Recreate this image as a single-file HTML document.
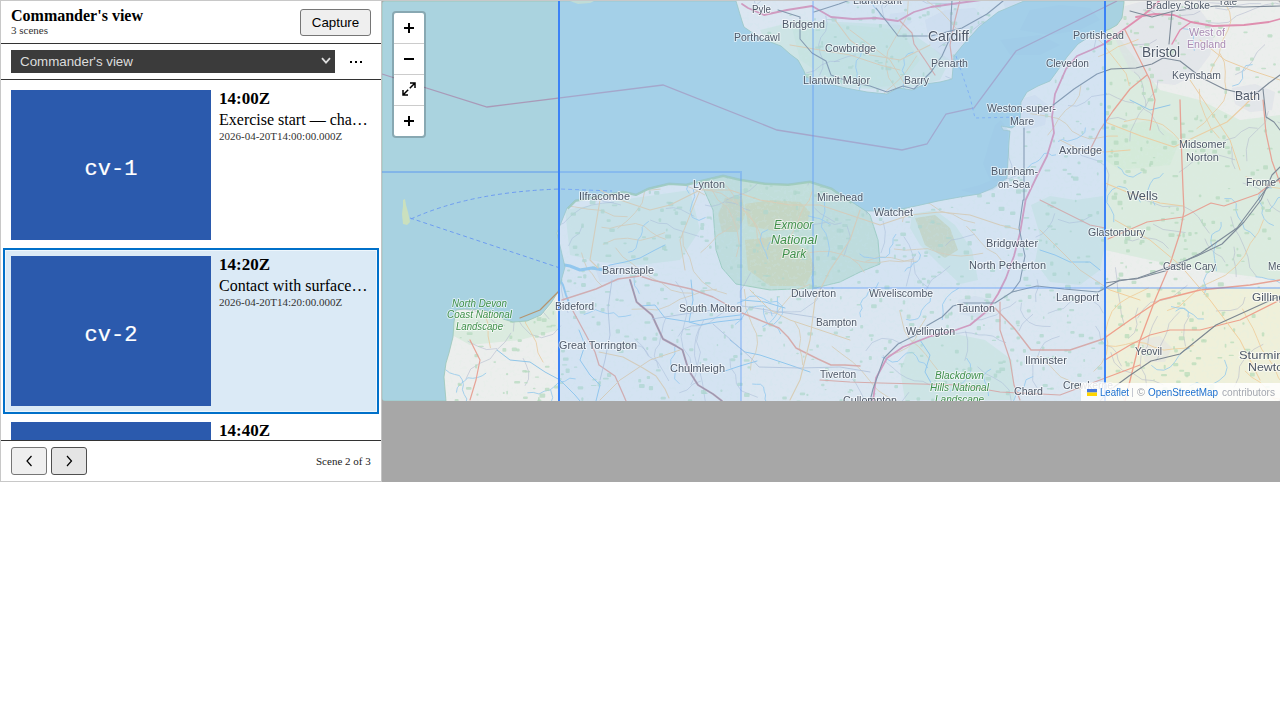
<!DOCTYPE html>
<html><head><meta charset="utf-8">
<style>
html,body{margin:0;padding:0;background:#fff;}
body{width:1280px;height:720px;overflow:hidden;position:relative;font-family:"Liberation Serif",serif;}
.a{position:absolute;}
#frame{position:absolute;left:0;top:0;width:1279px;height:480px;border-top:1px solid #c8c8c8;border-left:1px solid #c8c8c8;border-bottom:1px solid #c8c8c8;}
#pborder{position:absolute;left:381px;top:1px;width:1px;height:480px;background:#c4c4c4;}
.hl{position:absolute;left:1px;width:380px;height:1px;background:#333;}
.title{left:11px;top:6px;font-weight:bold;font-size:16px;line-height:20px;color:#000;white-space:nowrap;}
.sub{left:11px;top:24px;font-size:11px;line-height:13px;color:#333;white-space:nowrap;}
.btn{position:absolute;box-sizing:border-box;background:#efefef;border:1px solid #767676;border-radius:3px;font-family:"Liberation Sans",sans-serif;font-size:13.333px;color:#000;text-align:center;}
.cap{left:300px;top:9px;width:71px;height:27px;line-height:25px;}
.sel{left:11px;top:50px;width:324px;height:23px;background:#3b3b3b;color:#ddd;font-family:"Liberation Sans",sans-serif;font-size:13.333px;line-height:23px;}
.sel span{position:absolute;left:9px;top:0;}
.sel svg{position:absolute;left:310px;top:7px;}
.dots{left:348px;top:49px;font-family:"Liberation Sans",sans-serif;font-size:14px;color:#000;}
.card{position:absolute;left:3px;width:376px;height:166px;box-sizing:border-box;}
.card.on{background:#dbeaf6;border:2px solid #0070c9;box-shadow:inset 0 0 0 1px #eef6fc;}
.thumb{position:absolute;left:11px;width:200px;height:150px;background:#2b5aad;overflow:hidden;}
.thumb span{position:absolute;left:0;width:200px;top:67px;-webkit-text-stroke:0.2px #fff;text-align:center;color:#fff;font-family:"Liberation Mono",monospace;font-size:22px;line-height:26px;}
.t1{left:219px;font-weight:bold;font-size:17px;line-height:20px;white-space:nowrap;color:#000;}
.t2{left:219px;font-size:16px;line-height:19px;white-space:nowrap;color:#000;}
.t3{left:219px;font-size:11px;line-height:13px;color:#333;white-space:nowrap;}
.nav{top:447px;width:36px;height:28px;}
.scn{left:316px;top:455px;font-size:11px;line-height:13px;color:#222;white-space:nowrap;}
#list{position:absolute;left:1px;top:80px;width:380px;height:360px;overflow:hidden;}
#list .card{left:2px;}
#list .thumb{left:8px;}
#list .t1,#list .t2,#list .t3{left:216px;}
#map{position:absolute;left:382px;top:1px;width:898px;height:481px;background:#a7a7a7;overflow:hidden;}
#map svg{position:absolute;left:0;top:0;}
.ln{fill:#4e5868;font-family:"Liberation Sans",sans-serif;stroke:rgba(255,255,255,0.6);stroke-width:2px;paint-order:stroke;stroke-linejoin:round;}
.lg{fill:#3f8f4a;font-family:"Liberation Sans",sans-serif;font-style:italic;stroke:rgba(255,255,255,0.6);stroke-width:2px;paint-order:stroke;stroke-linejoin:round;}
.lp{fill:#a98bb5;font-family:"Liberation Sans",sans-serif;stroke:rgba(255,255,255,0.6);stroke-width:2px;paint-order:stroke;stroke-linejoin:round;}
.ctl{position:absolute;left:10px;top:10px;width:30px;height:123px;border:2px solid rgba(0,0,0,0.2);border-radius:4px;background:#fff;background-clip:padding-box;}
.ctl div{position:absolute;left:0;width:30px;height:30px;}
.ctl .sep{height:1px;background:#ccc;}
.attr{position:absolute;left:699px;top:382px;width:199px;height:18px;background:rgba(255,255,255,0.85);font-family:"Liberation Sans",sans-serif;font-size:10px;line-height:18px;white-space:nowrap;}
</style></head><body>
<div id="frame"></div>
<div id="pborder"></div>
<div class="a title">Commander's view</div>
<div class="a sub">3 scenes</div>
<div class="btn cap">Capture</div>
<div class="hl" style="top:43px;"></div>
<div class="a sel"><span>Commander's view</span><svg width="12" height="8" viewBox="0 0 12 8"><polyline points="1,1.2 5,5.6 9,1.2" fill="none" stroke="#ddd" stroke-width="1.8"/></svg></div>
<div class="a" style="left:350px;top:61px;width:2px;height:2px;background:#000"></div><div class="a" style="left:355px;top:61px;width:2px;height:2px;background:#000"></div><div class="a" style="left:360px;top:61px;width:2px;height:2px;background:#000"></div>
<div class="hl" style="top:79px;"></div>
<div id="list">
  <div class="card" style="top:2px;">
    <div class="thumb" style="top:8px;"><span>cv-1</span></div>
    <div class="a t1" style="top:7px;">14:00Z</div>
    <div class="a t2" style="top:28px;">Exercise start — cha…</div>
    <div class="a t3" style="top:48px;">2026-04-20T14:00:00.000Z</div>
  </div>
  <div class="card on" style="top:168px;">
    <div class="thumb" style="left:6px;top:6px;"><span>cv-2</span></div>
    <div class="a t1" style="left:214px;top:5px;">14:20Z</div>
    <div class="a t2" style="left:214px;top:26px;">Contact with surface…</div>
    <div class="a t3" style="left:214px;top:46px;">2026-04-20T14:20:00.000Z</div>
  </div>
  <div class="card" style="top:334px;">
    <div class="thumb" style="top:8px;"><span>cv-3</span></div>
    <div class="a t1" style="top:7px;">14:40Z</div>
  </div>
</div>
<div class="hl" style="top:440px;"></div>
<div class="btn nav" style="left:11px;"><svg width="34" height="26" viewBox="0 0 34 26" style="position:absolute;left:0;top:0"><polyline points="19.5,8 15,13 19.5,18" fill="none" stroke="#000" stroke-width="1.2"/></svg></div>
<div class="btn nav" style="left:51px;background:#e5e5e5;border-color:#4f4f4f;"><svg width="34" height="26" viewBox="0 0 34 26" style="position:absolute;left:0;top:0"><polyline points="15,8 19.5,13 15,18" fill="none" stroke="#000" stroke-width="1.2"/></svg></div>
<div class="a scn">Scene 2 of 3</div>

<div id="map">
<svg width="898" height="400" viewBox="382 1 898 400">
<defs><filter id="bl" x="0" y="0" width="100%" height="100%"><feGaussianBlur stdDeviation="0.35"/></filter><filter id="spk" x="0" y="0" width="100%" height="100%"><feTurbulence type="fractalNoise" baseFrequency="0.3" numOctaves="2" seed="7" result="n"/><feColorMatrix in="n" type="matrix" values="0 0 0 0 0.76  0 0 0 0 0.89  0 0 0 0 0.78  0 0 0 14 -8.0"/></filter><clipPath id="cp"><rect x="382" y="1" width="898" height="400" rx="3"/></clipPath></defs>
<g clip-path="url(#cp)">
<g filter="url(#bl)">
<rect x="382" y="1" width="898" height="400" fill="rgb(245,242,236)"/>
<polygon points="1105,288 1280,288 1280,401 1105,401" fill="#eef0d8" opacity="0.9"/>
<polygon points="1105,20 1160,90 1200,100 1240,120 1280,115 1280,280 1200,270 1150,260 1105,250" fill="#d6ecd2" opacity="0.6"/>
<polygon points="760,30 800,20 900,25 950,60 940,80 900,90 850,88 800,75 770,50" fill="#d6ecd2" opacity="0.6"/>
<polygon points="912,214 935,210 955,225 972,250 978,280 960,284 940,265 920,245 910,228" fill="#d6ecd2" opacity="0.6"/>
<polygon points="912,340 950,333 985,340 1012,360 1015,400 905,400 900,370" fill="#d6ecd2" opacity="0.6"/>
<polygon points="1031,205 1050,196 1075,200 1103,196 1106,240 1100,270 1080,285 1050,282 1035,262 1040,235" fill="#d6ecd2" opacity="0.6"/>
<polygon points="1105,130 1150,120 1180,140 1170,165 1120,170 1105,160" fill="#d6ecd2" opacity="0.6"/>
<polygon points="790,20 850,25 900,30 920,60 900,85 870,88 830,80 800,60" fill="#d6ecd2" opacity="0.6"/>
<polygon points="565,210 620,200 690,190 700,230 680,260 640,265 600,262 570,255" fill="#d6ecd2" opacity="0.6"/>
<polygon points="454,312 500,318 540,318 555,300 558,330 520,340 470,345 452,335" fill="#d6ecd2" opacity="0.6"/>
<polygon points="700,181 713,210 716,250 722,268 736,284 770,290 815,288 840,282 860,272 880,264 878,240 870,215 866,211 852,202 832,188 810,181 788,184 765,183 740,179 723,175" fill="#d2e6cc" stroke="#9ccca4" stroke-width="0.9"/>
<polygon points="725,198 742,196 745,215 738,232 722,232 718,215" fill="#d8d8a8" opacity="0.85"/>
<polygon points="745,204 770,200 800,202 810,212 806,228 775,231 748,226" fill="#d8d8a8" opacity="0.85"/>
<polygon points="745,240 780,236 808,250 815,268 805,286 770,286 748,270" fill="#d8d8a8" opacity="0.85"/>
<polygon points="915,218 935,215 950,228 958,250 945,258 925,245" fill="#d8d8a8" opacity="0.85"/>
<polygon points="1118,8 1140,2 1175,1 1200,10 1215,30 1210,55 1195,75 1175,85 1150,82 1130,70 1120,50 1112,30" fill="#e2dfe3" opacity="0.5"/>
<polygon points="925,20 945,10 975,8 990,25 985,50 965,62 945,60 930,45" fill="#e2dfe3" opacity="0.5"/>
<polygon points="1018,100 1035,95 1048,105 1045,125 1025,130 1015,118" fill="#e2dfe3" opacity="0.5"/>
<polygon points="958,300 975,296 992,300 994,312 978,318 960,314" fill="#e2dfe3" opacity="0.5"/>
<polygon points="1232,88 1255,84 1275,92 1272,110 1250,112 1235,104" fill="#e2dfe3" opacity="0.5"/>
<polygon points="1138,340 1160,336 1172,348 1165,362 1145,362" fill="#e2dfe3" opacity="0.5"/>
<polygon points="595,268 612,265 625,272 618,282 600,282" fill="#e2dfe3" opacity="0.5"/>
<polygon points="890,14 905,12 912,22 900,30 888,26" fill="#e2dfe3" opacity="0.5"/>
<polygon points="1003,1 1020,1 1018,8 1005,8" fill="#e2dfe3" opacity="0.5"/>
<rect x="382" y="1" width="898" height="400" filter="url(#spk)" opacity="0.2"/>
<g><polyline points="756.1246455457164,5.067667782827344 764.6,-2.1 772.5,-10.0 779.1,-18.9 789.0,-24.1 797.0,-31.9" fill="none" stroke="#b4b8c8" stroke-width="0.7" stroke-opacity="0.8"/>
<polyline points="945.2388285142222,245.70772908097825 951.2,240.1 959.2,238.7 967.0,236.4 974.8,234.2" fill="none" stroke="#b4b8c8" stroke-width="0.7" stroke-opacity="0.8"/>
<polyline points="515.0352596993099,288.586856120354 510.7,298.7 512.5,309.6 514.2,320.5 513.3,331.5" fill="none" stroke="#b4b8c8" stroke-width="0.7" stroke-opacity="0.8"/>
<polyline points="755.099670925008,3.669322312588962 752.3,-7.2 744.7,-15.5 736.4,-23.0 732.3,-33.5 729.2,-44.3 729.2,-55.5 725.7,-66.1 722.5,-76.9" fill="none" stroke="#b4b8c8" stroke-width="0.7" stroke-opacity="0.8"/>
<polyline points="1019.0290208607503,330.93357875911227 1022.1,324.2 1027.4,319.1 1033.0,314.2" fill="none" stroke="#b4b8c8" stroke-width="0.7" stroke-opacity="0.8"/>
<polyline points="548.8738671499839,236.4434473326064 550.9,247.8 555.6,258.3 555.4,269.8 561.5,279.4 561.7,290.9 563.9,302.2 568.1,312.9" fill="none" stroke="#b4b8c8" stroke-width="0.7" stroke-opacity="0.8"/>
<polyline points="728.6397173906648,6.136859563944407 733.4,15.2 733.2,25.5 729.5,35.1" fill="none" stroke="#b4b8c8" stroke-width="0.7" stroke-opacity="0.8"/>
<polyline points="1075.6204896396139,148.10092012688736 1081.2,155.3 1089.8,158.2 1098.4,161.0 1105.7,166.4 1108.9,174.9 1107.7,183.9 1105.9,192.8 1105.6,201.9" fill="none" stroke="#b4b8c8" stroke-width="0.7" stroke-opacity="0.8"/>
<polyline points="977.2361399777869,48.75265323091445 977.1,55.2 979.0,61.4 983.1,66.4 988.4,70.1" fill="none" stroke="#b4b8c8" stroke-width="0.7" stroke-opacity="0.8"/>
<polyline points="864.3342352163418,208.84533529198254 863.5,202.0 865.5,195.4 870.4,190.6" fill="none" stroke="#b4b8c8" stroke-width="0.7" stroke-opacity="0.8"/>
<polyline points="1145.8490009165866,106.71147353996983 1145.6,100.3 1143.0,94.5 1143.5,88.1 1141.7,82.0 1138.9,76.2 1134.1,71.9" fill="none" stroke="#b4b8c8" stroke-width="0.7" stroke-opacity="0.8"/>
<polyline points="541.711375786584,229.65742051582 552.8,227.0 563.5,223.3 571.5,215.2 580.8,208.7 591.5,205.1 602.7,203.1 614.0,202.2" fill="none" stroke="#b4b8c8" stroke-width="0.7" stroke-opacity="0.8"/>
<polyline points="1054.7362731639528,213.3849090753827 1052.3,221.0 1048.2,227.8 1042.7,233.7 1035.6,237.2" fill="none" stroke="#b4b8c8" stroke-width="0.7" stroke-opacity="0.8"/>
<polyline points="615.4226713920705,171.75039161455635 605.0,174.4 594.2,173.7 584.0,177.3 573.3,176.2 562.9,173.3" fill="none" stroke="#b4b8c8" stroke-width="0.7" stroke-opacity="0.8"/>
<polyline points="628.8871653387089,178.6354005512637 622.0,183.4 614.0,186.0 606.0,188.8 599.2,193.7 596.1,201.5" fill="none" stroke="#b4b8c8" stroke-width="0.7" stroke-opacity="0.8"/>
<polyline points="691.8741762801326,369.3968097032161 690.0,357.7 683.1,348.1 681.0,336.5 684.0,325.1 686.9,313.6 686.6,301.8 682.3,290.8 675.5,281.2" fill="none" stroke="#b4b8c8" stroke-width="0.7" stroke-opacity="0.8"/>
<polyline points="665.1442253289365,156.31131051624928 662.6,148.9 657.5,143.0 650.2,140.3 644.4,135.0 637.3,131.8 629.9,129.3 622.3,131.3" fill="none" stroke="#b4b8c8" stroke-width="0.7" stroke-opacity="0.8"/>
<polyline points="484.0725877332139,206.59850344516678 487.5,199.0 490.8,191.3 494.8,184.0 496.5,175.8 498.5,167.7" fill="none" stroke="#b4b8c8" stroke-width="0.7" stroke-opacity="0.8"/>
<polyline points="524.2306207120339,297.4968540790974 533.4,303.9 542.1,310.8 549.4,319.2" fill="none" stroke="#b4b8c8" stroke-width="0.7" stroke-opacity="0.8"/>
<polyline points="750.3023614338415,210.59566538099605 743.7,208.5 738.2,204.4 731.5,202.8 724.6,201.8 718.4,204.7 711.6,206.4 704.9,205.0" fill="none" stroke="#b4b8c8" stroke-width="0.7" stroke-opacity="0.8"/>
<polyline points="699.4677407547033,327.5063272145656 696.1,336.5 694.7,345.9 694.6,355.5 696.8,364.8 700.3,373.7 702.5,383.0 703.9,392.5 705.4,401.9" fill="none" stroke="#b4b8c8" stroke-width="0.7" stroke-opacity="0.8"/>
<polyline points="488.59007618258755,246.91383389864592 488.2,258.5 493.4,269.0 498.5,279.5" fill="none" stroke="#b4b8c8" stroke-width="0.7" stroke-opacity="0.8"/>
<polyline points="434.8842866284674,89.02135855860894 435.5,81.1 436.5,73.2 441.8,67.2 448.3,62.6" fill="none" stroke="#b4b8c8" stroke-width="0.7" stroke-opacity="0.8"/>
<polyline points="805.4695116253242,73.16776579643351 814.5,70.7 821.7,64.9 830.3,61.3 839.7,61.5" fill="none" stroke="#b4b8c8" stroke-width="0.7" stroke-opacity="0.8"/>
<polyline points="394.97746141438205,78.96764395598363 403.3,83.3 412.5,84.9 419.4,91.3" fill="none" stroke="#b4b8c8" stroke-width="0.7" stroke-opacity="0.8"/>
<polyline points="584.3416154005226,149.04885904249798 579.0,155.9 574.1,163.0 566.7,167.7 559.3,172.2 551.9,176.7 544.3,181.0 536.6,184.9 528.2,187.1" fill="none" stroke="#b4b8c8" stroke-width="0.7" stroke-opacity="0.8"/>
<polyline points="596.4721997151375,198.28634859594666 604.3,201.6 612.8,202.9 621.0,205.0" fill="none" stroke="#b4b8c8" stroke-width="0.7" stroke-opacity="0.8"/>
<polyline points="535.7475033531487,292.453300764737 542.7,289.4 547.9,283.9 549.2,276.5 552.5,269.7 553.9,262.2 557.9,255.8" fill="none" stroke="#b4b8c8" stroke-width="0.7" stroke-opacity="0.8"/>
<polyline points="812.4253758264492,133.9197755271723 805.4,132.3 798.2,131.6 791.2,133.3 784.1,134.5 777.7,137.8 773.5,143.7 767.6,147.8 763.1,153.4" fill="none" stroke="#b4b8c8" stroke-width="0.7" stroke-opacity="0.8"/>
<polyline points="884.619823986686,7.619409177705782 890.6,0.3 893.8,-8.7 900.2,-15.7 907.6,-21.6 915.0,-27.5 918.2,-36.5 920.6,-45.7" fill="none" stroke="#b4b8c8" stroke-width="0.7" stroke-opacity="0.8"/>
<polyline points="1209.54760089979,233.41793334944077 1203.7,225.5 1198.5,217.1 1191.3,210.5 1182.6,205.9 1172.7,206.1 1162.9,206.6 1153.7,203.1 1144.5,199.8" fill="none" stroke="#b4b8c8" stroke-width="0.7" stroke-opacity="0.8"/>
<polyline points="964.7370052075319,360.734131163353 967.6,350.9 967.7,340.7 965.5,330.7" fill="none" stroke="#b4b8c8" stroke-width="0.7" stroke-opacity="0.8"/>
<polyline points="752.6252899862337,157.9468512439928 743.8,150.0 734.3,142.9 730.3,131.6" fill="none" stroke="#b4b8c8" stroke-width="0.7" stroke-opacity="0.8"/>
<polyline points="388.55110687383745,184.53930758095535 390.6,190.3 389.8,196.3 389.7,202.4 391.0,208.3 391.4,214.4 393.1,220.2 397.6,224.3 403.1,226.8" fill="none" stroke="#b4b8c8" stroke-width="0.7" stroke-opacity="0.8"/>
<polyline points="921.2865892422178,184.12022395950095 911.3,183.0 902.2,178.8 895.8,171.1 892.8,161.5 893.7,151.5" fill="none" stroke="#b4b8c8" stroke-width="0.7" stroke-opacity="0.8"/>
<polyline points="650.2094534129511,219.99114290561928 658.3,223.2 667.0,223.7 674.1,228.7 682.4,231.3 690.7,233.9 699.0,236.4" fill="none" stroke="#b4b8c8" stroke-width="0.7" stroke-opacity="0.8"/>
<polyline points="1124.9433640932823,239.06868859706927 1132.6,240.9 1140.2,238.5 1148.1,238.0 1155.9,239.3 1163.0,242.9 1168.5,248.6" fill="none" stroke="#b4b8c8" stroke-width="0.7" stroke-opacity="0.8"/>
<polyline points="494.3925327861083,26.660798550868023 501.3,28.9 508.6,29.0 515.9,29.4 523.0,27.9 530.3,27.4 537.6,27.5 544.8,26.3 551.7,24.1" fill="none" stroke="#b4b8c8" stroke-width="0.7" stroke-opacity="0.8"/>
<polyline points="903.7510142826516,236.48300396851994 909.1,244.8 912.4,254.0 913.8,263.8 915.2,273.5 920.6,281.8 928.5,287.7" fill="none" stroke="#b4b8c8" stroke-width="0.7" stroke-opacity="0.8"/>
<polyline points="622.7539226671304,342.1181576705261 629.0,342.7 634.7,345.5 640.9,346.3 645.7,350.3 648.8,355.7" fill="none" stroke="#b4b8c8" stroke-width="0.7" stroke-opacity="0.8"/>
<polyline points="507.15462308870883,15.313698243954853 501.8,22.0 499.5,30.2 497.2,38.4 498.4,46.9 496.4,55.2 495.9,63.7" fill="none" stroke="#b4b8c8" stroke-width="0.7" stroke-opacity="0.8"/>
<polyline points="449.23305557590993,63.38222724922853 439.2,67.6 430.2,73.5 423.7,82.2" fill="none" stroke="#b4b8c8" stroke-width="0.7" stroke-opacity="0.8"/>
<polyline points="557.8489161154088,133.61690260698788 553.8,140.5 552.8,148.5 549.8,155.9" fill="none" stroke="#b4b8c8" stroke-width="0.7" stroke-opacity="0.8"/>
<polyline points="727.4157531864878,178.7367596230591 725.1,172.3 723.5,165.7 725.5,159.2 725.5,152.4 727.2,145.7" fill="none" stroke="#b4b8c8" stroke-width="0.7" stroke-opacity="0.8"/>
<polyline points="846.750335343389,148.41538677054388 837.8,151.1 831.1,157.6 824.1,163.7 817.3,170.1 810.5,176.5 807.8,185.4" fill="none" stroke="#b4b8c8" stroke-width="0.7" stroke-opacity="0.8"/>
<polyline points="1132.5098387659154,44.62676381104107 1141.0,44.5 1149.4,43.8 1156.7,39.5" fill="none" stroke="#b4b8c8" stroke-width="0.7" stroke-opacity="0.8"/>
<polyline points="613.7758653199406,53.939350974525865 618.4,48.2 619.9,41.0 618.2,33.9 614.5,27.5 608.3,23.5 601.5,20.9 594.3,19.2" fill="none" stroke="#b4b8c8" stroke-width="0.7" stroke-opacity="0.8"/>
<polyline points="1245.0444123298416,297.01430770420274 1243.0,304.0 1237.5,308.8 1230.4,310.5 1223.1,310.5 1215.9,311.0" fill="none" stroke="#b4b8c8" stroke-width="0.7" stroke-opacity="0.8"/>
<polyline points="757.7832422396361,397.3484528813985 749.5,394.1 741.3,390.8 736.4,383.5 735.6,374.7 730.5,367.4 729.9,358.6" fill="none" stroke="#b4b8c8" stroke-width="0.7" stroke-opacity="0.8"/>
<polyline points="1095.4437628637586,325.92009658320524 1099.4,332.0 1100.6,339.2 1105.1,344.9 1111.9,347.3 1116.6,352.8 1118.1,359.9 1121.6,366.3" fill="none" stroke="#b4b8c8" stroke-width="0.7" stroke-opacity="0.8"/>
<polyline points="1126.4863857234996,120.43365620617837 1118.1,117.5 1109.3,118.8 1102.7,124.8" fill="none" stroke="#b4b8c8" stroke-width="0.7" stroke-opacity="0.8"/>
<polyline points="751.9244565487711,124.6520035374757 758.0,122.4 764.3,123.7 769.9,126.8" fill="none" stroke="#b4b8c8" stroke-width="0.7" stroke-opacity="0.8"/>
<polyline points="511.07494326669985,332.82994879346415 505.0,342.1 496.9,349.8 490.3,358.8 480.2,363.2 470.7,369.0 465.9,379.1" fill="none" stroke="#b4b8c8" stroke-width="0.7" stroke-opacity="0.8"/>
<polyline points="690.7818117917427,384.85907023575635 695.8,374.6 697.9,363.4 700.4,352.2 696.5,341.5 699.1,330.3 703.8,319.9" fill="none" stroke="#b4b8c8" stroke-width="0.7" stroke-opacity="0.8"/>
<polyline points="1267.2508708157359,198.78495028248014 1270.5,205.5 1276.4,210.0 1282.9,213.7 1286.9,220.0" fill="none" stroke="#b4b8c8" stroke-width="0.7" stroke-opacity="0.8"/>
<polyline points="551.0691702159286,164.12097804884957 544.3,166.4 537.4,168.2 530.7,170.7" fill="none" stroke="#b4b8c8" stroke-width="0.7" stroke-opacity="0.8"/>
<polyline points="1207.8837552700775,22.569672777575555 1218.1,23.3 1228.4,22.3 1236.4,15.9 1246.0,12.3 1255.5,8.3 1265.1,4.8 1275.3,3.1 1285.3,5.3" fill="none" stroke="#b4b8c8" stroke-width="0.7" stroke-opacity="0.8"/>
<polyline points="847.1129929974247,174.76901449620874 854.1,183.8 861.7,192.3 863.9,203.5 867.0,214.5" fill="none" stroke="#b4b8c8" stroke-width="0.7" stroke-opacity="0.8"/>
<polyline points="1263.338434694445,344.2476890444265 1253.6,349.4 1245.7,357.1 1239.6,366.3 1238.7,377.2 1234.2,387.3" fill="none" stroke="#b4b8c8" stroke-width="0.7" stroke-opacity="0.8"/>
<polyline points="821.0997435806717,293.55739081659544 815.8,301.1 808.2,306.3 800.7,311.6 791.5,311.9 782.3,311.7 773.2,313.5 764.3,311.4" fill="none" stroke="#b4b8c8" stroke-width="0.7" stroke-opacity="0.8"/>
<polyline points="699.0701038670206,73.80204695082605 703.0,68.5 709.1,66.0 715.7,65.2" fill="none" stroke="#b4b8c8" stroke-width="0.7" stroke-opacity="0.8"/>
<polyline points="897.7909156472007,171.83061702026697 901.7,162.0 904.8,151.9 906.8,141.5 909.1,131.1 914.7,122.2 922.4,114.9 931.8,110.0 942.4,110.2" fill="none" stroke="#b4b8c8" stroke-width="0.7" stroke-opacity="0.8"/>
<polyline points="1142.8810390273238,9.995115662089681 1150.3,10.6 1156.8,14.3 1164.3,13.6 1171.4,15.6 1178.9,15.8 1186.3,15.1 1193.7,14.4 1200.3,11.0" fill="none" stroke="#b4b8c8" stroke-width="0.7" stroke-opacity="0.8"/>
<polyline points="1001.6134401830101,133.5626650977033 1004.9,141.4 1008.6,149.1 1008.9,157.7 1011.9,165.7 1011.0,174.1" fill="none" stroke="#b4b8c8" stroke-width="0.7" stroke-opacity="0.8"/>
<polyline points="1137.4557711939215,318.3116858335746 1143.1,309.5 1150.7,302.4 1160.9,300.4 1171.1,298.0 1179.2,291.5 1187.5,285.2" fill="none" stroke="#b4b8c8" stroke-width="0.7" stroke-opacity="0.8"/>
<polyline points="1233.9594949531906,246.6895030356407 1234.8,252.8 1233.5,258.9 1235.1,264.8 1236.0,271.0 1236.2,277.1" fill="none" stroke="#b4b8c8" stroke-width="0.7" stroke-opacity="0.8"/>
<polyline points="1179.9135385025545,311.49093500824017 1174.3,317.3 1169.1,323.5 1167.2,331.4 1164.0,338.8 1160.3,346.0 1160.2,354.1 1155.8,360.9" fill="none" stroke="#b4b8c8" stroke-width="0.7" stroke-opacity="0.8"/>
<polyline points="1268.33150710482,110.96927959501326 1265.4,122.2 1257.0,130.2 1248.9,138.3 1246.3,149.6 1246.9,161.2" fill="none" stroke="#b4b8c8" stroke-width="0.7" stroke-opacity="0.8"/>
<polyline points="680.67057472308,1.1445796574403246 686.1,-8.7 685.3,-19.8 682.8,-30.7 683.0,-41.9 679.9,-52.7" fill="none" stroke="#b4b8c8" stroke-width="0.7" stroke-opacity="0.8"/>
<polyline points="438.5466610955435,238.5906025532498 436.2,226.8 427.9,218.2 421.7,207.9 420.9,196.0" fill="none" stroke="#b4b8c8" stroke-width="0.7" stroke-opacity="0.8"/>
<polyline points="847.1690980290582,226.06420482765085 850.2,236.3 847.0,246.6 843.7,256.7" fill="none" stroke="#b4b8c8" stroke-width="0.7" stroke-opacity="0.8"/>
<polyline points="396.21776169690173,44.19089220448831 397.3,53.9 397.4,63.6 392.1,71.7 383.2,75.5" fill="none" stroke="#b4b8c8" stroke-width="0.7" stroke-opacity="0.8"/>
<polyline points="1016.2932678006076,301.5362835660121 1010.0,306.5 1002.5,309.1 996.8,314.8 989.2,317.0 981.7,319.7 973.7,320.0" fill="none" stroke="#b4b8c8" stroke-width="0.7" stroke-opacity="0.8"/>
<polyline points="1178.9004686556614,172.4304409307726 1187.3,166.4 1195.2,159.6 1205.4,157.5 1215.3,154.3 1225.3,156.9 1235.3,159.9" fill="none" stroke="#b4b8c8" stroke-width="0.7" stroke-opacity="0.8"/>
<polyline points="957.495748057521,4.906028289470109 947.2,3.6 936.9,3.3 926.5,3.1 917.4,-1.9 907.5,-5.0" fill="none" stroke="#b4b8c8" stroke-width="0.7" stroke-opacity="0.8"/>
<polyline points="1057.901513006841,219.33835154734967 1069.3,223.0 1081.1,221.5 1091.6,215.7" fill="none" stroke="#b4b8c8" stroke-width="0.7" stroke-opacity="0.8"/>
<polyline points="658.5301216209343,368.1703413375241 656.9,361.8 654.3,355.8 655.5,349.4 659.4,344.1 660.5,337.7 662.1,331.3 663.2,324.9 665.5,318.7" fill="none" stroke="#b4b8c8" stroke-width="0.7" stroke-opacity="0.8"/>
<polyline points="1153.079800379765,224.06419064931276 1163.1,229.5 1174.4,231.0 1185.6,232.6" fill="none" stroke="#b4b8c8" stroke-width="0.7" stroke-opacity="0.8"/>
<polyline points="1006.0868621002968,342.73202993343324 999.3,340.2 993.2,336.2 986.1,335.0 978.8,334.9 971.8,333.1 964.5,332.3 957.3,333.4 950.2,332.1" fill="none" stroke="#b4b8c8" stroke-width="0.7" stroke-opacity="0.8"/>
<polyline points="404.26993616306663,128.0494057405312 407.9,135.0 408.5,142.8 411.2,150.2" fill="none" stroke="#b4b8c8" stroke-width="0.7" stroke-opacity="0.8"/>
<polyline points="1222.1099781282032,3.531216870254527 1210.5,2.8 1198.9,1.8 1189.5,-5.0 1180.3,-12.1 1173.7,-21.6 1172.2,-33.1" fill="none" stroke="#b4b8c8" stroke-width="0.7" stroke-opacity="0.8"/>
<polyline points="1059.610679517989,336.26536256813307 1051.8,338.8 1044.5,342.7 1040.1,349.7 1037.3,357.5 1032.8,364.3 1032.9,372.6 1032.7,380.8 1037.1,387.8" fill="none" stroke="#b4b8c8" stroke-width="0.7" stroke-opacity="0.8"/>
<polyline points="1158.0640130980241,79.6647808833043 1156.7,89.5 1150.4,97.2 1145.7,106.0 1139.3,113.6 1134.8,122.5 1130.5,131.4 1129.8,141.4" fill="none" stroke="#b4b8c8" stroke-width="0.7" stroke-opacity="0.8"/>
<polyline points="728.4585189503465,116.36009012557412 734.0,112.0 740.8,109.9 747.6,111.9 753.6,115.8 759.4,119.8 763.2,125.8 762.9,132.9 766.6,138.9" fill="none" stroke="#b4b8c8" stroke-width="0.7" stroke-opacity="0.8"/>
<polyline points="1110.761384641995,352.133497814247 1114.3,362.6 1122.4,370.2 1133.0,373.4 1142.2,379.6 1153.2,380.6 1163.4,384.8" fill="none" stroke="#b4b8c8" stroke-width="0.7" stroke-opacity="0.8"/>
<polyline points="383.60931490512445,275.7619770588757 387.6,281.8 392.7,286.8 399.2,289.9 404.3,295.0" fill="none" stroke="#b4b8c8" stroke-width="0.7" stroke-opacity="0.8"/>
<polyline points="702.8723854310294,32.39001865530986 695.4,30.9 688.0,32.0 681.7,36.3 674.2,37.1" fill="none" stroke="#b4b8c8" stroke-width="0.7" stroke-opacity="0.8"/>
<polyline points="762.8280799809922,178.51851852470267 756.4,184.5 749.9,190.4 741.9,194.1 733.6,196.7 725.6,200.4" fill="none" stroke="#b4b8c8" stroke-width="0.7" stroke-opacity="0.8"/>
<polyline points="880.9030765959081,253.18002525212532 884.5,242.8 885.3,231.8 883.0,221.0" fill="none" stroke="#b4b8c8" stroke-width="0.7" stroke-opacity="0.8"/>
<polyline points="504.6644707298536,325.44166738170475 496.3,323.8 489.8,318.1 482.7,313.4 474.5,310.9 466.0,309.3 457.6,307.6 449.3,305.6 440.7,304.8" fill="none" stroke="#b4b8c8" stroke-width="0.7" stroke-opacity="0.8"/>
<polyline points="524.955933292306,385.8188328493704 528.5,379.3 528.7,371.8 526.2,364.8 523.0,358.1" fill="none" stroke="#b4b8c8" stroke-width="0.7" stroke-opacity="0.8"/>
<polyline points="510.05606399007064,142.40940543448596 503.3,137.0 498.1,130.1 493.1,123.0" fill="none" stroke="#b4b8c8" stroke-width="0.7" stroke-opacity="0.8"/>
<polyline points="406.41281619927287,270.5773354105619 410.9,265.8 416.2,262.0 422.3,259.8 428.5,257.9 433.7,254.0 440.0,252.3" fill="none" stroke="#b4b8c8" stroke-width="0.7" stroke-opacity="0.8"/>
<polyline points="865.7796727072973,350.91460733434303 872.2,342.6 881.9,338.4 892.4,339.4 901.8,344.1" fill="none" stroke="#b4b8c8" stroke-width="0.7" stroke-opacity="0.8"/>
<polyline points="497.0579666821699,348.54256025581225 486.7,349.6 476.9,345.9 467.6,341.1" fill="none" stroke="#b4b8c8" stroke-width="0.7" stroke-opacity="0.8"/>
<polyline points="672.0788267006254,33.89832745983521 673.8,27.7 675.0,21.3 678.8,16.1" fill="none" stroke="#b4b8c8" stroke-width="0.7" stroke-opacity="0.8"/>
<polyline points="765.1788233568675,103.0294799630928 769.6,97.9 774.2,92.9 780.6,90.7 786.7,87.8" fill="none" stroke="#b4b8c8" stroke-width="0.7" stroke-opacity="0.8"/>
<polyline points="729.649630327066,22.904304627310054 730.4,30.4 733.9,37.0 735.1,44.4 733.6,51.8 735.1,59.1 732.3,66.1 726.2,70.4 718.9,72.3" fill="none" stroke="#b4b8c8" stroke-width="0.7" stroke-opacity="0.8"/>
<polyline points="1230.727603410567,216.5135018367352 1233.7,227.1 1239.5,236.5 1244.0,246.6 1248.0,256.9 1249.8,267.7 1256.6,276.5" fill="none" stroke="#b4b8c8" stroke-width="0.7" stroke-opacity="0.8"/>
<polyline points="950.1271853962986,265.8687180281023 941.1,273.3 931.6,279.9 926.0,290.1" fill="none" stroke="#b4b8c8" stroke-width="0.7" stroke-opacity="0.8"/>
<polyline points="1103.2596820740573,313.21385346356294 1099.3,305.8 1092.6,300.9 1085.0,297.3 1076.7,298.1 1069.6,302.5 1063.7,308.4 1055.6,310.5 1047.8,313.4" fill="none" stroke="#b4b8c8" stroke-width="0.7" stroke-opacity="0.8"/>
<polyline points="977.4948602564128,366.6928388527416 984.9,373.3 993.8,377.7 1002.3,382.8 1009.1,390.0 1011.0,399.8 1012.2,409.6 1017.4,418.0" fill="none" stroke="#b4b8c8" stroke-width="0.7" stroke-opacity="0.8"/>
<polyline points="841.539433203119,222.97002383199796 834.6,224.5 827.9,221.9 820.9,223.4 813.8,224.5 807.7,228.3" fill="none" stroke="#b4b8c8" stroke-width="0.7" stroke-opacity="0.8"/>
<polyline points="628.7252391752123,161.89818103230425 633.2,151.2 636.3,139.9 644.9,132.1 650.5,121.9 653.0,110.5" fill="none" stroke="#b4b8c8" stroke-width="0.7" stroke-opacity="0.8"/>
<polyline points="848.4808267671096,374.49226708129896 855.6,382.9 860.8,392.5 865.6,402.4 867.6,413.2 873.3,422.6 874.0,433.5 873.5,444.5 871.5,455.3" fill="none" stroke="#b4b8c8" stroke-width="0.7" stroke-opacity="0.8"/>
<polyline points="908.2531478794245,178.15566309636824 913.3,169.0 919.1,160.3 920.0,149.9" fill="none" stroke="#b4b8c8" stroke-width="0.7" stroke-opacity="0.8"/>
<polyline points="1090.6239603370545,19.990684762622667 1094.3,29.2 1096.0,39.0 1093.9,48.8" fill="none" stroke="#b4b8c8" stroke-width="0.7" stroke-opacity="0.8"/>
<polyline points="571.4687547995411,15.660573369498087 576.1,6.2 579.8,-3.7 588.0,-10.2 598.0,-13.4 608.5,-13.4 617.6,-8.0 623.1,0.9" fill="none" stroke="#b4b8c8" stroke-width="0.7" stroke-opacity="0.8"/>
<polyline points="889.3731624723179,23.586476590520952 883.6,16.2 881.7,7.0 884.4,-2.0 885.0,-11.3 888.7,-19.9 893.2,-28.1 900.2,-34.3" fill="none" stroke="#b4b8c8" stroke-width="0.7" stroke-opacity="0.8"/>
<polyline points="960.9574657539055,198.13927766490866 966.8,193.0 973.8,189.7 978.6,183.6 985.5,180.0 993.2,179.3 1000.9,178.7 1008.7,178.6 1016.0,176.0" fill="none" stroke="#b4b8c8" stroke-width="0.7" stroke-opacity="0.8"/>
<polyline points="709.2758063719891,60.33403291161028 714.7,70.2 714.2,81.3 709.4,91.4 704.9,101.7 699.0,111.2 693.4,120.9" fill="none" stroke="#b4b8c8" stroke-width="0.7" stroke-opacity="0.8"/>
<polyline points="645.6610255956496,60.753716236365584 649.1,54.7 649.7,47.7 653.9,42.1 656.0,35.5" fill="none" stroke="#b4b8c8" stroke-width="0.7" stroke-opacity="0.8"/>
<polyline points="885.1713164543335,166.4249062799725 893.2,170.3 900.6,175.4 906.8,181.9 915.4,184.1" fill="none" stroke="#b4b8c8" stroke-width="0.7" stroke-opacity="0.8"/>
<polyline points="1017.6086455585755,104.49131715930659 1013.2,111.8 1006.3,116.6 998.6,120.1" fill="none" stroke="#b4b8c8" stroke-width="0.7" stroke-opacity="0.8"/>
<polyline points="500.943116683964,297.3630664024513 509.1,306.0 515.8,315.8 522.1,325.8 530.4,334.3 541.7,337.7 553.1,334.3 561.0,325.5" fill="none" stroke="#b4b8c8" stroke-width="0.7" stroke-opacity="0.8"/>
<polyline points="1115.3921355824891,267.24606156609417 1116.9,278.9 1117.8,290.7 1119.9,302.3 1121.3,314.0 1124.4,325.3" fill="none" stroke="#b4b8c8" stroke-width="0.7" stroke-opacity="0.8"/>
<polyline points="908.9285694892114,392.22792185297055 901.8,401.6 898.3,412.8 898.6,424.6 895.1,435.9" fill="none" stroke="#b4b8c8" stroke-width="0.7" stroke-opacity="0.8"/>
<polyline points="582.3744008539109,225.50440409217327 579.2,233.4 572.2,238.3 568.6,246.0" fill="none" stroke="#b4b8c8" stroke-width="0.7" stroke-opacity="0.8"/>
<polyline points="1120.7008438555042,390.7107707842932 1124.6,402.0 1124.3,413.8 1121.2,425.3 1118.7,437.0 1116.4,448.6" fill="none" stroke="#b4b8c8" stroke-width="0.7" stroke-opacity="0.8"/>
<polyline points="825.759911409391,15.61118756760138 827.1,23.4 825.7,31.2 820.8,37.5 818.6,45.0 820.0,52.8 822.9,60.2 822.8,68.1 819.5,75.3" fill="none" stroke="#b4b8c8" stroke-width="0.7" stroke-opacity="0.8"/>
<polyline points="1235.1757752860658,169.03937252253175 1232.1,162.0 1232.2,154.3 1231.4,146.6" fill="none" stroke="#b4b8c8" stroke-width="0.7" stroke-opacity="0.8"/>
<polyline points="827.4923955789584,119.4444603809713 819.4,122.2 811.2,124.8 804.1,129.6 795.5,130.2 787.5,127.1 780.6,122.1 774.1,116.5 769.3,109.4" fill="none" stroke="#b4b8c8" stroke-width="0.7" stroke-opacity="0.8"/>
<polyline points="458.0665968718891,145.72407155128306 455.2,156.1 456.9,166.7 464.3,174.5" fill="none" stroke="#b4b8c8" stroke-width="0.7" stroke-opacity="0.8"/>
<polyline points="1235.1611825285786,74.79703759409276 1245.0,70.1 1252.0,61.7 1257.1,52.1 1265.0,44.5" fill="none" stroke="#b4b8c8" stroke-width="0.7" stroke-opacity="0.8"/>
<polyline points="385.1431292638503,216.95158231073532 386.9,227.1 385.6,237.3 383.0,247.2 381.0,257.3" fill="none" stroke="#b4b8c8" stroke-width="0.7" stroke-opacity="0.8"/>
<polyline points="916.0164277062942,253.4849372512958 911.5,261.0 910.5,269.6 908.3,278.0 906.2,286.5" fill="none" stroke="#b4b8c8" stroke-width="0.7" stroke-opacity="0.8"/>
<polyline points="443.56807646822216,201.38272812528098 449.6,203.3 455.7,201.9 461.0,198.5 466.2,194.9 471.8,192.0" fill="none" stroke="#b4b8c8" stroke-width="0.7" stroke-opacity="0.8"/>
<polyline points="1264.784508039268,193.12886952380296 1258.2,188.3 1250.5,185.4 1242.7,183.0" fill="none" stroke="#b4b8c8" stroke-width="0.7" stroke-opacity="0.8"/>
<polyline points="818.7589538435291,145.20620882496084 811.7,136.7 801.3,133.1 791.2,128.5 780.2,128.9 770.8,123.1 759.8,122.3 748.8,121.9" fill="none" stroke="#b4b8c8" stroke-width="0.7" stroke-opacity="0.8"/>
<polyline points="1204.8290257321642,238.60486605342183 1207.4,244.5 1211.2,249.7 1216.0,253.9 1221.7,256.9 1225.1,262.4" fill="none" stroke="#b4b8c8" stroke-width="0.7" stroke-opacity="0.8"/>
<polyline points="1067.9506395916264,105.54759275547522 1076.8,106.1 1084.9,102.3 1091.6,96.5 1100.4,95.1 1109.2,94.0 1117.2,98.0 1125.4,101.4 1134.1,103.1" fill="none" stroke="#b4b8c8" stroke-width="0.7" stroke-opacity="0.8"/>
<polyline points="588.0057535828957,99.9884329321034 594.0,92.5 602.5,88.3 612.1,88.6 620.5,84.1 629.7,81.5" fill="none" stroke="#b4b8c8" stroke-width="0.7" stroke-opacity="0.8"/>
<polyline points="449.14911692248006,142.262168956993 444.1,133.2 436.8,125.8 434.4,115.8 437.9,106.0" fill="none" stroke="#b4b8c8" stroke-width="0.7" stroke-opacity="0.8"/>
<polyline points="856.0476719451187,54.7736615922348 848.5,56.4 841.2,58.9 834.0,61.8" fill="none" stroke="#b4b8c8" stroke-width="0.7" stroke-opacity="0.8"/>
<polyline points="814.4855296452527,207.98032359012242 820.6,213.7 827.8,217.8 835.0,222.2" fill="none" stroke="#b4b8c8" stroke-width="0.7" stroke-opacity="0.8"/>
<polyline points="1210.8926804217385,145.81273555404925 1219.5,144.7 1226.6,139.8 1235.0,137.4 1241.4,131.6 1249.0,127.5 1257.6,128.3" fill="none" stroke="#b4b8c8" stroke-width="0.7" stroke-opacity="0.8"/>
<polyline points="1050.5745770867557,326.5051728688489 1043.1,326.3 1035.7,325.4 1029.0,322.2 1023.9,316.8 1020.6,310.1 1021.5,302.7" fill="none" stroke="#b4b8c8" stroke-width="0.7" stroke-opacity="0.8"/>
<polyline points="1163.7822816065484,135.15874213898965 1159.3,130.5 1157.2,124.3 1153.8,118.8 1150.8,113.1 1145.2,109.9 1140.4,105.5" fill="none" stroke="#b4b8c8" stroke-width="0.7" stroke-opacity="0.8"/>
<polyline points="1277.5787867052445,121.88566003629123 1283.9,124.8 1290.7,125.8 1297.0,128.6 1303.9,127.9 1309.8,124.3" fill="none" stroke="#b4b8c8" stroke-width="0.7" stroke-opacity="0.8"/>
<polyline points="665.7906873773404,208.51121773811073 673.3,207.7 680.8,209.4 687.5,212.9 694.3,216.4" fill="none" stroke="#b4b8c8" stroke-width="0.7" stroke-opacity="0.8"/>
<polyline points="1154.1620740532892,391.0366285947244 1160.2,392.5 1165.7,395.4 1171.9,396.1 1178.0,397.3" fill="none" stroke="#b4b8c8" stroke-width="0.7" stroke-opacity="0.8"/>
<polyline points="458.3779851193377,187.30051926152595 451.5,185.5 444.4,185.6 437.6,183.3" fill="none" stroke="#b4b8c8" stroke-width="0.7" stroke-opacity="0.8"/>
<polyline points="451.7725666666315,110.61967640525386 450.1,121.7 450.7,132.9 455.3,143.1" fill="none" stroke="#b4b8c8" stroke-width="0.7" stroke-opacity="0.8"/>
<polyline points="678.006557541032,336.6573342067035 683.2,329.2 691.6,325.9 700.7,325.6 709.3,322.8 716.3,317.1 723.8,312.0 732.2,308.6" fill="none" stroke="#b4b8c8" stroke-width="0.7" stroke-opacity="0.8"/>
<polyline points="1261.2088808413741,3.7200757348172733 1249.4,3.6 1237.7,5.4 1226.8,9.9 1215.2,8.0" fill="none" stroke="#b4b8c8" stroke-width="0.7" stroke-opacity="0.8"/>
<polyline points="1157.6125832394332,315.9664667293116 1152.6,325.5 1149.0,335.7 1147.4,346.4 1141.1,355.2 1140.2,366.0 1145.3,375.5 1146.6,386.2" fill="none" stroke="#b4b8c8" stroke-width="0.7" stroke-opacity="0.8"/>
<polyline points="794.158694353159,127.30229725410854 805.4,124.6 815.2,118.6 825.3,113.1 835.3,107.4 846.7,106.2" fill="none" stroke="#b4b8c8" stroke-width="0.7" stroke-opacity="0.8"/>
<polyline points="740.1448504270088,297.88877149906835 740.2,290.9 744.1,285.0 747.4,278.8 750.7,272.6" fill="none" stroke="#b4b8c8" stroke-width="0.7" stroke-opacity="0.8"/>
<polyline points="988.6418841105071,94.9312510551908 983.2,98.0 977.2,100.1 971.9,103.4" fill="none" stroke="#b4b8c8" stroke-width="0.7" stroke-opacity="0.8"/>
<polyline points="1010.0094509895446,19.304500997066818 1000.5,21.8 990.6,21.5 980.9,23.4 973.2,29.6 964.6,34.5 956.5,40.2 946.8,41.8 938.6,47.3" fill="none" stroke="#b4b8c8" stroke-width="0.7" stroke-opacity="0.8"/>
<polyline points="1128.074442545758,338.5213472722204 1134.5,332.7 1137.1,324.4 1135.4,315.9 1137.9,307.6" fill="none" stroke="#b4b8c8" stroke-width="0.7" stroke-opacity="0.8"/>
<polyline points="1185.4987875455777,346.41305686256305 1183.7,335.7 1184.4,324.9 1189.7,315.4" fill="none" stroke="#b4b8c8" stroke-width="0.7" stroke-opacity="0.8"/>
<polyline points="930.3179455789423,385.3266497613642 922.9,381.3 914.5,380.8 906.6,377.9 899.4,373.6 893.1,368.0 886.6,362.6 883.0,355.0" fill="none" stroke="#b4b8c8" stroke-width="0.7" stroke-opacity="0.8"/>
<polyline points="945.4474229113088,76.31265188070381 951.3,78.7 955.8,83.3 961.7,85.6" fill="none" stroke="#b4b8c8" stroke-width="0.7" stroke-opacity="0.8"/>
<polyline points="716.4685824089021,132.7377644775946 723.1,126.4 728.1,118.6 728.9,109.5 732.2,100.9 737.9,93.6 739.4,84.5 742.8,76.0 741.4,66.9" fill="none" stroke="#b4b8c8" stroke-width="0.7" stroke-opacity="0.8"/>
<polyline points="1035.8983194229236,301.987877950299 1035.6,294.2 1038.5,286.9 1037.0,279.3" fill="none" stroke="#b4b8c8" stroke-width="0.7" stroke-opacity="0.8"/>
<polyline points="431.7176239934701,178.48398121848203 438.7,168.9 447.3,160.9 457.3,154.6 464.8,145.4 474.7,139.0 486.5,138.0 498.3,138.3 509.3,142.5" fill="none" stroke="#b4b8c8" stroke-width="0.7" stroke-opacity="0.8"/>
<polyline points="634.3000482534537,338.83416170263337 642.6,346.2 648.2,355.9 657.6,361.8 663.3,371.3 668.9,381.0" fill="none" stroke="#b4b8c8" stroke-width="0.7" stroke-opacity="0.8"/>
<polyline points="679.2586868366748,392.80466354145784 687.1,390.0 693.0,384.1 700.8,381.1" fill="none" stroke="#b4b8c8" stroke-width="0.7" stroke-opacity="0.8"/>
<polyline points="1000.9694779399086,129.3868631656263 991.2,132.0 981.6,129.2 972.0,126.0" fill="none" stroke="#b4b8c8" stroke-width="0.7" stroke-opacity="0.8"/>
<polyline points="475.32194889854986,176.68373135557997 467.8,171.8 460.6,166.3 456.3,158.4 453.5,149.8 454.0,140.9 454.9,131.9" fill="none" stroke="#f0cf9e" stroke-width="1" stroke-opacity="0.9"/>
<polyline points="548.6923995868515,199.89137827494125 561.2,205.2 574.7,206.9 588.1,209.2 601.6,210.4 614.0,216.1 627.6,216.7" fill="none" stroke="#f0cf9e" stroke-width="1" stroke-opacity="0.9"/>
<polyline points="799.579000844388,116.34316986326681 795.1,124.3 789.8,131.7 784.8,139.3 780.0,147.1" fill="none" stroke="#f0cf9e" stroke-width="1" stroke-opacity="0.9"/>
<polyline points="547.2876484252306,57.03724430165053 553.9,51.5 559.4,44.9 561.6,36.6 566.5,29.6 568.3,21.2 568.2,12.6 570.7,4.3 573.8,-3.7" fill="none" stroke="#f0cf9e" stroke-width="1" stroke-opacity="0.9"/>
<polyline points="775.9800497390681,313.3910892606993 783.3,304.5 790.7,295.8 799.5,288.5 810.2,284.2" fill="none" stroke="#f0cf9e" stroke-width="1" stroke-opacity="0.9"/>
<polyline points="809.2396481466731,252.56923183068628 819.6,251.4 830.1,251.5 840.2,254.0 850.1,257.5 858.4,263.8 864.3,272.4" fill="none" stroke="#f0cf9e" stroke-width="1" stroke-opacity="0.9"/>
<polyline points="794.7808561785363,321.8666190363711 799.3,329.7 800.6,338.6 799.3,347.5 801.8,356.2 802.7,365.1" fill="none" stroke="#f0cf9e" stroke-width="1" stroke-opacity="0.9"/>
<polyline points="676.8624409649663,176.02571834360361 689.7,175.4 702.0,179.5 711.2,188.5 717.6,199.7 727.6,207.8 733.3,219.4 737.3,231.6 739.3,244.4 736.2,256.9" fill="none" stroke="#f0cf9e" stroke-width="1" stroke-opacity="0.9"/>
<polyline points="1105.5022714544903,345.5444511498028 1115.5,346.4 1125.4,344.5 1135.1,341.9 1145.1,343.2 1154.3,347.2 1163.9,350.1 1173.9,348.9 1184.0,348.3 1193.6,345.4" fill="none" stroke="#f0cf9e" stroke-width="1" stroke-opacity="0.9"/>
<polyline points="1129.3210107690643,85.9702269747672 1126.2,73.8 1118.5,63.9 1110.7,54.0 1103.1,44.0 1093.7,35.6 1082.0,31.2" fill="none" stroke="#f0cf9e" stroke-width="1" stroke-opacity="0.9"/>
<polyline points="932.7503356675159,147.39027695849606 924.7,152.3 918.7,159.5 915.1,168.2 915.0,177.6 912.0,186.5 906.8,194.4 904.6,203.5 904.2,212.9 902.5,222.1" fill="none" stroke="#f0cf9e" stroke-width="1" stroke-opacity="0.9"/>
<polyline points="434.04511118663754,25.255715238807028 444.0,29.6 451.5,37.5 457.4,46.5 458.9,57.3 458.0,68.1" fill="none" stroke="#f0cf9e" stroke-width="1" stroke-opacity="0.9"/>
<polyline points="812.113922554925,191.3721584840946 809.2,200.4 803.3,207.9 799.6,216.6 796.8,225.7 791.8,233.8 790.1,243.2 786.2,251.9 779.4,258.6" fill="none" stroke="#f0cf9e" stroke-width="1" stroke-opacity="0.9"/>
<polyline points="938.5680541777673,371.0881211305367 932.0,362.8 925.6,354.3 918.5,346.5 910.2,339.8 904.5,330.9 902.0,320.5 899.6,310.2" fill="none" stroke="#f0cf9e" stroke-width="1" stroke-opacity="0.9"/>
<polyline points="386.55166299027934,43.113842081037944 376.5,47.0 365.7,47.8 355.0,46.4 344.6,43.9 334.7,39.5 326.4,32.5 317.8,26.1 309.5,19.2 299.9,14.3 290.6,9.0" fill="none" stroke="#f0cf9e" stroke-width="1" stroke-opacity="0.9"/>
<polyline points="966.3309585992067,226.10587904618632 973.6,233.4 980.1,241.4 987.2,249.0 996.3,253.9 1002.7,261.9" fill="none" stroke="#f0cf9e" stroke-width="1" stroke-opacity="0.9"/>
<polyline points="1242.4267045720467,308.69959748302847 1247.4,318.7 1253.0,328.4 1257.4,338.7 1261.6,349.1 1268.2,358.1 1274.3,367.5 1278.5,377.9 1285.2,386.8" fill="none" stroke="#f0cf9e" stroke-width="1" stroke-opacity="0.9"/>
<polyline points="490.4928417090103,348.08582776291667 488.1,336.0 488.0,323.8 484.2,312.1 485.4,299.9 482.5,288.0 484.8,275.9" fill="none" stroke="#f0cf9e" stroke-width="1" stroke-opacity="0.9"/>
<polyline points="1098.1641020394902,56.70994868971199 1108.4,52.7 1117.8,46.8 1128.3,43.4 1138.5,39.3" fill="none" stroke="#f0cf9e" stroke-width="1" stroke-opacity="0.9"/>
<polyline points="887.820647814729,355.5508351946443 898.6,352.1 908.7,347.0 915.7,338.2 919.8,327.7 925.9,318.1" fill="none" stroke="#f0cf9e" stroke-width="1" stroke-opacity="0.9"/>
<polyline points="969.8831390223248,37.47991366157033 958.2,31.0 949.7,20.8 940.6,11.1 930.0,3.1 919.2,-4.7 909.6,-14.0 898.1,-20.7 888.4,-29.8" fill="none" stroke="#f0cf9e" stroke-width="1" stroke-opacity="0.9"/>
<polyline points="717.5845272627218,25.011045337403747 728.1,32.2 736.6,41.8 748.4,46.8 757.8,55.5 765.5,65.7 773.6,75.5 777.2,87.8 777.1,100.6 777.5,113.4" fill="none" stroke="#f0cf9e" stroke-width="1" stroke-opacity="0.9"/>
<polyline points="763.7870565460357,244.6684014115789 760.0,233.8 755.4,223.2 747.2,215.2 740.7,205.7 730.7,199.8 721.2,193.3 710.0,190.6 698.7,188.4" fill="none" stroke="#f0cf9e" stroke-width="1" stroke-opacity="0.9"/>
<polyline points="904.7063748860621,99.50249162875784 896.4,88.8 888.6,77.6 885.8,64.4 887.8,51.0 894.5,39.1 901.3,27.4 907.4,15.2 908.2,1.7 906.8,-11.8 910.7,-24.9" fill="none" stroke="#f0cf9e" stroke-width="1" stroke-opacity="0.9"/>
<polyline points="554.9199073301552,41.37271585195201 556.3,28.2 558.8,15.1 562.8,2.4 569.2,-9.2 576.9,-20.0 579.9,-33.0 578.7,-46.2 580.8,-59.3" fill="none" stroke="#f0cf9e" stroke-width="1" stroke-opacity="0.9"/>
<polyline points="617.5661310682979,228.36417617940293 626.9,221.1 635.2,212.6 642.2,203.0 644.6,191.4" fill="none" stroke="#f0cf9e" stroke-width="1" stroke-opacity="0.9"/>
<polyline points="1245.717160743003,176.6674678047023 1257.7,181.4 1269.3,186.9 1282.1,188.7 1294.7,191.5 1304.9,199.4 1316.3,205.4 1324.6,215.2 1328.0,227.6" fill="none" stroke="#f0cf9e" stroke-width="1" stroke-opacity="0.9"/>
<polyline points="466.65585791060204,181.14387609458362 464.0,170.3 459.2,160.2 459.2,149.0 457.8,137.9 457.9,126.7 457.0,115.6 455.6,104.5 456.0,93.3 458.8,82.5" fill="none" stroke="#f0cf9e" stroke-width="1" stroke-opacity="0.9"/>
<polyline points="443.3220402230956,10.053917982760407 432.1,2.4 419.5,-2.5 409.8,-12.0 399.1,-20.3 388.8,-29.1 380.1,-39.5" fill="none" stroke="#f0cf9e" stroke-width="1" stroke-opacity="0.9"/>
<polyline points="767.65574276507,78.20418308146692 758.7,82.9 752.2,90.6 746.6,99.0 740.3,107.0 732.9,113.9 726.9,122.0 719.6,129.0 712.9,136.5 704.0,141.3 697.1,148.7" fill="none" stroke="#f0cf9e" stroke-width="1" stroke-opacity="0.9"/>
<polyline points="631.5857909188418,309.29359408254675 644.4,308.9 657.1,310.0 669.1,305.6 680.1,299.1 692.3,295.2 704.3,290.8 716.9,289.2" fill="none" stroke="#f0cf9e" stroke-width="1" stroke-opacity="0.9"/>
<polyline points="602.4479262011769,286.3607931742457 596.6,280.7 592.3,273.9 586.8,267.9 583.8,260.4 581.5,252.6" fill="none" stroke="#f0cf9e" stroke-width="1" stroke-opacity="0.9"/>
<polyline points="1199.2802250484358,88.85355983754965 1200.2,102.6 1204.9,115.5 1210.7,128.0 1219.6,138.4" fill="none" stroke="#f0cf9e" stroke-width="1" stroke-opacity="0.9"/>
<polyline points="888.5677888208072,157.08886142616268 893.2,149.4 895.5,140.7 895.6,131.8 895.9,122.8" fill="none" stroke="#f0cf9e" stroke-width="1" stroke-opacity="0.9"/>
<polyline points="660.5925371669371,189.13142266735233 649.8,190.1 639.1,188.3 628.5,186.3 619.5,180.2" fill="none" stroke="#f0cf9e" stroke-width="1" stroke-opacity="0.9"/>
<polyline points="760.6901067406801,245.220330591511 757.3,237.3 756.7,228.8 753.1,221.0 748.5,213.7 741.4,208.9 736.7,201.7 732.7,194.1 727.7,187.2 720.8,182.0" fill="none" stroke="#f0cf9e" stroke-width="1" stroke-opacity="0.9"/>
<polyline points="1182.1177079826762,143.17145507015226 1173.2,133.2 1162.8,124.8 1150.2,120.4 1136.9,118.7 1123.9,121.7" fill="none" stroke="#f0cf9e" stroke-width="1" stroke-opacity="0.9"/>
<polyline points="404.2197722369149,31.35691596858232 412.4,21.9 421.8,13.6 431.8,6.0 441.4,-2.1 447.9,-12.8 454.8,-23.3 461.9,-33.6 467.6,-44.9" fill="none" stroke="#f0cf9e" stroke-width="1" stroke-opacity="0.9"/>
<polyline points="1036.9593823204793,355.82255059429167 1043.2,360.9 1049.9,365.4 1055.1,371.4 1060.9,377.0 1068.3,380.1 1074.4,385.3 1081.0,389.8 1088.3,393.3" fill="none" stroke="#f0cf9e" stroke-width="1" stroke-opacity="0.9"/>
<polyline points="640.0956496766534,121.11596461645162 648.5,131.1 654.8,142.6 656.1,155.5 662.0,167.2 670.8,176.8 681.6,184.1 693.8,188.9 705.2,195.2" fill="none" stroke="#f0cf9e" stroke-width="1" stroke-opacity="0.9"/>
<polyline points="750.5196502656879,370.3409743898454 751.3,360.9 755.7,352.6 757.5,343.3 756.6,333.9 752.4,325.4 749.0,316.6 745.6,307.8 745.5,298.3 744.3,289.0" fill="none" stroke="#f0cf9e" stroke-width="1" stroke-opacity="0.9"/>
<polyline points="765.6660968889548,90.14002788890127 773.9,96.8 782.7,102.5 790.7,109.4 797.8,117.2 802.1,126.8 808.1,135.5 815.8,142.7 820.4,152.2 828.3,159.1" fill="none" stroke="#f0cf9e" stroke-width="1" stroke-opacity="0.9"/>
<polyline points="916.8126739455543,55.61559535958589 911.6,63.7 906.1,71.6 899.8,78.8 892.8,85.4 885.5,91.6 879.8,99.3 876.5,108.4 871.1,116.3 863.3,122.0 854.6,125.9" fill="none" stroke="#f0cf9e" stroke-width="1" stroke-opacity="0.9"/>
<polyline points="664.9366220070581,232.56999348988646 652.9,237.2 640.4,240.4 627.7,238.2 614.8,239.2 602.9,244.4" fill="none" stroke="#f0cf9e" stroke-width="1" stroke-opacity="0.9"/>
<polyline points="552.7290891386323,36.78748985025153 552.7,28.7 551.9,20.7 552.1,12.6 555.0,5.1 558.4,-2.2 562.8,-8.9 567.9,-15.2 571.1,-22.6" fill="none" stroke="#f0cf9e" stroke-width="1" stroke-opacity="0.9"/>
<polyline points="1225.2491368749725,3.734218717809611 1229.7,11.9 1230.9,21.1 1228.1,30.0 1223.7,38.2 1220.5,46.9 1218.8,56.1 1213.8,63.9 1210.5,72.6 1206.4,81.0" fill="none" stroke="#f0cf9e" stroke-width="1" stroke-opacity="0.9"/>
<polyline points="1030.3459163447,113.69157577843423 1039.8,115.0 1049.1,116.5 1058.4,118.6 1066.3,123.8 1072.2,131.3 1080.6,135.8 1089.6,138.9 1099.0,137.8 1108.4,136.1 1117.9,136.1" fill="none" stroke="#f0cf9e" stroke-width="1" stroke-opacity="0.9"/>
<polyline points="731.5748427349652,226.1407615396547 725.1,231.2 717.8,235.1 712.4,241.3 706.7,247.3 700.5,252.7" fill="none" stroke="#f0cf9e" stroke-width="1" stroke-opacity="0.9"/>
<polyline points="975.1074696257618,223.0670307646213 963.3,220.1 952.6,214.2 940.7,211.2 930.7,204.2 919.8,198.7 907.7,197.8" fill="none" stroke="#f0cf9e" stroke-width="1" stroke-opacity="0.9"/>
<polyline points="1272.6091272176027,397.86700589818605 1281.0,399.3 1288.9,402.3 1297.4,402.5 1305.6,405.0 1314.0,405.9 1322.3,407.7 1329.3,412.5 1337.1,415.9 1345.5,416.8" fill="none" stroke="#f0cf9e" stroke-width="1" stroke-opacity="0.9"/>
<polyline points="917.5715979378491,261.30571953800455 904.3,261.0 891.4,257.6 878.1,257.0 865.6,261.5" fill="none" stroke="#f0cf9e" stroke-width="1" stroke-opacity="0.9"/>
<polyline points="665.7557237533063,239.31350048534165 657.7,236.3 650.4,231.5 643.9,225.9 635.6,223.5 627.0,224.9 618.5,226.1 610.1,228.4 601.5,227.3" fill="none" stroke="#f0cf9e" stroke-width="1" stroke-opacity="0.9"/>
<polyline points="615.5178791373071,247.67769687802416 622.8,256.9 632.3,263.7 641.3,271.3 651.1,277.6 661.6,282.9 670.9,290.1 682.3,292.9 694.0,293.2" fill="none" stroke="#f0cf9e" stroke-width="1" stroke-opacity="0.9"/>
<polyline points="1046.9970542136452,60.38430552911576 1039.3,64.9 1033.7,72.0 1028.7,79.5 1024.7,87.5 1018.8,94.2 1015.9,102.7 1014.2,111.6 1011.7,120.2" fill="none" stroke="#f0cf9e" stroke-width="1" stroke-opacity="0.9"/>
<polyline points="893.9387370955956,248.97818677596103 905.2,250.2 916.5,249.4 927.8,248.6 938.4,252.5 949.5,254.9 960.8,256.1 972.1,255.0 983.2,253.2" fill="none" stroke="#f0cf9e" stroke-width="1" stroke-opacity="0.9"/>
<polyline points="1244.9220919094917,370.94728424514744 1251.8,377.3 1259.9,382.1 1266.5,388.8 1271.8,396.5 1278.5,403.0 1283.1,411.2" fill="none" stroke="#f0cf9e" stroke-width="1" stroke-opacity="0.9"/>
<polyline points="592.9751964213247,26.34463632543842 585.1,31.2 576.2,33.5 567.0,34.3 558.3,31.3 549.0,31.3" fill="none" stroke="#f0cf9e" stroke-width="1" stroke-opacity="0.9"/>
<polyline points="831.7599459832506,346.28386638320734 841.9,354.1 852.3,361.7 861.5,370.6 869.6,380.5 877.8,390.3 888.5,397.4 898.7,405.2 909.1,412.7 921.7,414.9 934.5,414.4" fill="none" stroke="#f0cf9e" stroke-width="1" stroke-opacity="0.9"/>
<polyline points="726.8617565024238,293.9465913316554 713.6,289.9 702.3,281.9 693.5,271.2 689.8,257.8 683.3,245.6 682.7,231.7" fill="none" stroke="#f0cf9e" stroke-width="1" stroke-opacity="0.9"/>
<polyline points="914.0794800630777,258.87683390177745 902.0,261.8 889.6,260.8 877.3,262.8 864.9,262.2 852.7,259.5" fill="none" stroke="#f0cf9e" stroke-width="1" stroke-opacity="0.9"/>
<polyline points="383.90322647565364,116.47769008751017 394.7,109.5 403.3,100.1 409.5,88.9 415.4,77.5" fill="none" stroke="#f0cf9e" stroke-width="1" stroke-opacity="0.9"/>
<polyline points="543.2584162445197,362.4202733763011 538.0,352.9 536.2,342.2 531.1,332.6 525.6,323.2 523.7,312.5 525.8,301.8 525.6,291.0 521.2,281.0 520.2,270.2 520.1,259.3" fill="none" stroke="#f0cf9e" stroke-width="1" stroke-opacity="0.9"/>
<polyline points="1148.6945701450297,287.8581530292945 1138.8,292.7 1128.9,297.4 1119.5,303.2 1112.1,311.3 1107.9,321.5 1105.5,332.3 1107.8,343.0 1106.5,353.9 1101.4,363.7 1093.6,371.5" fill="none" stroke="#f0cf9e" stroke-width="1" stroke-opacity="0.9"/>
<polyline points="815.0628057008436,142.34658705852394 818.0,131.5 816.6,120.3 811.9,110.2 805.8,100.7 800.7,90.7 797.7,79.9" fill="none" stroke="#f0cf9e" stroke-width="1" stroke-opacity="0.9"/>
<polyline points="414.8015646591821,375.87868936569066 402.3,375.4 390.1,372.6 377.5,372.7 365.6,368.9 353.2,367.5 340.8,369.6" fill="none" stroke="#f0cf9e" stroke-width="1" stroke-opacity="0.9"/>
<polyline points="1080.9343102944006,85.26839325002358 1079.3,95.4 1073.8,104.2 1065.6,110.3 1059.0,118.2 1053.9,127.2 1047.6,135.3" fill="none" stroke="#f0cf9e" stroke-width="1" stroke-opacity="0.9"/>
<polyline points="1263.6457367514986,219.4603405263645 1258.5,232.3 1250.3,243.4 1244.5,255.8 1235.7,266.5 1225.2,275.4 1212.7,281.3 1200.1,287.0 1190.0,296.4 1180.0,305.9 1167.1,310.6" fill="none" stroke="#f0cf9e" stroke-width="1" stroke-opacity="0.9"/>
<polyline points="1196.5438595917926,128.76798903872609 1204.4,122.9 1210.6,115.4 1217.6,108.4 1223.8,100.9 1226.4,91.5 1224.9,81.8 1225.3,72.0 1224.3,62.2 1220.0,53.4" fill="none" stroke="#f0cf9e" stroke-width="1" stroke-opacity="0.9"/>
<polyline points="387.118151464721,391.3957849104707 388.9,400.9 386.7,410.4 384.8,419.9 384.3,429.6 380.8,438.7 375.4,446.7 369.0,454.0 360.3,458.3 353.9,465.6" fill="none" stroke="#f0cf9e" stroke-width="1" stroke-opacity="0.9"/>
<polyline points="913.5925496081254,108.15605637560532 921.5,105.3 927.6,99.6 935.3,96.3 943.1,93.0 951.5,92.7 959.8,92.2 967.7,95.2 975.9,96.8 984.2,96.2" fill="none" stroke="#f0cf9e" stroke-width="1" stroke-opacity="0.9"/>
<polyline points="950.1331424637439,391.18401002237056 956.1,387.0 962.3,383.3 967.3,378.0 970.5,371.4 970.4,364.1 966.5,358.0" fill="none" stroke="#9ccdea" stroke-width="0.9"/>
<polyline points="777.4088857452163,296.81674818633377 777.4,301.0 778.0,305.0 777.3,309.1 777.2,313.3 775.0,316.7 772.4,320.0 769.4,322.8 765.8,324.9 762.2,327.0" fill="none" stroke="#9ccdea" stroke-width="0.9"/>
<polyline points="860.3664284149327,3.444519890428909 865.9,1.5 871.6,2.6 874.5,7.6 878.7,11.8 881.4,17.0" fill="none" stroke="#9ccdea" stroke-width="0.9"/>
<polyline points="513.6849783687788,317.6204848874961 511.6,313.3 507.0,312.1 503.0,309.3 498.2,309.1 493.8,310.9" fill="none" stroke="#9ccdea" stroke-width="0.9"/>
<polyline points="474.46927333327073,239.47764092060237 480.1,237.5 485.7,239.5 489.0,244.4 491.1,249.9 494.9,254.5 500.6,256.1 506.4,254.8 512.3,255.3" fill="none" stroke="#9ccdea" stroke-width="0.9"/>
<polyline points="830.6911143753422,224.87447594960997 825.4,221.6 819.9,218.7 813.9,217.4 807.9,215.8" fill="none" stroke="#9ccdea" stroke-width="0.9"/>
<polyline points="1006.016852879162,103.51184281162296 1002.6,110.2 995.7,112.9 988.8,110.2 984.7,104.0 980.4,97.9 972.9,97.2 966.2,100.4 958.7,100.6 952.0,103.8" fill="none" stroke="#9ccdea" stroke-width="0.9"/>
<polyline points="450.96735659335235,137.28621969836408 450.6,133.1 451.4,129.0 455.1,127.0 458.8,125.0 462.9,125.5 466.7,127.3 468.7,131.0 472.8,131.7 476.9,132.3 480.8,134.1" fill="none" stroke="#9ccdea" stroke-width="0.9"/>
<polyline points="1033.2929310288287,376.45364235587255 1026.1,379.7 1023.9,387.2 1017.3,391.5 1014.5,398.8 1011.2,406.0" fill="none" stroke="#9ccdea" stroke-width="0.9"/>
<polyline points="1273.7939317901305,225.60330039014318 1268.4,223.1 1264.2,218.8 1261.9,213.4 1262.9,207.5 1259.8,202.4 1258.7,196.5 1261.3,191.2 1265.9,187.4 1271.8,188.0" fill="none" stroke="#9ccdea" stroke-width="0.9"/>
<polyline points="737.0287243381769,303.3065832997556 743.8,300.7 749.6,296.4 756.8,296.0 763.6,298.7 769.9,302.2 777.1,301.4 782.3,306.4 782.5,313.7 778.5,319.7 773.3,324.8" fill="none" stroke="#9ccdea" stroke-width="0.9"/>
<polyline points="958.6465157169677,288.28977868294885 952.0,292.3 946.4,297.8 942.5,304.5 943.2,312.3 942.2,320.0" fill="none" stroke="#9ccdea" stroke-width="0.9"/>
<polyline points="878.5180538172901,282.37903285744216 876.5,286.8 872.9,290.0 868.4,291.8 866.6,296.3 862.7,299.3 860.6,303.6 862.2,308.2 859.8,312.5 860.6,317.2" fill="none" stroke="#9ccdea" stroke-width="0.9"/>
<polyline points="1232.2260267463375,86.13917417648882 1238.8,84.1 1242.7,78.4 1242.2,71.5 1245.8,65.6 1252.6,64.6" fill="none" stroke="#9ccdea" stroke-width="0.9"/>
<polyline points="881.6311663786222,357.03529155834445 887.1,359.1 892.2,362.1 898.0,361.3 902.0,357.1 906.4,353.2 912.2,352.3 916.5,356.4 918.9,361.7 924.5,363.2 927.8,368.1" fill="none" stroke="#9ccdea" stroke-width="0.9"/>
<polyline points="913.5528231546779,52.047987417747144 907.7,53.9 903.8,58.7 904.5,64.8 902.2,70.5 905.2,75.9 903.4,81.8 903.5,87.9 908.4,91.7 914.5,92.6" fill="none" stroke="#9ccdea" stroke-width="0.9"/>
<polyline points="1212.3979130752305,269.2214500828763 1206.5,273.8 1203.6,280.7 1206.2,287.7 1204.1,294.8" fill="none" stroke="#9ccdea" stroke-width="0.9"/>
<polyline points="1117.6968741145774,166.7125928089544 1121.7,169.5 1124.0,173.9 1128.3,176.2 1133.1,177.1 1137.2,174.5 1141.5,172.3" fill="none" stroke="#9ccdea" stroke-width="0.9"/>
<polyline points="859.6568648245126,253.86903423629684 864.0,257.1 869.4,257.6 874.7,258.5 880.1,257.4 885.5,257.3 889.6,253.7 889.7,248.3 892.9,243.9 893.1,238.5 896.1,234.0" fill="none" stroke="#9ccdea" stroke-width="0.9"/>
<polyline points="648.8122426639047,221.3349848533075 645.2,224.0 642.2,227.3 642.3,231.8 640.9,236.1 638.1,239.6 637.1,244.0 635.9,248.3 632.5,251.2 628.2,252.4" fill="none" stroke="#9ccdea" stroke-width="0.9"/>
<polyline points="390.62766423946533,128.1601224807252 393.1,123.3 392.6,117.8 396.4,113.9 400.4,110.1 404.1,106.1" fill="none" stroke="#9ccdea" stroke-width="0.9"/>
<polyline points="1058.027532524762,141.55758597797112 1062.5,139.4 1067.2,141.3 1072.0,140.0 1076.8,138.5 1081.1,135.9 1084.8,132.5 1085.4,127.5" fill="none" stroke="#9ccdea" stroke-width="0.9"/>
<polyline points="1194.3357338856042,50.82520149321821 1193.5,43.2 1193.4,35.5 1188.7,29.5 1181.1,28.3" fill="none" stroke="#9ccdea" stroke-width="0.9"/>
<polyline points="676.1568715982773,176.43647770127797 677.9,171.7 682.5,169.6 687.3,171.3 690.8,174.9 690.7,180.0 688.2,184.4 686.6,189.2 689.2,193.5" fill="none" stroke="#9ccdea" stroke-width="0.9"/>
<polyline points="575.6862309110522,378.95140208629607 569.8,378.2 564.8,381.3 558.9,382.2 554.6,386.3 550.0,390.0 544.2,391.2 539.0,394.0 533.3,392.4 527.4,392.8" fill="none" stroke="#9ccdea" stroke-width="0.9"/>
<polyline points="589.6049875444918,196.08150055357567 594.1,192.8 595.8,187.5 596.5,182.0 596.1,176.5 593.6,171.5 588.5,169.4 585.5,164.7 584.3,159.2" fill="none" stroke="#9ccdea" stroke-width="0.9"/>
<polyline points="1255.4604980852469,276.76469479565515 1261.8,277.4 1268.0,279.1 1274.4,279.6 1279.8,282.9 1285.5,285.9 1289.0,291.3 1293.0,296.2" fill="none" stroke="#9ccdea" stroke-width="0.9"/>
<polyline points="1151.3275847748553,365.33377331816814 1156.9,369.7 1163.9,370.2 1170.3,367.1 1175.0,361.7 1178.8,355.8 1183.6,350.5 1190.1,347.8" fill="none" stroke="#9ccdea" stroke-width="0.9"/>
<polyline points="814.84906229482,270.84769620293355 811.6,277.1 813.2,284.0 812.5,291.0 814.9,297.6" fill="none" stroke="#9ccdea" stroke-width="0.9"/>
<polyline points="444.5091454862243,45.363452554341755 438.0,41.9 430.7,40.7 426.2,34.8 418.9,33.3 412.2,30.2 408.9,23.6 407.9,16.2 408.6,8.9 403.6,3.4" fill="none" stroke="#9ccdea" stroke-width="0.9"/>
<polyline points="637.2592400080321,95.8474549008342 634.5,100.0 632.9,104.8 628.6,107.3 623.6,107.6 619.5,104.6 614.6,105.5" fill="none" stroke="#9ccdea" stroke-width="0.9"/>
<polyline points="976.5915996472354,150.72930529564817 971.5,156.6 963.9,158.1 958.4,163.5 950.7,164.1 943.9,160.3 936.2,159.1 930.4,164.4" fill="none" stroke="#9ccdea" stroke-width="0.9"/>
<polyline points="856.7539316375363,79.66485523670809 857.2,73.3 855.7,67.2 856.3,60.8 860.6,56.2 861.7,49.9" fill="none" stroke="#9ccdea" stroke-width="0.9"/>
<polyline points="1203.9085221844034,318.98035615764513 1197.8,318.9 1193.4,314.7 1188.1,311.7 1183.1,308.2 1177.0,307.8 1171.0,306.6" fill="none" stroke="#9ccdea" stroke-width="0.9"/>
<polyline points="904.7361642783616,271.42997657130144 907.1,268.1 911.0,267.0 912.9,263.4 916.8,262.0 919.5,259.0 920.5,255.0 918.4,251.5" fill="none" stroke="#9ccdea" stroke-width="0.9"/>
<polyline points="438.0879426799863,204.26253323575497 436.3,209.6 431.4,212.3 425.8,211.4 420.4,209.7 414.8,209.2 409.4,207.8 404.1,205.9 398.5,205.3 393.6,202.4" fill="none" stroke="#9ccdea" stroke-width="0.9"/>
<polyline points="611.973480384846,146.83037761427283 607.3,143.0 601.5,141.3 597.8,136.6 593.2,132.7 590.9,127.2 589.2,121.4 590.6,115.5 595.8,112.5 598.6,107.2 596.9,101.4" fill="none" stroke="#9ccdea" stroke-width="0.9"/>
<polyline points="1113.714598433121,222.15055275281046 1113.8,215.0 1110.7,208.5 1106.8,202.4 1107.9,195.3 1112.2,189.6 1118.7,186.3 1125.7,187.9 1130.6,193.1 1137.2,195.8 1140.4,202.3" fill="none" stroke="#9ccdea" stroke-width="0.9"/>
<polyline points="1255.2875772678094,237.388898854918 1250.6,232.3 1244.4,229.2 1242.3,222.6 1238.2,217.0 1235.9,210.5 1236.3,203.5 1231.4,198.7 1224.4,198.6" fill="none" stroke="#9ccdea" stroke-width="0.9"/>
<polyline points="752.1951934081226,384.00262644140577 756.3,384.3 760.5,384.3 763.6,387.0 764.2,391.1 765.6,394.9 765.0,399.0 766.5,402.9" fill="none" stroke="#9ccdea" stroke-width="0.9"/>
<polyline points="737.3015703732442,70.36952286775804 740.0,76.6 744.7,81.3 746.0,88.0 746.2,94.7 744.8,101.3 747.4,107.5" fill="none" stroke="#9ccdea" stroke-width="0.9"/>
<polyline points="810.8226300726158,130.42812533637294 806.4,132.3 802.0,130.5 797.3,131.7 793.1,134.0 790.9,138.3 787.3,141.3" fill="none" stroke="#9ccdea" stroke-width="0.9"/>
<polyline points="824.7492749623133,195.80723594395482 824.5,203.7 824.9,211.6 822.5,219.2 821.4,227.0 825.9,233.5 828.1,241.1 829.4,248.9 827.9,256.7" fill="none" stroke="#9ccdea" stroke-width="0.9"/>
<polyline points="1187.9505432027695,316.8484427849935 1188.4,311.8 1184.9,308.3 1179.9,308.5 1175.6,311.2" fill="none" stroke="#9ccdea" stroke-width="0.9"/>
<polyline points="583.7279622354386,314.56616061326724 589.8,312.5 595.5,309.7 601.4,312.0 607.6,313.7 613.9,312.7 618.7,316.9 625.1,316.3 631.3,314.9" fill="none" stroke="#9ccdea" stroke-width="0.9"/>
<polyline points="710.7909150760963,178.06649849346897 703.9,180.5 697.2,183.3 693.3,189.5 694.7,196.6 692.0,203.4 690.1,210.5 692.3,217.4 699.0,220.4 705.6,217.4" fill="none" stroke="#9ccdea" stroke-width="0.9"/>
<polyline points="768.170462622887,229.60676689192897 761.8,232.7 760.1,239.5 762.5,246.1 765.7,252.4 767.8,259.1" fill="none" stroke="#9ccdea" stroke-width="0.9"/>
<polyline points="991.1143412445497,368.9876935501754 986.6,371.7 983.4,375.9 984.6,381.0 986.6,385.8 987.9,390.9 988.6,396.1" fill="none" stroke="#9ccdea" stroke-width="0.9"/>
<polyline points="486.16807379010714,372.99883357673957 482.2,375.8 477.6,377.5 472.8,378.3 467.9,377.8 464.3,381.1 460.4,384.0 457.3,387.8 456.4,392.6" fill="none" stroke="#9ccdea" stroke-width="0.9"/>
<polyline points="1268.9443131622145,210.40222054200115 1274.1,204.5 1278.0,197.8 1285.6,196.2 1291.9,191.6 1299.6,193.0 1305.9,188.4 1312.0,183.6 1319.8,184.2 1324.2,190.6" fill="none" stroke="#9ccdea" stroke-width="0.9"/>
<polyline points="869.9433052328823,101.69967308256463 865.4,107.2 859.2,110.7 854.5,116.1 847.8,118.7 845.4,125.4 842.1,131.7 835.2,133.7 828.1,133.9 821.1,132.2 815.1,128.4" fill="none" stroke="#9ccdea" stroke-width="0.9"/>
<polyline points="846.9403069098864,102.49696265813266 850.3,97.4 855.7,94.5 859.4,89.7 860.5,83.7 857.0,78.7" fill="none" stroke="#9ccdea" stroke-width="0.9"/>
<polyline points="734.9532106319041,324.58229738442185 740.7,319.9 744.7,313.8 749.2,307.9 756.4,306.3 763.7,305.8 770.3,309.2 772.2,316.3" fill="none" stroke="#9ccdea" stroke-width="0.9"/>
<polyline points="639.3819461701435,293.84166464267 637.6,289.5 634.7,285.8 634.2,281.1 634.0,276.4 637.2,272.9 639.3,268.7" fill="none" stroke="#9ccdea" stroke-width="0.9"/>
<polyline points="780.7037692541683,334.0073162772206 778.3,328.8 773.6,325.6 768.1,324.1 765.5,319.0 763.7,313.6 763.5,307.9" fill="none" stroke="#9ccdea" stroke-width="0.9"/>
<polyline points="1189.7222504802753,385.7867131311332 1197.0,382.6 1204.3,386.0 1212.2,384.5 1219.1,380.5 1225.1,375.2 1227.1,367.5 1224.5,359.9" fill="none" stroke="#9ccdea" stroke-width="0.9"/>
<polyline points="1154.9776460511425,205.5351848009239 1152.7,200.1 1149.5,195.1 1148.1,189.3 1150.3,183.7 1153.6,178.8 1159.4,177.5 1163.4,173.1" fill="none" stroke="#9ccdea" stroke-width="0.9"/>
<polyline points="930.5117189756808,297.6181146472137 930.1,301.8 926.7,304.3 923.9,307.4 921.4,310.8 920.4,314.9 918.2,318.5 914.2,319.6 910.0,320.2 905.9,319.2" fill="none" stroke="#9ccdea" stroke-width="0.9"/>
<polyline points="392.0784908561278,345.3701602777973 390.8,341.0 387.1,338.3 383.2,335.9 381.3,331.8 379.9,327.5 381.7,323.3 385.5,320.8 389.5,318.7" fill="none" stroke="#9ccdea" stroke-width="0.9"/>
<polyline points="674.7661905254631,346.9488651022029 674.9,353.9 670.8,359.6 670.7,366.6 675.2,372.0 674.6,378.9 679.5,383.8" fill="none" stroke="#9ccdea" stroke-width="0.9"/>
<polyline points="571.6217212233912,9.357877554058879 575.6,10.3 579.7,9.8 583.5,11.2 587.1,13.1 589.3,16.5 588.5,20.5 589.2,24.6" fill="none" stroke="#9ccdea" stroke-width="0.9"/>
<polyline points="767.4060604112714,249.79371690466328 768.2,245.7 770.1,242.0 774.2,241.2 777.4,238.5 781.3,237.1" fill="none" stroke="#9ccdea" stroke-width="0.9"/>
<polyline points="445.5927429268869,369.66201459304216 449.6,372.8 454.4,374.4 459.4,375.5 462.2,379.8 463.4,384.7 462.4,389.7 464.2,394.5 466.8,398.9 465.7,403.9" fill="none" stroke="#9ccdea" stroke-width="0.9"/>
<polyline points="1019.641362827282,27.37016078281782 1013.1,28.2 1009.1,33.4 1008.1,39.9 1011.6,45.4 1013.0,51.8 1011.9,58.3 1008.5,63.9" fill="none" stroke="#9ccdea" stroke-width="0.9"/>
<polyline points="946.999400608356,135.49155098994677 945.2,131.3 946.9,127.0 948.1,122.5 952.1,120.3 956.7,120.8 960.4,118.0 964.5,115.8 966.5,111.6" fill="none" stroke="#9ccdea" stroke-width="0.9"/>
<polyline points="550.6485521686075,389.95552783876064 552.7,397.6 550.1,405.2 549.8,413.1 554.1,419.8 560.5,424.6" fill="none" stroke="#9ccdea" stroke-width="0.9"/>
<polyline points="1220.9952444082414,221.93065465832456 1221.2,226.3 1219.4,230.4 1215.4,232.1 1211.8,234.7 1211.1,239.1 1211.0,243.5 1212.8,247.6" fill="none" stroke="#9ccdea" stroke-width="0.9"/>
<polyline points="1021.9128506108487,171.72870252824205 1025.5,169.5 1028.9,167.0 1031.6,163.8 1035.5,162.4 1039.1,160.2 1041.8,157.0 1044.2,153.5 1048.4,153.1 1051.8,155.5 1056.0,154.8" fill="none" stroke="#9ccdea" stroke-width="0.9"/>
<polyline points="1217.5908896371257,240.09984758599302 1215.0,245.9 1213.7,252.2 1214.5,258.5 1215.6,264.8 1216.5,271.1" fill="none" stroke="#9ccdea" stroke-width="0.9"/>
<polyline points="462.89880261307,13.688164518136524 466.8,15.3 471.0,14.9 475.1,16.0 479.1,17.5 483.1,18.7" fill="none" stroke="#9ccdea" stroke-width="0.9"/>
<rect x="881.2" y="66.5" width="2.3" height="3.2" fill="#b9dcb9" opacity="0.75" rx="1"/>
<rect x="1255.1" y="76.2" width="3.9" height="1.9" fill="#b9dcb9" opacity="0.75" rx="1"/>
<rect x="436.4" y="392.9" width="5.0" height="3.9" fill="#b9dcb9" opacity="0.75" rx="1"/>
<rect x="969.0" y="28.9" width="3.1" height="4.5" fill="#b9dcb9" opacity="0.75" rx="1"/>
<rect x="811.3" y="285.3" width="5.8" height="3.6" fill="#b9dcb9" opacity="0.75" rx="1"/>
<rect x="544.8" y="365.8" width="4.8" height="2.0" fill="#b9dcb9" opacity="0.75" rx="1"/>
<rect x="419.5" y="130.3" width="3.4" height="2.0" fill="#b9dcb9" opacity="0.75" rx="1"/>
<rect x="723.5" y="184.3" width="2.5" height="4.1" fill="#b9dcb9" opacity="0.75" rx="1"/>
<rect x="957.9" y="382.2" width="4.3" height="1.8" fill="#b9dcb9" opacity="0.75" rx="1"/>
<rect x="442.6" y="117.8" width="4.0" height="4.1" fill="#b9dcb9" opacity="0.75" rx="1"/>
<rect x="1115.6" y="369.7" width="4.9" height="2.9" fill="#b9dcb9" opacity="0.75" rx="1"/>
<rect x="704.2" y="62.3" width="1.5" height="3.8" fill="#b9dcb9" opacity="0.75" rx="1"/>
<rect x="932.2" y="107.6" width="2.0" height="1.3" fill="#b9dcb9" opacity="0.75" rx="1"/>
<rect x="794.7" y="98.3" width="5.4" height="1.4" fill="#b9dcb9" opacity="0.75" rx="1"/>
<rect x="819.9" y="186.2" width="4.5" height="1.9" fill="#b9dcb9" opacity="0.75" rx="1"/>
<rect x="911.0" y="99.9" width="3.3" height="1.9" fill="#b9dcb9" opacity="0.75" rx="1"/>
<rect x="1121.4" y="206.9" width="1.6" height="2.8" fill="#b9dcb9" opacity="0.75" rx="1"/>
<rect x="1144.1" y="43.3" width="5.3" height="3.4" fill="#b9dcb9" opacity="0.75" rx="1"/>
<rect x="1053.2" y="296.2" width="1.6" height="2.6" fill="#b9dcb9" opacity="0.75" rx="1"/>
<rect x="1131.5" y="280.8" width="4.9" height="3.2" fill="#b9dcb9" opacity="0.75" rx="1"/>
<rect x="723.8" y="334.7" width="2.1" height="4.0" fill="#b9dcb9" opacity="0.75" rx="1"/>
<rect x="1127.3" y="194.2" width="4.2" height="3.6" fill="#b9dcb9" opacity="0.75" rx="1"/>
<rect x="399.9" y="64.7" width="5.1" height="2.1" fill="#b9dcb9" opacity="0.75" rx="1"/>
<rect x="748.3" y="309.0" width="4.6" height="1.4" fill="#b9dcb9" opacity="0.75" rx="1"/>
<rect x="738.7" y="91.8" width="3.5" height="2.5" fill="#b9dcb9" opacity="0.75" rx="1"/>
<rect x="709.5" y="313.0" width="3.6" height="3.3" fill="#b9dcb9" opacity="0.75" rx="1"/>
<rect x="567.4" y="124.1" width="3.6" height="3.2" fill="#b9dcb9" opacity="0.75" rx="1"/>
<rect x="764.9" y="312.6" width="3.1" height="2.0" fill="#b9dcb9" opacity="0.75" rx="1"/>
<rect x="654.1" y="191.1" width="5.3" height="3.6" fill="#b9dcb9" opacity="0.75" rx="1"/>
<rect x="577.7" y="386.2" width="5.5" height="3.3" fill="#b9dcb9" opacity="0.75" rx="1"/>
<rect x="845.4" y="349.1" width="4.5" height="3.2" fill="#b9dcb9" opacity="0.75" rx="1"/>
<rect x="421.1" y="210.6" width="5.3" height="2.6" fill="#b9dcb9" opacity="0.75" rx="1"/>
<rect x="1227.5" y="150.4" width="3.4" height="3.8" fill="#b9dcb9" opacity="0.75" rx="1"/>
<rect x="772.2" y="79.8" width="4.3" height="1.5" fill="#b9dcb9" opacity="0.75" rx="1"/>
<rect x="478.1" y="249.9" width="3.9" height="1.6" fill="#b9dcb9" opacity="0.75" rx="1"/>
<rect x="752.3" y="7.5" width="5.3" height="4.0" fill="#b9dcb9" opacity="0.75" rx="1"/>
<rect x="455.8" y="143.2" width="2.6" height="3.3" fill="#b9dcb9" opacity="0.75" rx="1"/>
<rect x="842.2" y="224.0" width="5.4" height="3.1" fill="#b9dcb9" opacity="0.75" rx="1"/>
<rect x="895.9" y="292.7" width="2.6" height="3.7" fill="#b9dcb9" opacity="0.75" rx="1"/>
<rect x="1215.8" y="246.9" width="5.6" height="2.2" fill="#b9dcb9" opacity="0.75" rx="1"/>
<rect x="665.9" y="228.5" width="1.8" height="2.9" fill="#b9dcb9" opacity="0.75" rx="1"/>
<rect x="474.4" y="237.5" width="5.8" height="1.3" fill="#b9dcb9" opacity="0.75" rx="1"/>
<rect x="684.8" y="7.8" width="3.0" height="2.3" fill="#b9dcb9" opacity="0.75" rx="1"/>
<rect x="386.6" y="58.7" width="4.3" height="2.8" fill="#b9dcb9" opacity="0.75" rx="1"/>
<rect x="999.1" y="143.7" width="4.7" height="3.3" fill="#b9dcb9" opacity="0.75" rx="1"/>
<rect x="1075.7" y="120.8" width="3.7" height="1.4" fill="#b9dcb9" opacity="0.75" rx="1"/>
<rect x="668.2" y="202.0" width="5.2" height="4.3" fill="#b9dcb9" opacity="0.75" rx="1"/>
<rect x="1044.9" y="113.8" width="3.3" height="3.7" fill="#b9dcb9" opacity="0.75" rx="1"/>
<rect x="1185.3" y="375.0" width="3.2" height="2.3" fill="#b9dcb9" opacity="0.75" rx="1"/>
<rect x="1051.0" y="201.5" width="5.3" height="2.6" fill="#b9dcb9" opacity="0.75" rx="1"/>
<rect x="516.8" y="156.8" width="4.0" height="3.6" fill="#b9dcb9" opacity="0.75" rx="1"/>
<rect x="720.3" y="389.6" width="2.2" height="2.5" fill="#b9dcb9" opacity="0.75" rx="1"/>
<rect x="563.4" y="66.6" width="5.4" height="4.2" fill="#b9dcb9" opacity="0.75" rx="1"/>
<rect x="1238.3" y="224.1" width="1.7" height="1.3" fill="#b9dcb9" opacity="0.75" rx="1"/>
<rect x="597.6" y="382.2" width="3.0" height="4.3" fill="#b9dcb9" opacity="0.75" rx="1"/>
<rect x="723.0" y="17.9" width="5.0" height="3.6" fill="#b9dcb9" opacity="0.75" rx="1"/>
<rect x="905.3" y="221.2" width="4.7" height="1.8" fill="#b9dcb9" opacity="0.75" rx="1"/>
<rect x="690.3" y="158.5" width="2.1" height="3.3" fill="#b9dcb9" opacity="0.75" rx="1"/>
<rect x="877.5" y="62.0" width="5.4" height="1.5" fill="#b9dcb9" opacity="0.75" rx="1"/>
<rect x="720.1" y="80.4" width="4.9" height="1.8" fill="#b9dcb9" opacity="0.75" rx="1"/>
<rect x="441.6" y="327.7" width="3.1" height="3.7" fill="#b9dcb9" opacity="0.75" rx="1"/>
<rect x="1022.9" y="349.0" width="3.1" height="3.8" fill="#b9dcb9" opacity="0.75" rx="1"/>
<rect x="849.5" y="329.5" width="2.7" height="1.6" fill="#b9dcb9" opacity="0.75" rx="1"/>
<rect x="955.4" y="367.7" width="2.9" height="3.0" fill="#b9dcb9" opacity="0.75" rx="1"/>
<rect x="902.5" y="33.6" width="4.3" height="3.8" fill="#b9dcb9" opacity="0.75" rx="1"/>
<rect x="659.1" y="5.6" width="3.0" height="2.6" fill="#b9dcb9" opacity="0.75" rx="1"/>
<rect x="922.7" y="72.3" width="1.7" height="4.1" fill="#b9dcb9" opacity="0.75" rx="1"/>
<rect x="879.1" y="172.7" width="5.0" height="1.5" fill="#b9dcb9" opacity="0.75" rx="1"/>
<rect x="996.2" y="335.7" width="3.3" height="2.5" fill="#b9dcb9" opacity="0.75" rx="1"/>
<rect x="1210.4" y="63.6" width="4.4" height="2.8" fill="#b9dcb9" opacity="0.75" rx="1"/>
<rect x="831.4" y="256.6" width="4.1" height="3.4" fill="#b9dcb9" opacity="0.75" rx="1"/>
<rect x="606.5" y="304.3" width="3.5" height="2.0" fill="#b9dcb9" opacity="0.75" rx="1"/>
<rect x="526.1" y="302.1" width="5.6" height="4.1" fill="#b9dcb9" opacity="0.75" rx="1"/>
<rect x="1090.6" y="386.2" width="5.9" height="3.0" fill="#b9dcb9" opacity="0.75" rx="1"/>
<rect x="1035.2" y="33.5" width="1.6" height="1.6" fill="#b9dcb9" opacity="0.75" rx="1"/>
<rect x="943.6" y="380.7" width="3.6" height="4.2" fill="#b9dcb9" opacity="0.75" rx="1"/>
<rect x="558.4" y="279.3" width="4.4" height="1.6" fill="#b9dcb9" opacity="0.75" rx="1"/>
<rect x="660.1" y="287.8" width="3.9" height="3.5" fill="#b9dcb9" opacity="0.75" rx="1"/>
<rect x="833.7" y="331.5" width="4.2" height="3.1" fill="#b9dcb9" opacity="0.75" rx="1"/>
<rect x="1130.4" y="343.4" width="4.4" height="4.5" fill="#b9dcb9" opacity="0.75" rx="1"/>
<rect x="954.9" y="349.7" width="3.9" height="3.9" fill="#b9dcb9" opacity="0.75" rx="1"/>
<rect x="703.7" y="169.6" width="4.6" height="4.2" fill="#b9dcb9" opacity="0.75" rx="1"/>
<rect x="1146.0" y="351.9" width="4.4" height="4.2" fill="#b9dcb9" opacity="0.75" rx="1"/>
<rect x="1273.1" y="63.3" width="2.8" height="2.3" fill="#b9dcb9" opacity="0.75" rx="1"/>
<rect x="807.4" y="332.2" width="5.5" height="3.3" fill="#b9dcb9" opacity="0.75" rx="1"/>
<rect x="438.7" y="156.8" width="4.6" height="4.1" fill="#b9dcb9" opacity="0.75" rx="1"/>
<rect x="511.8" y="347.5" width="5.1" height="3.8" fill="#b9dcb9" opacity="0.75" rx="1"/>
<rect x="965.5" y="399.0" width="4.8" height="2.6" fill="#b9dcb9" opacity="0.75" rx="1"/>
<rect x="1265.1" y="208.9" width="5.9" height="3.1" fill="#b9dcb9" opacity="0.75" rx="1"/>
<rect x="1078.8" y="281.8" width="1.6" height="1.6" fill="#b9dcb9" opacity="0.75" rx="1"/>
<rect x="1177.9" y="22.1" width="3.5" height="3.0" fill="#b9dcb9" opacity="0.75" rx="1"/>
<rect x="1154.1" y="88.7" width="3.0" height="4.0" fill="#b9dcb9" opacity="0.75" rx="1"/>
<rect x="770.2" y="298.3" width="2.1" height="3.5" fill="#b9dcb9" opacity="0.75" rx="1"/>
<rect x="821.1" y="383.7" width="3.4" height="2.5" fill="#b9dcb9" opacity="0.75" rx="1"/>
<rect x="658.9" y="82.1" width="4.3" height="1.7" fill="#b9dcb9" opacity="0.75" rx="1"/>
<rect x="666.4" y="201.8" width="5.3" height="1.9" fill="#b9dcb9" opacity="0.75" rx="1"/>
<rect x="522.2" y="370.1" width="4.7" height="2.4" fill="#b9dcb9" opacity="0.75" rx="1"/>
<rect x="454.0" y="127.9" width="2.4" height="1.4" fill="#b9dcb9" opacity="0.75" rx="1"/>
<rect x="676.2" y="155.8" width="4.8" height="4.4" fill="#b9dcb9" opacity="0.75" rx="1"/>
<rect x="618.6" y="95.6" width="2.5" height="1.8" fill="#b9dcb9" opacity="0.75" rx="1"/>
<rect x="1027.8" y="226.9" width="2.3" height="2.6" fill="#b9dcb9" opacity="0.75" rx="1"/>
<rect x="733.9" y="195.1" width="4.9" height="4.0" fill="#b9dcb9" opacity="0.75" rx="1"/>
<rect x="1117.5" y="200.8" width="4.9" height="4.5" fill="#b9dcb9" opacity="0.75" rx="1"/>
<rect x="1233.0" y="208.9" width="5.3" height="1.7" fill="#b9dcb9" opacity="0.75" rx="1"/>
<rect x="823.8" y="191.8" width="3.6" height="3.1" fill="#b9dcb9" opacity="0.75" rx="1"/>
<rect x="1222.3" y="135.3" width="3.3" height="3.9" fill="#b9dcb9" opacity="0.75" rx="1"/>
<rect x="845.3" y="219.2" width="5.6" height="1.2" fill="#b9dcb9" opacity="0.75" rx="1"/>
<rect x="778.3" y="321.5" width="3.8" height="2.3" fill="#b9dcb9" opacity="0.75" rx="1"/>
<rect x="476.9" y="273.7" width="4.2" height="1.6" fill="#b9dcb9" opacity="0.75" rx="1"/>
<rect x="382.9" y="211.6" width="4.0" height="3.7" fill="#b9dcb9" opacity="0.75" rx="1"/>
<rect x="921.9" y="14.2" width="4.7" height="2.3" fill="#b9dcb9" opacity="0.75" rx="1"/>
<rect x="1017.3" y="266.2" width="5.1" height="2.1" fill="#b9dcb9" opacity="0.75" rx="1"/>
<rect x="773.4" y="169.3" width="3.6" height="2.3" fill="#b9dcb9" opacity="0.75" rx="1"/>
<rect x="441.7" y="86.3" width="3.4" height="2.0" fill="#b9dcb9" opacity="0.75" rx="1"/>
<rect x="891.1" y="142.1" width="4.4" height="1.9" fill="#b9dcb9" opacity="0.75" rx="1"/>
<rect x="900.3" y="232.4" width="5.7" height="3.7" fill="#b9dcb9" opacity="0.75" rx="1"/>
<rect x="1170.4" y="212.4" width="4.0" height="1.3" fill="#b9dcb9" opacity="0.75" rx="1"/>
<rect x="827.0" y="180.0" width="1.8" height="2.6" fill="#b9dcb9" opacity="0.75" rx="1"/>
<rect x="819.3" y="191.1" width="6.0" height="1.5" fill="#b9dcb9" opacity="0.75" rx="1"/>
<rect x="858.1" y="125.4" width="3.0" height="2.6" fill="#b9dcb9" opacity="0.75" rx="1"/>
<rect x="1189.5" y="349.9" width="2.3" height="2.2" fill="#b9dcb9" opacity="0.75" rx="1"/>
<rect x="921.7" y="277.8" width="4.2" height="2.1" fill="#b9dcb9" opacity="0.75" rx="1"/>
<rect x="991.4" y="193.0" width="3.6" height="4.2" fill="#b9dcb9" opacity="0.75" rx="1"/>
<rect x="624.6" y="342.8" width="4.6" height="3.5" fill="#b9dcb9" opacity="0.75" rx="1"/>
<rect x="698.0" y="125.4" width="4.6" height="3.1" fill="#b9dcb9" opacity="0.75" rx="1"/>
<rect x="445.8" y="55.3" width="4.6" height="1.3" fill="#b9dcb9" opacity="0.75" rx="1"/>
<rect x="818.8" y="45.4" width="4.6" height="2.2" fill="#b9dcb9" opacity="0.75" rx="1"/>
<rect x="938.7" y="146.4" width="5.2" height="1.3" fill="#b9dcb9" opacity="0.75" rx="1"/>
<rect x="1257.0" y="283.0" width="1.5" height="1.5" fill="#b9dcb9" opacity="0.75" rx="1"/>
<rect x="811.3" y="358.8" width="3.1" height="1.2" fill="#b9dcb9" opacity="0.75" rx="1"/>
<rect x="1101.8" y="66.3" width="2.6" height="3.7" fill="#b9dcb9" opacity="0.75" rx="1"/>
<rect x="909.4" y="352.2" width="5.2" height="1.3" fill="#b9dcb9" opacity="0.75" rx="1"/>
<rect x="944.9" y="314.6" width="4.1" height="3.8" fill="#b9dcb9" opacity="0.75" rx="1"/>
<rect x="1010.0" y="211.6" width="5.4" height="3.5" fill="#b9dcb9" opacity="0.75" rx="1"/>
<rect x="609.3" y="228.6" width="5.5" height="3.3" fill="#b9dcb9" opacity="0.75" rx="1"/>
<rect x="1174.5" y="39.4" width="2.5" height="2.4" fill="#b9dcb9" opacity="0.75" rx="1"/>
<rect x="916.5" y="82.4" width="1.9" height="3.6" fill="#b9dcb9" opacity="0.75" rx="1"/>
<rect x="802.3" y="75.7" width="5.9" height="1.3" fill="#b9dcb9" opacity="0.75" rx="1"/>
<rect x="998.2" y="361.4" width="4.8" height="2.7" fill="#b9dcb9" opacity="0.75" rx="1"/>
<rect x="597.1" y="263.2" width="2.2" height="4.3" fill="#b9dcb9" opacity="0.75" rx="1"/>
<rect x="861.7" y="157.0" width="3.6" height="4.4" fill="#b9dcb9" opacity="0.75" rx="1"/>
<rect x="483.5" y="290.0" width="2.1" height="2.1" fill="#b9dcb9" opacity="0.75" rx="1"/>
<rect x="603.4" y="270.3" width="4.3" height="2.1" fill="#b9dcb9" opacity="0.75" rx="1"/>
<rect x="851.5" y="328.2" width="1.7" height="2.6" fill="#b9dcb9" opacity="0.75" rx="1"/>
<rect x="700.4" y="306.7" width="5.4" height="3.9" fill="#b9dcb9" opacity="0.75" rx="1"/>
<rect x="730.4" y="358.2" width="4.9" height="3.0" fill="#b9dcb9" opacity="0.75" rx="1"/>
<rect x="1198.0" y="30.0" width="3.0" height="3.7" fill="#b9dcb9" opacity="0.75" rx="1"/>
<rect x="975.3" y="383.6" width="5.4" height="3.3" fill="#b9dcb9" opacity="0.75" rx="1"/>
<rect x="766.5" y="170.1" width="5.7" height="2.1" fill="#b9dcb9" opacity="0.75" rx="1"/>
<rect x="607.1" y="6.6" width="1.9" height="4.0" fill="#b9dcb9" opacity="0.75" rx="1"/>
<rect x="660.0" y="150.6" width="5.8" height="2.0" fill="#b9dcb9" opacity="0.75" rx="1"/>
<rect x="1171.5" y="140.7" width="5.3" height="4.3" fill="#b9dcb9" opacity="0.75" rx="1"/>
<rect x="859.7" y="360.6" width="2.9" height="2.1" fill="#b9dcb9" opacity="0.75" rx="1"/>
<rect x="1070.4" y="297.7" width="5.7" height="2.7" fill="#b9dcb9" opacity="0.75" rx="1"/>
<rect x="1205.5" y="20.0" width="5.8" height="1.9" fill="#b9dcb9" opacity="0.75" rx="1"/>
<rect x="995.8" y="370.2" width="5.4" height="3.1" fill="#b9dcb9" opacity="0.75" rx="1"/>
<rect x="1067.1" y="172.9" width="4.4" height="1.8" fill="#b9dcb9" opacity="0.75" rx="1"/>
<rect x="510.0" y="319.0" width="3.9" height="3.9" fill="#b9dcb9" opacity="0.75" rx="1"/>
<rect x="442.3" y="69.8" width="4.8" height="2.9" fill="#b9dcb9" opacity="0.75" rx="1"/>
<rect x="509.7" y="281.2" width="4.0" height="2.0" fill="#b9dcb9" opacity="0.75" rx="1"/>
<rect x="605.4" y="254.5" width="6.0" height="2.4" fill="#b9dcb9" opacity="0.75" rx="1"/>
<rect x="582.1" y="258.9" width="4.6" height="3.4" fill="#b9dcb9" opacity="0.75" rx="1"/>
<rect x="762.8" y="327.5" width="2.8" height="4.0" fill="#b9dcb9" opacity="0.75" rx="1"/>
<rect x="1208.8" y="387.4" width="3.9" height="1.9" fill="#b9dcb9" opacity="0.75" rx="1"/>
<rect x="985.6" y="13.8" width="4.9" height="2.2" fill="#b9dcb9" opacity="0.75" rx="1"/>
<rect x="1168.0" y="17.3" width="5.7" height="2.6" fill="#b9dcb9" opacity="0.75" rx="1"/>
<rect x="665.1" y="234.5" width="6.0" height="4.0" fill="#b9dcb9" opacity="0.75" rx="1"/>
<rect x="774.4" y="200.4" width="2.0" height="3.1" fill="#b9dcb9" opacity="0.75" rx="1"/>
<rect x="554.3" y="34.8" width="3.6" height="1.4" fill="#b9dcb9" opacity="0.75" rx="1"/>
<rect x="706.5" y="216.5" width="5.2" height="2.2" fill="#b9dcb9" opacity="0.75" rx="1"/>
<rect x="990.0" y="121.8" width="3.0" height="2.2" fill="#b9dcb9" opacity="0.75" rx="1"/>
<rect x="767.3" y="31.7" width="3.9" height="4.1" fill="#b9dcb9" opacity="0.75" rx="1"/>
<rect x="755.8" y="243.8" width="4.0" height="3.0" fill="#b9dcb9" opacity="0.75" rx="1"/>
<rect x="427.5" y="9.4" width="2.8" height="4.1" fill="#b9dcb9" opacity="0.75" rx="1"/>
<rect x="410.9" y="233.1" width="2.1" height="1.2" fill="#b9dcb9" opacity="0.75" rx="1"/>
<rect x="514.6" y="273.2" width="1.6" height="2.7" fill="#b9dcb9" opacity="0.75" rx="1"/>
<rect x="1050.1" y="261.5" width="3.3" height="4.2" fill="#b9dcb9" opacity="0.75" rx="1"/>
<rect x="876.4" y="88.3" width="2.4" height="4.0" fill="#b9dcb9" opacity="0.75" rx="1"/>
<rect x="582.9" y="139.6" width="4.9" height="3.1" fill="#b9dcb9" opacity="0.75" rx="1"/>
<rect x="729.1" y="78.6" width="1.7" height="2.6" fill="#b9dcb9" opacity="0.75" rx="1"/>
<rect x="950.6" y="311.4" width="1.9" height="2.5" fill="#b9dcb9" opacity="0.75" rx="1"/>
<rect x="516.3" y="348.5" width="3.3" height="2.9" fill="#b9dcb9" opacity="0.75" rx="1"/>
<rect x="1053.3" y="244.4" width="1.5" height="3.8" fill="#b9dcb9" opacity="0.75" rx="1"/>
<rect x="428.5" y="234.3" width="3.9" height="4.0" fill="#b9dcb9" opacity="0.75" rx="1"/>
<rect x="1148.9" y="261.9" width="3.5" height="1.6" fill="#b9dcb9" opacity="0.75" rx="1"/>
<rect x="643.2" y="336.5" width="3.2" height="3.8" fill="#b9dcb9" opacity="0.75" rx="1"/>
<rect x="743.8" y="80.3" width="3.7" height="4.2" fill="#b9dcb9" opacity="0.75" rx="1"/>
<rect x="1182.4" y="233.0" width="2.4" height="4.5" fill="#b9dcb9" opacity="0.75" rx="1"/>
<rect x="735.2" y="138.8" width="2.7" height="2.0" fill="#b9dcb9" opacity="0.75" rx="1"/>
<rect x="414.6" y="156.4" width="3.3" height="4.1" fill="#b9dcb9" opacity="0.75" rx="1"/>
<rect x="1023.5" y="216.9" width="5.8" height="1.9" fill="#b9dcb9" opacity="0.75" rx="1"/>
<rect x="851.7" y="389.9" width="1.6" height="1.8" fill="#b9dcb9" opacity="0.75" rx="1"/>
<rect x="515.8" y="69.5" width="3.7" height="3.2" fill="#b9dcb9" opacity="0.75" rx="1"/>
<rect x="1266.9" y="147.8" width="5.8" height="1.8" fill="#b9dcb9" opacity="0.75" rx="1"/>
<rect x="461.6" y="261.3" width="5.3" height="3.3" fill="#b9dcb9" opacity="0.75" rx="1"/>
<rect x="676.7" y="206.5" width="5.6" height="2.3" fill="#b9dcb9" opacity="0.75" rx="1"/>
<rect x="1205.1" y="248.1" width="2.6" height="1.8" fill="#b9dcb9" opacity="0.75" rx="1"/>
<rect x="923.6" y="254.9" width="4.1" height="2.0" fill="#b9dcb9" opacity="0.75" rx="1"/>
<rect x="757.6" y="280.7" width="3.5" height="1.4" fill="#b9dcb9" opacity="0.75" rx="1"/>
<rect x="975.5" y="78.3" width="5.5" height="2.4" fill="#b9dcb9" opacity="0.75" rx="1"/>
<rect x="856.6" y="303.9" width="4.1" height="1.7" fill="#b9dcb9" opacity="0.75" rx="1"/>
<rect x="847.4" y="391.2" width="3.6" height="1.5" fill="#b9dcb9" opacity="0.75" rx="1"/>
<rect x="1183.0" y="257.6" width="3.0" height="4.3" fill="#b9dcb9" opacity="0.75" rx="1"/>
<rect x="573.5" y="282.3" width="2.9" height="1.9" fill="#b9dcb9" opacity="0.75" rx="1"/>
<rect x="575.1" y="231.9" width="4.9" height="2.3" fill="#b9dcb9" opacity="0.75" rx="1"/>
<rect x="1211.4" y="220.8" width="3.7" height="3.3" fill="#b9dcb9" opacity="0.75" rx="1"/>
<rect x="871.1" y="304.3" width="5.6" height="4.0" fill="#b9dcb9" opacity="0.75" rx="1"/>
<rect x="412.1" y="318.1" width="2.3" height="3.6" fill="#b9dcb9" opacity="0.75" rx="1"/>
<rect x="426.5" y="74.9" width="3.1" height="1.8" fill="#b9dcb9" opacity="0.75" rx="1"/>
<rect x="967.5" y="241.1" width="4.3" height="4.3" fill="#b9dcb9" opacity="0.75" rx="1"/>
<rect x="439.2" y="219.4" width="2.1" height="2.2" fill="#b9dcb9" opacity="0.75" rx="1"/>
<rect x="748.7" y="306.3" width="4.8" height="2.9" fill="#b9dcb9" opacity="0.75" rx="1"/>
<rect x="1077.5" y="161.6" width="3.0" height="2.7" fill="#b9dcb9" opacity="0.75" rx="1"/>
<rect x="1177.0" y="302.2" width="3.7" height="2.5" fill="#b9dcb9" opacity="0.75" rx="1"/>
<rect x="762.1" y="120.5" width="3.8" height="1.2" fill="#b9dcb9" opacity="0.75" rx="1"/>
<rect x="1224.4" y="89.9" width="2.6" height="4.1" fill="#b9dcb9" opacity="0.75" rx="1"/>
<rect x="457.0" y="195.9" width="2.5" height="1.8" fill="#b9dcb9" opacity="0.75" rx="1"/>
<rect x="559.7" y="76.6" width="3.2" height="4.0" fill="#b9dcb9" opacity="0.75" rx="1"/>
<rect x="1225.5" y="263.9" width="2.9" height="2.3" fill="#b9dcb9" opacity="0.75" rx="1"/>
<rect x="610.0" y="141.1" width="5.1" height="2.3" fill="#b9dcb9" opacity="0.75" rx="1"/>
<rect x="1074.9" y="199.7" width="1.6" height="2.6" fill="#b9dcb9" opacity="0.75" rx="1"/>
<rect x="781.8" y="277.4" width="2.6" height="2.2" fill="#b9dcb9" opacity="0.75" rx="1"/>
<rect x="552.5" y="310.9" width="1.7" height="3.9" fill="#b9dcb9" opacity="0.75" rx="1"/>
<rect x="875.4" y="269.8" width="3.3" height="3.5" fill="#b9dcb9" opacity="0.75" rx="1"/>
<rect x="990.0" y="267.5" width="5.1" height="4.4" fill="#b9dcb9" opacity="0.75" rx="1"/>
<rect x="856.6" y="6.5" width="2.5" height="1.7" fill="#b9dcb9" opacity="0.75" rx="1"/>
<rect x="838.0" y="80.1" width="4.4" height="3.8" fill="#b9dcb9" opacity="0.75" rx="1"/>
<rect x="1004.9" y="99.3" width="3.9" height="4.4" fill="#b9dcb9" opacity="0.75" rx="1"/>
<rect x="974.7" y="166.0" width="1.6" height="3.9" fill="#b9dcb9" opacity="0.75" rx="1"/>
<rect x="962.3" y="191.2" width="5.2" height="4.3" fill="#b9dcb9" opacity="0.75" rx="1"/>
<rect x="540.5" y="170.5" width="4.3" height="1.3" fill="#b9dcb9" opacity="0.75" rx="1"/>
<rect x="816.2" y="344.6" width="2.7" height="3.1" fill="#b9dcb9" opacity="0.75" rx="1"/>
<rect x="995.4" y="318.9" width="5.2" height="3.4" fill="#b9dcb9" opacity="0.75" rx="1"/>
<rect x="1054.2" y="37.0" width="2.6" height="4.1" fill="#b9dcb9" opacity="0.75" rx="1"/>
<rect x="908.9" y="103.2" width="3.2" height="2.7" fill="#b9dcb9" opacity="0.75" rx="1"/>
<rect x="718.7" y="31.9" width="3.8" height="2.5" fill="#b9dcb9" opacity="0.75" rx="1"/>
<rect x="433.5" y="332.6" width="2.3" height="1.4" fill="#b9dcb9" opacity="0.75" rx="1"/>
<rect x="1261.8" y="332.3" width="2.5" height="4.1" fill="#b9dcb9" opacity="0.75" rx="1"/>
<rect x="1158.4" y="79.8" width="5.0" height="1.5" fill="#b9dcb9" opacity="0.75" rx="1"/>
<rect x="1110.6" y="149.5" width="2.6" height="4.3" fill="#b9dcb9" opacity="0.75" rx="1"/>
<rect x="752.8" y="248.7" width="3.3" height="4.1" fill="#b9dcb9" opacity="0.75" rx="1"/>
<rect x="1125.7" y="362.6" width="4.0" height="4.0" fill="#b9dcb9" opacity="0.75" rx="1"/>
<rect x="796.3" y="400.4" width="4.2" height="1.7" fill="#b9dcb9" opacity="0.75" rx="1"/>
<rect x="870.1" y="290.7" width="2.7" height="3.8" fill="#b9dcb9" opacity="0.75" rx="1"/>
<rect x="1003.6" y="295.6" width="4.1" height="2.8" fill="#b9dcb9" opacity="0.75" rx="1"/>
<rect x="903.1" y="186.8" width="4.0" height="2.7" fill="#b9dcb9" opacity="0.75" rx="1"/>
<rect x="596.6" y="138.1" width="3.9" height="1.9" fill="#b9dcb9" opacity="0.75" rx="1"/>
<rect x="895.1" y="17.3" width="2.4" height="2.0" fill="#b9dcb9" opacity="0.75" rx="1"/>
<rect x="418.8" y="12.5" width="3.7" height="3.2" fill="#b9dcb9" opacity="0.75" rx="1"/>
<rect x="962.3" y="368.7" width="3.3" height="3.1" fill="#b9dcb9" opacity="0.75" rx="1"/>
<rect x="495.0" y="106.0" width="1.8" height="4.1" fill="#b9dcb9" opacity="0.75" rx="1"/>
<rect x="1065.0" y="284.8" width="5.6" height="3.7" fill="#b9dcb9" opacity="0.75" rx="1"/>
<rect x="1242.3" y="322.3" width="2.2" height="2.4" fill="#b9dcb9" opacity="0.75" rx="1"/>
<rect x="736.2" y="217.5" width="5.0" height="3.4" fill="#b9dcb9" opacity="0.75" rx="1"/>
<rect x="765.1" y="275.2" width="5.8" height="1.5" fill="#b9dcb9" opacity="0.75" rx="1"/>
<rect x="500.1" y="126.3" width="2.3" height="3.9" fill="#b9dcb9" opacity="0.75" rx="1"/>
<rect x="1129.0" y="81.9" width="1.8" height="2.7" fill="#b9dcb9" opacity="0.75" rx="1"/>
<rect x="552.2" y="243.5" width="5.8" height="2.7" fill="#b9dcb9" opacity="0.75" rx="1"/>
<rect x="893.9" y="254.6" width="2.0" height="4.4" fill="#b9dcb9" opacity="0.75" rx="1"/>
<rect x="502.0" y="131.2" width="4.2" height="2.9" fill="#b9dcb9" opacity="0.75" rx="1"/>
<rect x="396.8" y="118.7" width="4.5" height="2.3" fill="#b9dcb9" opacity="0.75" rx="1"/>
<rect x="429.6" y="295.4" width="1.9" height="1.9" fill="#b9dcb9" opacity="0.75" rx="1"/>
<rect x="537.3" y="399.4" width="4.1" height="2.7" fill="#b9dcb9" opacity="0.75" rx="1"/>
<rect x="1036.5" y="239.6" width="5.7" height="1.9" fill="#b9dcb9" opacity="0.75" rx="1"/>
<rect x="637.7" y="207.8" width="2.7" height="3.4" fill="#b9dcb9" opacity="0.75" rx="1"/>
<rect x="713.4" y="18.2" width="3.7" height="1.6" fill="#b9dcb9" opacity="0.75" rx="1"/>
<rect x="1049.1" y="289.6" width="4.8" height="1.8" fill="#b9dcb9" opacity="0.75" rx="1"/>
<rect x="804.6" y="74.1" width="4.7" height="1.2" fill="#b9dcb9" opacity="0.75" rx="1"/>
<rect x="1107.1" y="392.6" width="5.2" height="3.5" fill="#b9dcb9" opacity="0.75" rx="1"/>
<rect x="928.5" y="182.8" width="4.0" height="2.9" fill="#b9dcb9" opacity="0.75" rx="1"/>
<rect x="710.2" y="218.3" width="2.1" height="1.4" fill="#b9dcb9" opacity="0.75" rx="1"/>
<rect x="648.8" y="386.0" width="4.3" height="4.2" fill="#b9dcb9" opacity="0.75" rx="1"/>
<rect x="1026.9" y="309.3" width="3.8" height="3.2" fill="#b9dcb9" opacity="0.75" rx="1"/>
<rect x="409.0" y="39.9" width="1.6" height="2.6" fill="#b9dcb9" opacity="0.75" rx="1"/>
<rect x="416.5" y="66.4" width="2.0" height="4.3" fill="#b9dcb9" opacity="0.75" rx="1"/>
<rect x="649.6" y="93.1" width="5.2" height="3.2" fill="#b9dcb9" opacity="0.75" rx="1"/>
<rect x="673.5" y="106.2" width="5.5" height="1.8" fill="#b9dcb9" opacity="0.75" rx="1"/>
<rect x="421.3" y="166.2" width="4.6" height="3.5" fill="#b9dcb9" opacity="0.75" rx="1"/>
<rect x="464.7" y="174.5" width="4.0" height="3.6" fill="#b9dcb9" opacity="0.75" rx="1"/>
<rect x="1009.0" y="178.4" width="4.9" height="2.8" fill="#b9dcb9" opacity="0.75" rx="1"/>
<rect x="487.3" y="58.6" width="2.1" height="3.5" fill="#b9dcb9" opacity="0.75" rx="1"/>
<rect x="396.5" y="90.9" width="6.0" height="4.0" fill="#b9dcb9" opacity="0.75" rx="1"/>
<rect x="833.7" y="36.1" width="3.2" height="1.9" fill="#b9dcb9" opacity="0.75" rx="1"/>
<rect x="611.8" y="204.6" width="5.5" height="1.6" fill="#b9dcb9" opacity="0.75" rx="1"/>
<rect x="952.5" y="54.3" width="2.2" height="2.9" fill="#b9dcb9" opacity="0.75" rx="1"/>
<rect x="1104.8" y="111.1" width="4.3" height="4.2" fill="#b9dcb9" opacity="0.75" rx="1"/>
<rect x="901.2" y="148.4" width="2.9" height="3.7" fill="#b9dcb9" opacity="0.75" rx="1"/>
<rect x="986.7" y="264.5" width="4.5" height="3.3" fill="#b9dcb9" opacity="0.75" rx="1"/>
<rect x="824.6" y="388.9" width="2.0" height="1.4" fill="#b9dcb9" opacity="0.75" rx="1"/>
<rect x="825.1" y="367.6" width="3.5" height="4.2" fill="#b9dcb9" opacity="0.75" rx="1"/>
<rect x="763.3" y="209.9" width="4.8" height="4.3" fill="#b9dcb9" opacity="0.75" rx="1"/>
<rect x="832.8" y="171.3" width="5.8" height="2.5" fill="#b9dcb9" opacity="0.75" rx="1"/>
<rect x="936.5" y="223.2" width="4.2" height="1.4" fill="#b9dcb9" opacity="0.75" rx="1"/>
<rect x="963.6" y="250.5" width="5.5" height="4.0" fill="#b9dcb9" opacity="0.75" rx="1"/>
<rect x="971.4" y="229.0" width="4.8" height="1.9" fill="#b9dcb9" opacity="0.75" rx="1"/>
<rect x="398.6" y="275.4" width="3.3" height="2.5" fill="#b9dcb9" opacity="0.75" rx="1"/>
<rect x="519.7" y="79.4" width="4.0" height="2.6" fill="#b9dcb9" opacity="0.75" rx="1"/>
<rect x="1238.9" y="223.0" width="2.9" height="2.3" fill="#b9dcb9" opacity="0.75" rx="1"/>
<rect x="400.0" y="320.8" width="1.5" height="3.7" fill="#b9dcb9" opacity="0.75" rx="1"/>
<rect x="440.4" y="57.4" width="2.6" height="2.1" fill="#b9dcb9" opacity="0.75" rx="1"/>
<rect x="494.7" y="163.0" width="1.8" height="1.4" fill="#b9dcb9" opacity="0.75" rx="1"/>
<rect x="463.9" y="119.9" width="1.8" height="3.3" fill="#b9dcb9" opacity="0.75" rx="1"/>
<rect x="870.8" y="337.8" width="1.7" height="3.3" fill="#b9dcb9" opacity="0.75" rx="1"/>
<rect x="502.7" y="392.0" width="2.2" height="2.0" fill="#b9dcb9" opacity="0.75" rx="1"/>
<rect x="1228.7" y="354.8" width="5.2" height="1.2" fill="#b9dcb9" opacity="0.75" rx="1"/>
<rect x="417.6" y="9.6" width="3.9" height="4.3" fill="#b9dcb9" opacity="0.75" rx="1"/>
<rect x="514.5" y="128.0" width="3.7" height="3.0" fill="#b9dcb9" opacity="0.75" rx="1"/>
<rect x="1224.1" y="114.7" width="3.1" height="3.5" fill="#b9dcb9" opacity="0.75" rx="1"/>
<rect x="719.1" y="127.9" width="4.0" height="1.9" fill="#b9dcb9" opacity="0.75" rx="1"/>
<rect x="692.3" y="394.2" width="1.9" height="1.9" fill="#b9dcb9" opacity="0.75" rx="1"/>
<rect x="943.5" y="116.1" width="3.8" height="3.5" fill="#b9dcb9" opacity="0.75" rx="1"/>
<rect x="521.0" y="68.9" width="2.5" height="3.6" fill="#b9dcb9" opacity="0.75" rx="1"/>
<rect x="931.2" y="398.6" width="3.0" height="2.8" fill="#b9dcb9" opacity="0.75" rx="1"/>
<rect x="544.9" y="387.7" width="4.6" height="3.3" fill="#b9dcb9" opacity="0.75" rx="1"/>
<rect x="550.6" y="324.8" width="5.3" height="1.6" fill="#b9dcb9" opacity="0.75" rx="1"/>
<rect x="502.4" y="348.0" width="3.9" height="3.7" fill="#b9dcb9" opacity="0.75" rx="1"/>
<rect x="1223.3" y="311.5" width="2.2" height="1.8" fill="#b9dcb9" opacity="0.75" rx="1"/>
<rect x="1017.6" y="253.0" width="5.4" height="3.6" fill="#b9dcb9" opacity="0.75" rx="1"/>
<rect x="662.0" y="245.6" width="4.3" height="4.4" fill="#b9dcb9" opacity="0.75" rx="1"/>
<rect x="1261.3" y="206.4" width="3.5" height="3.4" fill="#b9dcb9" opacity="0.75" rx="1"/>
<rect x="840.3" y="179.1" width="2.3" height="1.8" fill="#b9dcb9" opacity="0.75" rx="1"/>
<rect x="867.9" y="165.4" width="3.8" height="3.6" fill="#b9dcb9" opacity="0.75" rx="1"/>
<rect x="531.4" y="107.4" width="5.0" height="2.2" fill="#b9dcb9" opacity="0.75" rx="1"/>
<rect x="699.6" y="361.8" width="1.6" height="2.4" fill="#b9dcb9" opacity="0.75" rx="1"/>
<rect x="539.5" y="393.5" width="5.7" height="4.2" fill="#b9dcb9" opacity="0.75" rx="1"/>
<rect x="839.3" y="229.0" width="4.2" height="3.6" fill="#b9dcb9" opacity="0.75" rx="1"/>
<rect x="1091.2" y="347.5" width="4.2" height="1.4" fill="#b9dcb9" opacity="0.75" rx="1"/>
<rect x="1023.3" y="168.2" width="3.8" height="3.7" fill="#b9dcb9" opacity="0.75" rx="1"/>
<rect x="1205.3" y="268.5" width="4.3" height="4.5" fill="#b9dcb9" opacity="0.75" rx="1"/>
<rect x="396.7" y="288.0" width="1.9" height="3.0" fill="#b9dcb9" opacity="0.75" rx="1"/>
<rect x="612.1" y="146.7" width="5.3" height="2.3" fill="#b9dcb9" opacity="0.75" rx="1"/>
<rect x="1191.7" y="252.3" width="5.6" height="3.3" fill="#b9dcb9" opacity="0.75" rx="1"/>
<rect x="929.6" y="222.1" width="5.6" height="1.2" fill="#b9dcb9" opacity="0.75" rx="1"/>
<rect x="481.4" y="88.2" width="5.5" height="4.4" fill="#b9dcb9" opacity="0.75" rx="1"/>
<rect x="537.0" y="115.5" width="3.6" height="2.0" fill="#b9dcb9" opacity="0.75" rx="1"/>
<rect x="572.4" y="74.4" width="5.1" height="1.7" fill="#b9dcb9" opacity="0.75" rx="1"/>
<rect x="920.4" y="344.1" width="2.5" height="2.6" fill="#b9dcb9" opacity="0.75" rx="1"/>
<rect x="396.9" y="47.8" width="3.4" height="3.2" fill="#b9dcb9" opacity="0.75" rx="1"/>
<rect x="565.6" y="368.5" width="4.1" height="4.5" fill="#b9dcb9" opacity="0.75" rx="1"/>
<rect x="823.2" y="236.5" width="4.5" height="3.3" fill="#b9dcb9" opacity="0.75" rx="1"/>
<rect x="902.7" y="247.0" width="2.7" height="3.6" fill="#b9dcb9" opacity="0.75" rx="1"/>
<rect x="1054.7" y="242.9" width="3.1" height="2.4" fill="#b9dcb9" opacity="0.75" rx="1"/>
<rect x="629.9" y="17.4" width="4.0" height="4.1" fill="#b9dcb9" opacity="0.75" rx="1"/>
<rect x="872.0" y="393.2" width="4.1" height="1.3" fill="#b9dcb9" opacity="0.75" rx="1"/>
<rect x="926.6" y="10.9" width="3.1" height="4.5" fill="#b9dcb9" opacity="0.75" rx="1"/>
<rect x="1152.9" y="156.9" width="2.4" height="1.4" fill="#b9dcb9" opacity="0.75" rx="1"/>
<rect x="506.4" y="90.0" width="5.3" height="2.3" fill="#b9dcb9" opacity="0.75" rx="1"/>
<rect x="1161.0" y="374.1" width="6.0" height="2.2" fill="#b9dcb9" opacity="0.75" rx="1"/>
<rect x="1067.8" y="271.7" width="2.2" height="3.8" fill="#b9dcb9" opacity="0.75" rx="1"/>
<rect x="942.3" y="43.7" width="3.4" height="2.2" fill="#b9dcb9" opacity="0.75" rx="1"/>
<rect x="814.9" y="92.7" width="2.3" height="1.2" fill="#b9dcb9" opacity="0.75" rx="1"/>
<rect x="970.6" y="119.2" width="2.9" height="3.3" fill="#b9dcb9" opacity="0.75" rx="1"/>
<rect x="1030.5" y="166.1" width="5.9" height="1.7" fill="#b9dcb9" opacity="0.75" rx="1"/>
<rect x="591.5" y="316.2" width="3.4" height="1.7" fill="#b9dcb9" opacity="0.75" rx="1"/>
<rect x="1090.3" y="32.4" width="5.4" height="2.3" fill="#b9dcb9" opacity="0.75" rx="1"/>
<rect x="1064.0" y="155.2" width="3.9" height="2.2" fill="#b9dcb9" opacity="0.75" rx="1"/>
<rect x="1140.3" y="147.0" width="2.0" height="4.3" fill="#b9dcb9" opacity="0.75" rx="1"/>
<rect x="1091.3" y="127.9" width="3.4" height="2.6" fill="#b9dcb9" opacity="0.75" rx="1"/>
<rect x="541.7" y="318.2" width="4.9" height="3.8" fill="#b9dcb9" opacity="0.75" rx="1"/>
<rect x="542.2" y="147.9" width="4.6" height="1.5" fill="#b9dcb9" opacity="0.75" rx="1"/>
<rect x="1063.0" y="136.9" width="1.5" height="2.3" fill="#b9dcb9" opacity="0.75" rx="1"/>
<rect x="1200.9" y="146.1" width="2.9" height="1.6" fill="#b9dcb9" opacity="0.75" rx="1"/>
<rect x="725.1" y="39.4" width="1.6" height="3.3" fill="#b9dcb9" opacity="0.75" rx="1"/>
<rect x="1097.0" y="159.9" width="5.7" height="2.9" fill="#b9dcb9" opacity="0.75" rx="1"/>
<rect x="813.9" y="194.2" width="5.5" height="2.9" fill="#b9dcb9" opacity="0.75" rx="1"/>
<rect x="747.3" y="119.0" width="3.8" height="3.2" fill="#b9dcb9" opacity="0.75" rx="1"/>
<rect x="778.1" y="361.3" width="1.6" height="2.7" fill="#b9dcb9" opacity="0.75" rx="1"/>
<rect x="462.2" y="147.5" width="5.3" height="4.4" fill="#b9dcb9" opacity="0.75" rx="1"/>
<rect x="682.9" y="253.1" width="2.5" height="1.3" fill="#b9dcb9" opacity="0.75" rx="1"/>
<rect x="404.8" y="243.6" width="4.1" height="3.9" fill="#b9dcb9" opacity="0.75" rx="1"/>
<rect x="1054.8" y="79.5" width="1.8" height="3.7" fill="#b9dcb9" opacity="0.75" rx="1"/>
<rect x="596.5" y="321.6" width="4.0" height="3.9" fill="#b9dcb9" opacity="0.75" rx="1"/>
<rect x="539.1" y="143.9" width="5.5" height="1.6" fill="#b9dcb9" opacity="0.75" rx="1"/>
<rect x="836.0" y="170.8" width="5.7" height="1.8" fill="#b9dcb9" opacity="0.75" rx="1"/>
<rect x="966.9" y="66.0" width="3.5" height="2.4" fill="#b9dcb9" opacity="0.75" rx="1"/>
<rect x="545.8" y="297.6" width="3.5" height="3.6" fill="#b9dcb9" opacity="0.75" rx="1"/>
<rect x="1169.3" y="48.4" width="5.7" height="4.4" fill="#b9dcb9" opacity="0.75" rx="1"/>
<rect x="789.2" y="14.5" width="2.7" height="1.5" fill="#b9dcb9" opacity="0.75" rx="1"/>
<rect x="535.4" y="111.3" width="4.0" height="1.5" fill="#b9dcb9" opacity="0.75" rx="1"/>
<rect x="1227.8" y="187.9" width="2.6" height="1.3" fill="#b9dcb9" opacity="0.75" rx="1"/>
<rect x="909.0" y="323.1" width="5.4" height="3.2" fill="#b9dcb9" opacity="0.75" rx="1"/>
<rect x="871.5" y="9.0" width="3.3" height="4.5" fill="#b9dcb9" opacity="0.75" rx="1"/>
<rect x="540.8" y="332.0" width="4.4" height="3.4" fill="#b9dcb9" opacity="0.75" rx="1"/>
<rect x="810.5" y="161.4" width="5.0" height="3.6" fill="#b9dcb9" opacity="0.75" rx="1"/>
<rect x="846.2" y="1.5" width="3.5" height="2.0" fill="#b9dcb9" opacity="0.75" rx="1"/>
<rect x="454.7" y="207.8" width="3.3" height="4.5" fill="#b9dcb9" opacity="0.75" rx="1"/>
<rect x="646.1" y="347.0" width="2.2" height="3.0" fill="#b9dcb9" opacity="0.75" rx="1"/>
<rect x="701.6" y="12.5" width="1.9" height="3.1" fill="#b9dcb9" opacity="0.75" rx="1"/>
<rect x="1161.2" y="12.9" width="2.4" height="3.9" fill="#b9dcb9" opacity="0.75" rx="1"/>
<rect x="960.0" y="275.6" width="3.9" height="2.0" fill="#b9dcb9" opacity="0.75" rx="1"/>
<rect x="826.8" y="19.0" width="5.4" height="1.2" fill="#b9dcb9" opacity="0.75" rx="1"/>
<rect x="418.6" y="215.9" width="1.9" height="2.3" fill="#b9dcb9" opacity="0.75" rx="1"/>
<rect x="1062.5" y="168.8" width="4.5" height="2.1" fill="#b9dcb9" opacity="0.75" rx="1"/>
<rect x="1243.4" y="31.4" width="4.3" height="1.9" fill="#b9dcb9" opacity="0.75" rx="1"/>
<rect x="749.3" y="120.6" width="1.5" height="4.4" fill="#b9dcb9" opacity="0.75" rx="1"/>
<rect x="1004.4" y="320.7" width="1.5" height="3.5" fill="#b9dcb9" opacity="0.75" rx="1"/>
<rect x="974.4" y="76.2" width="1.8" height="3.5" fill="#b9dcb9" opacity="0.75" rx="1"/>
<rect x="753.1" y="144.0" width="5.6" height="4.0" fill="#b9dcb9" opacity="0.75" rx="1"/>
<rect x="562.3" y="300.8" width="1.6" height="2.2" fill="#b9dcb9" opacity="0.75" rx="1"/>
<rect x="386.3" y="269.4" width="2.4" height="2.8" fill="#b9dcb9" opacity="0.75" rx="1"/>
<rect x="655.2" y="91.7" width="4.9" height="2.0" fill="#b9dcb9" opacity="0.75" rx="1"/>
<rect x="945.9" y="237.1" width="5.6" height="1.8" fill="#b9dcb9" opacity="0.75" rx="1"/>
<rect x="486.8" y="297.3" width="3.1" height="3.8" fill="#b9dcb9" opacity="0.75" rx="1"/>
<rect x="650.2" y="37.4" width="5.6" height="3.7" fill="#b9dcb9" opacity="0.75" rx="1"/>
<rect x="1260.8" y="398.2" width="2.3" height="1.4" fill="#b9dcb9" opacity="0.75" rx="1"/>
<rect x="595.3" y="107.4" width="5.0" height="3.5" fill="#b9dcb9" opacity="0.75" rx="1"/>
<rect x="583.2" y="274.3" width="3.2" height="4.3" fill="#b9dcb9" opacity="0.75" rx="1"/>
<rect x="1139.4" y="45.9" width="4.0" height="1.7" fill="#b9dcb9" opacity="0.75" rx="1"/>
<rect x="1162.7" y="387.3" width="4.8" height="3.7" fill="#b9dcb9" opacity="0.75" rx="1"/>
<rect x="541.7" y="148.4" width="6.0" height="2.4" fill="#b9dcb9" opacity="0.75" rx="1"/>
<rect x="1111.6" y="195.4" width="5.4" height="4.4" fill="#b9dcb9" opacity="0.75" rx="1"/>
<rect x="1142.0" y="367.2" width="3.1" height="1.6" fill="#b9dcb9" opacity="0.75" rx="1"/>
<rect x="1068.0" y="350.8" width="3.4" height="2.4" fill="#b9dcb9" opacity="0.75" rx="1"/>
<rect x="964.9" y="384.7" width="2.1" height="3.9" fill="#b9dcb9" opacity="0.75" rx="1"/>
<rect x="1094.9" y="281.7" width="5.1" height="3.1" fill="#b9dcb9" opacity="0.75" rx="1"/>
<rect x="1125.0" y="236.0" width="5.4" height="4.3" fill="#b9dcb9" opacity="0.75" rx="1"/>
<rect x="427.7" y="248.2" width="5.9" height="2.4" fill="#b9dcb9" opacity="0.75" rx="1"/>
<rect x="401.8" y="158.4" width="4.1" height="2.0" fill="#b9dcb9" opacity="0.75" rx="1"/>
<rect x="1194.0" y="4.0" width="2.8" height="3.9" fill="#b9dcb9" opacity="0.75" rx="1"/>
<rect x="604.7" y="73.8" width="2.9" height="1.8" fill="#b9dcb9" opacity="0.75" rx="1"/>
<rect x="1041.9" y="346.4" width="2.5" height="4.0" fill="#b9dcb9" opacity="0.75" rx="1"/>
<rect x="1149.8" y="160.9" width="3.3" height="4.1" fill="#b9dcb9" opacity="0.75" rx="1"/>
<rect x="629.9" y="274.5" width="5.8" height="3.1" fill="#b9dcb9" opacity="0.75" rx="1"/>
<rect x="606.6" y="219.2" width="4.1" height="2.8" fill="#b9dcb9" opacity="0.75" rx="1"/>
<rect x="569.0" y="9.6" width="5.3" height="1.2" fill="#b9dcb9" opacity="0.75" rx="1"/>
<rect x="996.8" y="115.5" width="2.9" height="1.4" fill="#b9dcb9" opacity="0.75" rx="1"/>
<rect x="891.5" y="80.2" width="2.1" height="3.0" fill="#b9dcb9" opacity="0.75" rx="1"/>
<rect x="722.9" y="129.3" width="2.6" height="2.6" fill="#b9dcb9" opacity="0.75" rx="1"/>
<rect x="1050.1" y="387.4" width="3.8" height="2.3" fill="#b9dcb9" opacity="0.75" rx="1"/>
<rect x="548.9" y="296.6" width="2.4" height="1.7" fill="#b9dcb9" opacity="0.75" rx="1"/>
<rect x="911.4" y="198.2" width="1.8" height="1.2" fill="#b9dcb9" opacity="0.75" rx="1"/>
<rect x="386.2" y="108.2" width="5.2" height="3.9" fill="#b9dcb9" opacity="0.75" rx="1"/>
<rect x="646.7" y="375.9" width="3.4" height="3.1" fill="#b9dcb9" opacity="0.75" rx="1"/>
<rect x="1053.8" y="46.4" width="2.3" height="4.0" fill="#b9dcb9" opacity="0.75" rx="1"/>
<rect x="615.3" y="298.6" width="3.5" height="2.3" fill="#b9dcb9" opacity="0.75" rx="1"/>
<rect x="1231.8" y="258.3" width="1.9" height="2.1" fill="#b9dcb9" opacity="0.75" rx="1"/>
<rect x="592.3" y="378.7" width="4.4" height="1.9" fill="#b9dcb9" opacity="0.75" rx="1"/>
<rect x="752.4" y="50.5" width="1.5" height="3.0" fill="#b9dcb9" opacity="0.75" rx="1"/>
<rect x="746.7" y="140.7" width="5.3" height="3.8" fill="#b9dcb9" opacity="0.75" rx="1"/>
<rect x="1150.0" y="270.0" width="5.7" height="4.0" fill="#b9dcb9" opacity="0.75" rx="1"/>
<rect x="751.7" y="291.8" width="2.4" height="1.4" fill="#b9dcb9" opacity="0.75" rx="1"/>
<rect x="383.6" y="176.6" width="2.7" height="2.4" fill="#b9dcb9" opacity="0.75" rx="1"/>
<rect x="1012.5" y="14.6" width="4.6" height="2.5" fill="#b9dcb9" opacity="0.75" rx="1"/>
<rect x="416.5" y="198.0" width="4.9" height="1.7" fill="#b9dcb9" opacity="0.75" rx="1"/>
<rect x="1020.0" y="361.5" width="2.5" height="4.2" fill="#b9dcb9" opacity="0.75" rx="1"/>
<rect x="606.8" y="150.6" width="4.6" height="1.8" fill="#b9dcb9" opacity="0.75" rx="1"/>
<rect x="764.1" y="262.6" width="2.9" height="1.5" fill="#b9dcb9" opacity="0.75" rx="1"/>
<rect x="1068.7" y="286.7" width="2.5" height="2.4" fill="#b9dcb9" opacity="0.75" rx="1"/>
<rect x="570.6" y="212.4" width="5.4" height="3.4" fill="#b9dcb9" opacity="0.75" rx="1"/>
<rect x="1076.9" y="256.6" width="3.3" height="2.1" fill="#b9dcb9" opacity="0.75" rx="1"/>
<rect x="465.3" y="278.6" width="3.0" height="1.3" fill="#b9dcb9" opacity="0.75" rx="1"/>
<rect x="703.0" y="358.2" width="4.4" height="2.6" fill="#b9dcb9" opacity="0.75" rx="1"/>
<rect x="432.5" y="300.4" width="4.0" height="1.7" fill="#b9dcb9" opacity="0.75" rx="1"/>
<rect x="970.8" y="315.6" width="2.4" height="4.3" fill="#b9dcb9" opacity="0.75" rx="1"/>
<rect x="888.6" y="398.8" width="2.6" height="3.3" fill="#b9dcb9" opacity="0.75" rx="1"/>
<rect x="851.7" y="65.3" width="2.1" height="1.5" fill="#b9dcb9" opacity="0.75" rx="1"/>
<rect x="1180.2" y="386.5" width="1.7" height="2.7" fill="#b9dcb9" opacity="0.75" rx="1"/>
<rect x="917.9" y="224.9" width="4.2" height="3.4" fill="#b9dcb9" opacity="0.75" rx="1"/>
<rect x="572.7" y="5.4" width="4.7" height="4.5" fill="#b9dcb9" opacity="0.75" rx="1"/>
<rect x="1190.9" y="387.0" width="2.8" height="3.7" fill="#b9dcb9" opacity="0.75" rx="1"/>
<rect x="981.1" y="21.1" width="3.5" height="1.9" fill="#b9dcb9" opacity="0.75" rx="1"/>
<rect x="1037.3" y="104.3" width="4.0" height="3.1" fill="#b9dcb9" opacity="0.75" rx="1"/>
<rect x="900.7" y="363.9" width="2.0" height="3.5" fill="#b9dcb9" opacity="0.75" rx="1"/>
<rect x="815.1" y="46.4" width="5.7" height="2.3" fill="#b9dcb9" opacity="0.75" rx="1"/>
<rect x="937.4" y="110.4" width="2.0" height="3.9" fill="#b9dcb9" opacity="0.75" rx="1"/>
<rect x="469.7" y="289.4" width="5.9" height="2.0" fill="#b9dcb9" opacity="0.75" rx="1"/>
<rect x="438.5" y="138.5" width="2.0" height="4.5" fill="#b9dcb9" opacity="0.75" rx="1"/>
<rect x="477.4" y="68.5" width="1.7" height="4.5" fill="#b9dcb9" opacity="0.75" rx="1"/>
<rect x="921.3" y="33.0" width="1.6" height="2.6" fill="#b9dcb9" opacity="0.75" rx="1"/>
<rect x="624.2" y="335.4" width="5.0" height="2.0" fill="#b9dcb9" opacity="0.75" rx="1"/>
<rect x="384.9" y="105.4" width="2.2" height="2.0" fill="#b9dcb9" opacity="0.75" rx="1"/>
<rect x="581.3" y="268.0" width="3.5" height="4.2" fill="#b9dcb9" opacity="0.75" rx="1"/>
<rect x="1113.9" y="192.6" width="3.6" height="2.9" fill="#b9dcb9" opacity="0.75" rx="1"/>
<rect x="1256.0" y="169.2" width="3.4" height="1.7" fill="#b9dcb9" opacity="0.75" rx="1"/>
<rect x="1189.2" y="318.2" width="4.5" height="3.8" fill="#b9dcb9" opacity="0.75" rx="1"/>
<rect x="722.8" y="331.6" width="2.4" height="1.2" fill="#b9dcb9" opacity="0.75" rx="1"/>
<rect x="985.6" y="300.8" width="4.1" height="3.0" fill="#b9dcb9" opacity="0.75" rx="1"/>
<rect x="872.2" y="16.2" width="4.0" height="4.1" fill="#b9dcb9" opacity="0.75" rx="1"/>
<rect x="399.9" y="104.2" width="3.8" height="2.5" fill="#b9dcb9" opacity="0.75" rx="1"/>
<rect x="996.6" y="62.9" width="4.3" height="2.9" fill="#b9dcb9" opacity="0.75" rx="1"/>
<rect x="1085.7" y="255.5" width="4.6" height="2.1" fill="#b9dcb9" opacity="0.75" rx="1"/>
<rect x="1203.9" y="144.7" width="4.3" height="2.3" fill="#b9dcb9" opacity="0.75" rx="1"/>
<rect x="1146.4" y="293.1" width="4.1" height="4.3" fill="#b9dcb9" opacity="0.75" rx="1"/>
<rect x="1201.6" y="147.7" width="2.7" height="2.3" fill="#b9dcb9" opacity="0.75" rx="1"/>
<rect x="601.9" y="115.5" width="2.0" height="3.7" fill="#b9dcb9" opacity="0.75" rx="1"/>
<rect x="716.7" y="344.0" width="1.5" height="2.2" fill="#b9dcb9" opacity="0.75" rx="1"/>
<rect x="1244.4" y="348.8" width="6.0" height="4.4" fill="#b9dcb9" opacity="0.75" rx="1"/>
<rect x="1179.8" y="258.8" width="5.8" height="1.7" fill="#b9dcb9" opacity="0.75" rx="1"/>
<rect x="794.1" y="229.2" width="5.0" height="3.1" fill="#b9dcb9" opacity="0.75" rx="1"/>
<rect x="561.1" y="349.2" width="3.8" height="3.3" fill="#b9dcb9" opacity="0.75" rx="1"/>
<rect x="391.5" y="395.2" width="1.6" height="4.5" fill="#b9dcb9" opacity="0.75" rx="1"/>
<rect x="943.9" y="188.4" width="4.4" height="2.8" fill="#b9dcb9" opacity="0.75" rx="1"/>
<rect x="1223.8" y="326.9" width="1.6" height="2.6" fill="#b9dcb9" opacity="0.75" rx="1"/>
<rect x="670.5" y="312.7" width="2.9" height="2.4" fill="#b9dcb9" opacity="0.75" rx="1"/>
<rect x="1230.1" y="224.5" width="3.0" height="2.0" fill="#b9dcb9" opacity="0.75" rx="1"/>
<rect x="390.1" y="83.5" width="2.4" height="3.7" fill="#b9dcb9" opacity="0.75" rx="1"/>
<rect x="1242.7" y="155.1" width="1.8" height="1.3" fill="#b9dcb9" opacity="0.75" rx="1"/>
<rect x="1266.9" y="354.4" width="5.4" height="3.6" fill="#b9dcb9" opacity="0.75" rx="1"/>
<rect x="837.3" y="130.4" width="3.1" height="2.8" fill="#b9dcb9" opacity="0.75" rx="1"/>
<rect x="561.1" y="170.7" width="5.8" height="2.9" fill="#b9dcb9" opacity="0.75" rx="1"/>
<rect x="847.4" y="194.8" width="3.8" height="4.1" fill="#b9dcb9" opacity="0.75" rx="1"/>
<rect x="964.8" y="295.6" width="5.7" height="3.7" fill="#b9dcb9" opacity="0.75" rx="1"/>
<rect x="1016.5" y="336.4" width="3.4" height="3.2" fill="#b9dcb9" opacity="0.75" rx="1"/>
<rect x="618.4" y="350.1" width="5.2" height="2.8" fill="#b9dcb9" opacity="0.75" rx="1"/>
<rect x="964.0" y="384.2" width="2.9" height="3.1" fill="#b9dcb9" opacity="0.75" rx="1"/>
<rect x="1168.4" y="206.4" width="1.9" height="1.9" fill="#b9dcb9" opacity="0.75" rx="1"/>
<rect x="460.6" y="147.7" width="1.8" height="3.6" fill="#b9dcb9" opacity="0.75" rx="1"/>
<rect x="536.1" y="6.2" width="1.7" height="1.3" fill="#b9dcb9" opacity="0.75" rx="1"/>
<rect x="1123.4" y="16.1" width="3.2" height="4.0" fill="#b9dcb9" opacity="0.75" rx="1"/>
<rect x="1125.5" y="112.3" width="1.6" height="4.0" fill="#b9dcb9" opacity="0.75" rx="1"/>
<rect x="967.6" y="367.3" width="4.6" height="3.7" fill="#b9dcb9" opacity="0.75" rx="1"/>
<rect x="937.3" y="271.6" width="4.3" height="1.6" fill="#b9dcb9" opacity="0.75" rx="1"/>
<rect x="604.8" y="291.1" width="5.7" height="1.7" fill="#b9dcb9" opacity="0.75" rx="1"/>
<rect x="551.1" y="126.6" width="4.0" height="4.1" fill="#b9dcb9" opacity="0.75" rx="1"/>
<rect x="524.1" y="382.1" width="3.7" height="1.4" fill="#b9dcb9" opacity="0.75" rx="1"/>
<rect x="847.3" y="142.7" width="3.3" height="4.2" fill="#b9dcb9" opacity="0.75" rx="1"/>
<rect x="409.4" y="118.7" width="4.0" height="2.4" fill="#b9dcb9" opacity="0.75" rx="1"/>
<rect x="825.2" y="275.1" width="3.6" height="1.5" fill="#b9dcb9" opacity="0.75" rx="1"/>
<rect x="878.9" y="24.0" width="3.1" height="3.7" fill="#b9dcb9" opacity="0.75" rx="1"/>
<rect x="607.7" y="92.9" width="2.4" height="1.3" fill="#b9dcb9" opacity="0.75" rx="1"/>
<rect x="900.0" y="73.9" width="4.8" height="1.4" fill="#b9dcb9" opacity="0.75" rx="1"/>
<rect x="489.2" y="251.4" width="4.3" height="2.1" fill="#b9dcb9" opacity="0.75" rx="1"/>
<rect x="517.6" y="339.2" width="4.3" height="2.8" fill="#b9dcb9" opacity="0.75" rx="1"/>
<rect x="503.2" y="134.6" width="4.3" height="1.7" fill="#b9dcb9" opacity="0.75" rx="1"/>
<rect x="883.7" y="346.9" width="3.3" height="3.0" fill="#b9dcb9" opacity="0.75" rx="1"/>
<rect x="751.9" y="49.7" width="4.0" height="1.5" fill="#b9dcb9" opacity="0.75" rx="1"/>
<rect x="1184.4" y="371.9" width="5.6" height="4.1" fill="#b9dcb9" opacity="0.75" rx="1"/>
<rect x="603.4" y="242.0" width="4.9" height="2.6" fill="#b9dcb9" opacity="0.75" rx="1"/>
<rect x="1007.5" y="254.5" width="1.8" height="1.4" fill="#b9dcb9" opacity="0.75" rx="1"/>
<rect x="1191.7" y="362.3" width="4.7" height="2.9" fill="#b9dcb9" opacity="0.75" rx="1"/>
<rect x="1097.4" y="366.4" width="4.9" height="3.4" fill="#b9dcb9" opacity="0.75" rx="1"/>
<rect x="424.7" y="102.3" width="3.0" height="2.7" fill="#b9dcb9" opacity="0.75" rx="1"/>
<rect x="644.4" y="321.3" width="6.0" height="2.5" fill="#b9dcb9" opacity="0.75" rx="1"/>
<rect x="1104.1" y="126.6" width="5.0" height="2.1" fill="#b9dcb9" opacity="0.75" rx="1"/>
<rect x="695.9" y="78.6" width="3.9" height="2.2" fill="#b9dcb9" opacity="0.75" rx="1"/>
<rect x="1180.4" y="53.4" width="5.5" height="1.9" fill="#b9dcb9" opacity="0.75" rx="1"/>
<rect x="577.4" y="276.3" width="4.6" height="1.7" fill="#b9dcb9" opacity="0.75" rx="1"/>
<rect x="919.6" y="148.1" width="4.2" height="2.6" fill="#b9dcb9" opacity="0.75" rx="1"/>
<rect x="821.2" y="41.0" width="1.9" height="4.0" fill="#b9dcb9" opacity="0.75" rx="1"/>
<rect x="509.4" y="335.4" width="2.9" height="3.5" fill="#b9dcb9" opacity="0.75" rx="1"/>
<rect x="753.0" y="196.8" width="2.6" height="2.2" fill="#b9dcb9" opacity="0.75" rx="1"/>
<rect x="520.8" y="317.2" width="1.6" height="4.1" fill="#b9dcb9" opacity="0.75" rx="1"/>
<rect x="1087.7" y="101.0" width="2.4" height="3.9" fill="#b9dcb9" opacity="0.75" rx="1"/>
<rect x="769.5" y="87.9" width="3.9" height="4.3" fill="#b9dcb9" opacity="0.75" rx="1"/>
<rect x="1161.0" y="217.9" width="4.0" height="3.6" fill="#b9dcb9" opacity="0.75" rx="1"/>
<rect x="686.1" y="16.5" width="3.8" height="1.6" fill="#b9dcb9" opacity="0.75" rx="1"/>
<rect x="637.8" y="125.2" width="3.9" height="1.3" fill="#b9dcb9" opacity="0.75" rx="1"/>
<rect x="592.9" y="5.5" width="5.3" height="4.5" fill="#b9dcb9" opacity="0.75" rx="1"/>
<rect x="1018.0" y="8.8" width="2.1" height="3.7" fill="#b9dcb9" opacity="0.75" rx="1"/>
<rect x="809.0" y="284.5" width="3.1" height="4.2" fill="#b9dcb9" opacity="0.75" rx="1"/>
<rect x="651.9" y="237.5" width="4.1" height="2.1" fill="#b9dcb9" opacity="0.75" rx="1"/>
<rect x="639.0" y="384.1" width="5.7" height="4.0" fill="#b9dcb9" opacity="0.75" rx="1"/>
<rect x="1033.6" y="228.9" width="2.9" height="1.5" fill="#b9dcb9" opacity="0.75" rx="1"/>
<rect x="1221.6" y="311.8" width="2.7" height="4.1" fill="#b9dcb9" opacity="0.75" rx="1"/>
<rect x="904.6" y="37.9" width="2.9" height="2.0" fill="#b9dcb9" opacity="0.75" rx="1"/>
<rect x="1070.3" y="331.1" width="4.3" height="2.6" fill="#b9dcb9" opacity="0.75" rx="1"/>
<rect x="1149.0" y="163.3" width="2.2" height="3.4" fill="#b9dcb9" opacity="0.75" rx="1"/>
<rect x="1195.9" y="357.0" width="5.2" height="2.6" fill="#b9dcb9" opacity="0.75" rx="1"/>
<rect x="816.0" y="256.3" width="3.9" height="4.2" fill="#b9dcb9" opacity="0.75" rx="1"/>
<rect x="991.8" y="339.7" width="4.3" height="1.4" fill="#b9dcb9" opacity="0.75" rx="1"/>
<rect x="452.9" y="99.2" width="4.2" height="4.1" fill="#b9dcb9" opacity="0.75" rx="1"/>
<rect x="1184.0" y="238.9" width="2.7" height="3.1" fill="#b9dcb9" opacity="0.75" rx="1"/>
<rect x="600.8" y="209.3" width="3.7" height="4.3" fill="#b9dcb9" opacity="0.75" rx="1"/>
<rect x="1193.8" y="20.8" width="5.2" height="3.2" fill="#b9dcb9" opacity="0.75" rx="1"/>
<rect x="920.2" y="180.2" width="5.5" height="3.8" fill="#b9dcb9" opacity="0.75" rx="1"/>
<rect x="511.7" y="139.8" width="2.6" height="1.9" fill="#b9dcb9" opacity="0.75" rx="1"/>
<rect x="567.0" y="269.4" width="3.2" height="2.0" fill="#b9dcb9" opacity="0.75" rx="1"/>
<rect x="676.3" y="338.8" width="2.2" height="4.1" fill="#b9dcb9" opacity="0.75" rx="1"/>
<rect x="921.5" y="192.3" width="2.2" height="4.5" fill="#b9dcb9" opacity="0.75" rx="1"/>
<rect x="1126.0" y="249.3" width="3.9" height="3.2" fill="#b9dcb9" opacity="0.75" rx="1"/>
<rect x="733.9" y="12.2" width="2.3" height="2.3" fill="#b9dcb9" opacity="0.75" rx="1"/>
<rect x="474.0" y="304.6" width="4.0" height="4.0" fill="#b9dcb9" opacity="0.75" rx="1"/>
<rect x="1176.7" y="234.6" width="4.5" height="1.9" fill="#b9dcb9" opacity="0.75" rx="1"/>
<rect x="475.4" y="294.8" width="5.4" height="1.9" fill="#b9dcb9" opacity="0.75" rx="1"/>
<rect x="1142.6" y="169.4" width="4.1" height="4.1" fill="#b9dcb9" opacity="0.75" rx="1"/>
<rect x="1191.8" y="326.8" width="5.2" height="3.5" fill="#b9dcb9" opacity="0.75" rx="1"/>
<rect x="1128.9" y="327.1" width="2.7" height="3.1" fill="#b9dcb9" opacity="0.75" rx="1"/>
<rect x="427.9" y="81.9" width="5.7" height="1.8" fill="#b9dcb9" opacity="0.75" rx="1"/>
<rect x="745.4" y="82.8" width="2.6" height="2.6" fill="#b9dcb9" opacity="0.75" rx="1"/>
<rect x="466.0" y="297.5" width="2.5" height="1.7" fill="#b9dcb9" opacity="0.75" rx="1"/>
<rect x="793.3" y="190.6" width="3.3" height="4.4" fill="#b9dcb9" opacity="0.75" rx="1"/>
<rect x="1230.1" y="341.6" width="4.1" height="1.6" fill="#b9dcb9" opacity="0.75" rx="1"/>
<rect x="998.4" y="98.7" width="4.0" height="1.7" fill="#b9dcb9" opacity="0.75" rx="1"/>
<rect x="993.4" y="87.4" width="5.7" height="3.7" fill="#b9dcb9" opacity="0.75" rx="1"/>
<rect x="885.6" y="45.2" width="2.4" height="2.7" fill="#b9dcb9" opacity="0.75" rx="1"/>
<rect x="1021.3" y="189.2" width="5.5" height="3.0" fill="#b9dcb9" opacity="0.75" rx="1"/>
<rect x="614.1" y="83.0" width="1.8" height="3.9" fill="#b9dcb9" opacity="0.75" rx="1"/>
<rect x="1178.8" y="336.2" width="5.5" height="4.0" fill="#b9dcb9" opacity="0.75" rx="1"/>
<rect x="826.6" y="159.0" width="4.2" height="4.3" fill="#b9dcb9" opacity="0.75" rx="1"/>
<rect x="559.1" y="382.3" width="4.7" height="1.7" fill="#b9dcb9" opacity="0.75" rx="1"/>
<rect x="407.9" y="60.8" width="5.5" height="2.2" fill="#b9dcb9" opacity="0.75" rx="1"/>
<rect x="1104.1" y="283.2" width="2.4" height="2.3" fill="#b9dcb9" opacity="0.75" rx="1"/>
<rect x="601.4" y="47.2" width="3.0" height="3.5" fill="#b9dcb9" opacity="0.75" rx="1"/>
<rect x="834.9" y="217.7" width="3.6" height="3.3" fill="#b9dcb9" opacity="0.75" rx="1"/>
<rect x="885.9" y="60.6" width="1.9" height="2.3" fill="#b9dcb9" opacity="0.75" rx="1"/>
<rect x="1015.8" y="320.6" width="3.9" height="4.0" fill="#b9dcb9" opacity="0.75" rx="1"/>
<rect x="976.7" y="326.1" width="4.3" height="4.1" fill="#b9dcb9" opacity="0.75" rx="1"/>
<rect x="665.7" y="99.5" width="4.3" height="3.3" fill="#b9dcb9" opacity="0.75" rx="1"/>
<rect x="876.9" y="99.4" width="4.9" height="3.4" fill="#b9dcb9" opacity="0.75" rx="1"/>
<rect x="795.4" y="223.4" width="2.8" height="2.5" fill="#b9dcb9" opacity="0.75" rx="1"/>
<rect x="1250.0" y="57.5" width="3.7" height="3.2" fill="#b9dcb9" opacity="0.75" rx="1"/>
<rect x="831.4" y="184.1" width="1.9" height="3.8" fill="#b9dcb9" opacity="0.75" rx="1"/>
<rect x="439.5" y="146.1" width="3.3" height="1.8" fill="#b9dcb9" opacity="0.75" rx="1"/>
<rect x="1181.0" y="331.4" width="1.6" height="1.3" fill="#b9dcb9" opacity="0.75" rx="1"/>
<rect x="435.5" y="94.4" width="2.3" height="2.8" fill="#b9dcb9" opacity="0.75" rx="1"/>
<rect x="496.0" y="17.6" width="6.0" height="4.1" fill="#b9dcb9" opacity="0.75" rx="1"/>
<rect x="450.9" y="138.5" width="2.4" height="1.7" fill="#b9dcb9" opacity="0.75" rx="1"/>
<rect x="881.3" y="175.1" width="2.9" height="2.8" fill="#b9dcb9" opacity="0.75" rx="1"/>
<rect x="814.0" y="17.9" width="1.9" height="2.6" fill="#b9dcb9" opacity="0.75" rx="1"/>
<rect x="1016.6" y="324.9" width="3.3" height="1.3" fill="#b9dcb9" opacity="0.75" rx="1"/>
<rect x="1157.8" y="12.7" width="2.7" height="3.1" fill="#b9dcb9" opacity="0.75" rx="1"/>
<rect x="816.4" y="106.7" width="4.3" height="1.8" fill="#b9dcb9" opacity="0.75" rx="1"/>
<rect x="1065.4" y="14.6" width="1.7" height="2.3" fill="#b9dcb9" opacity="0.75" rx="1"/>
<rect x="1098.3" y="341.9" width="5.6" height="2.5" fill="#b9dcb9" opacity="0.75" rx="1"/>
<rect x="1204.6" y="153.4" width="3.8" height="1.9" fill="#b9dcb9" opacity="0.75" rx="1"/>
<rect x="948.4" y="106.1" width="5.5" height="2.3" fill="#b9dcb9" opacity="0.75" rx="1"/>
<rect x="1202.7" y="222.8" width="3.2" height="3.4" fill="#b9dcb9" opacity="0.75" rx="1"/>
<rect x="590.7" y="196.9" width="3.5" height="2.0" fill="#b9dcb9" opacity="0.75" rx="1"/>
<rect x="408.9" y="54.6" width="5.1" height="1.3" fill="#b9dcb9" opacity="0.75" rx="1"/>
<rect x="682.2" y="83.7" width="1.9" height="2.9" fill="#b9dcb9" opacity="0.75" rx="1"/>
<rect x="1172.4" y="175.1" width="5.8" height="2.1" fill="#b9dcb9" opacity="0.75" rx="1"/>
<rect x="1105.1" y="8.9" width="2.3" height="3.6" fill="#b9dcb9" opacity="0.75" rx="1"/>
<rect x="420.8" y="193.5" width="3.7" height="3.9" fill="#b9dcb9" opacity="0.75" rx="1"/>
<rect x="949.5" y="299.0" width="1.8" height="1.7" fill="#b9dcb9" opacity="0.75" rx="1"/>
<rect x="901.0" y="207.2" width="5.6" height="4.3" fill="#b9dcb9" opacity="0.75" rx="1"/>
<rect x="1120.7" y="314.7" width="2.7" height="3.1" fill="#b9dcb9" opacity="0.75" rx="1"/>
<rect x="837.4" y="269.8" width="2.8" height="2.6" fill="#b9dcb9" opacity="0.75" rx="1"/>
<rect x="594.9" y="303.1" width="1.6" height="3.9" fill="#b9dcb9" opacity="0.75" rx="1"/>
<rect x="1132.5" y="44.1" width="5.3" height="1.8" fill="#b9dcb9" opacity="0.75" rx="1"/>
<rect x="970.3" y="25.9" width="2.8" height="3.1" fill="#b9dcb9" opacity="0.75" rx="1"/>
<rect x="1236.5" y="254.3" width="2.3" height="1.4" fill="#b9dcb9" opacity="0.75" rx="1"/>
<rect x="1107.4" y="105.3" width="3.5" height="3.5" fill="#b9dcb9" opacity="0.75" rx="1"/>
<rect x="1005.1" y="77.7" width="3.8" height="4.4" fill="#b9dcb9" opacity="0.75" rx="1"/>
<rect x="678.6" y="236.5" width="3.4" height="1.3" fill="#b9dcb9" opacity="0.75" rx="1"/>
<rect x="1223.9" y="146.3" width="5.9" height="2.8" fill="#b9dcb9" opacity="0.75" rx="1"/>
<rect x="864.2" y="119.9" width="1.8" height="3.8" fill="#b9dcb9" opacity="0.75" rx="1"/>
<rect x="615.7" y="329.3" width="4.3" height="4.2" fill="#b9dcb9" opacity="0.75" rx="1"/>
<rect x="688.2" y="136.4" width="4.5" height="2.9" fill="#b9dcb9" opacity="0.75" rx="1"/>
<rect x="1224.8" y="165.3" width="5.1" height="2.0" fill="#b9dcb9" opacity="0.75" rx="1"/>
<rect x="642.0" y="236.3" width="4.0" height="2.0" fill="#b9dcb9" opacity="0.75" rx="1"/>
<rect x="435.2" y="25.5" width="3.1" height="2.4" fill="#b9dcb9" opacity="0.75" rx="1"/>
<rect x="769.6" y="185.3" width="3.0" height="1.8" fill="#b9dcb9" opacity="0.75" rx="1"/>
<rect x="589.7" y="200.3" width="5.8" height="4.3" fill="#b9dcb9" opacity="0.75" rx="1"/>
<rect x="1199.6" y="119.6" width="2.9" height="2.0" fill="#b9dcb9" opacity="0.75" rx="1"/>
<rect x="1156.7" y="288.7" width="5.8" height="1.7" fill="#b9dcb9" opacity="0.75" rx="1"/>
<rect x="402.6" y="160.9" width="1.9" height="2.8" fill="#b9dcb9" opacity="0.75" rx="1"/>
<rect x="916.6" y="397.2" width="3.5" height="3.6" fill="#b9dcb9" opacity="0.75" rx="1"/>
<rect x="1052.4" y="272.6" width="4.0" height="3.3" fill="#b9dcb9" opacity="0.75" rx="1"/>
<rect x="1141.2" y="84.4" width="1.7" height="3.6" fill="#b9dcb9" opacity="0.75" rx="1"/>
<rect x="516.9" y="302.3" width="3.4" height="4.3" fill="#b9dcb9" opacity="0.75" rx="1"/>
<rect x="973.1" y="129.7" width="2.2" height="1.3" fill="#b9dcb9" opacity="0.75" rx="1"/>
<rect x="455.4" y="176.3" width="4.7" height="4.5" fill="#b9dcb9" opacity="0.75" rx="1"/>
<rect x="1045.4" y="212.4" width="4.1" height="3.1" fill="#b9dcb9" opacity="0.75" rx="1"/>
<rect x="434.4" y="235.8" width="1.8" height="1.7" fill="#b9dcb9" opacity="0.75" rx="1"/>
<rect x="1180.3" y="122.6" width="4.5" height="2.3" fill="#b9dcb9" opacity="0.75" rx="1"/>
<rect x="564.2" y="173.2" width="4.1" height="4.2" fill="#b9dcb9" opacity="0.75" rx="1"/>
<rect x="897.9" y="59.5" width="1.5" height="2.9" fill="#b9dcb9" opacity="0.75" rx="1"/>
<rect x="465.6" y="132.4" width="1.9" height="1.4" fill="#b9dcb9" opacity="0.75" rx="1"/>
<rect x="1080.2" y="218.9" width="3.4" height="3.3" fill="#b9dcb9" opacity="0.75" rx="1"/>
<rect x="1144.6" y="9.2" width="5.7" height="3.6" fill="#b9dcb9" opacity="0.75" rx="1"/>
<rect x="937.9" y="243.9" width="5.3" height="3.2" fill="#b9dcb9" opacity="0.75" rx="1"/>
<rect x="1146.3" y="140.6" width="2.3" height="3.2" fill="#b9dcb9" opacity="0.75" rx="1"/>
<rect x="1042.5" y="383.9" width="5.3" height="3.2" fill="#b9dcb9" opacity="0.75" rx="1"/>
<rect x="1117.1" y="288.8" width="4.2" height="3.5" fill="#b9dcb9" opacity="0.75" rx="1"/>
<rect x="507.0" y="135.0" width="4.1" height="1.9" fill="#b9dcb9" opacity="0.75" rx="1"/>
<rect x="634.0" y="20.0" width="1.5" height="4.5" fill="#b9dcb9" opacity="0.75" rx="1"/>
<rect x="431.9" y="49.0" width="4.5" height="3.1" fill="#b9dcb9" opacity="0.75" rx="1"/>
<rect x="496.1" y="218.8" width="4.4" height="1.5" fill="#b9dcb9" opacity="0.75" rx="1"/>
<rect x="1061.6" y="75.1" width="2.0" height="3.9" fill="#b9dcb9" opacity="0.75" rx="1"/>
<rect x="779.5" y="50.8" width="4.6" height="1.9" fill="#b9dcb9" opacity="0.75" rx="1"/>
<rect x="860.2" y="41.6" width="4.6" height="3.3" fill="#b9dcb9" opacity="0.75" rx="1"/>
<rect x="678.1" y="34.2" width="4.5" height="2.2" fill="#b9dcb9" opacity="0.75" rx="1"/>
<rect x="1153.2" y="379.3" width="1.8" height="1.4" fill="#b9dcb9" opacity="0.75" rx="1"/>
<rect x="417.1" y="5.9" width="1.6" height="4.4" fill="#b9dcb9" opacity="0.75" rx="1"/>
<rect x="646.3" y="302.1" width="4.3" height="3.5" fill="#b9dcb9" opacity="0.75" rx="1"/>
<rect x="672.9" y="129.5" width="2.4" height="1.3" fill="#b9dcb9" opacity="0.75" rx="1"/>
<rect x="874.6" y="59.9" width="4.3" height="1.9" fill="#b9dcb9" opacity="0.75" rx="1"/>
<rect x="560.2" y="114.4" width="2.0" height="2.7" fill="#b9dcb9" opacity="0.75" rx="1"/>
<rect x="1108.6" y="37.6" width="4.5" height="1.3" fill="#b9dcb9" opacity="0.75" rx="1"/>
<rect x="600.7" y="114.0" width="3.1" height="3.7" fill="#b9dcb9" opacity="0.75" rx="1"/>
<rect x="404.8" y="176.3" width="3.2" height="2.1" fill="#b9dcb9" opacity="0.75" rx="1"/>
<rect x="522.4" y="90.6" width="4.1" height="4.0" fill="#b9dcb9" opacity="0.75" rx="1"/>
<rect x="1195.0" y="150.3" width="1.7" height="2.2" fill="#b9dcb9" opacity="0.75" rx="1"/>
<rect x="1024.2" y="145.2" width="3.3" height="1.9" fill="#b9dcb9" opacity="0.75" rx="1"/>
<rect x="1160.6" y="262.8" width="3.5" height="2.8" fill="#b9dcb9" opacity="0.75" rx="1"/>
<rect x="433.8" y="184.0" width="5.5" height="3.2" fill="#b9dcb9" opacity="0.75" rx="1"/>
<rect x="988.5" y="137.0" width="3.5" height="3.4" fill="#b9dcb9" opacity="0.75" rx="1"/>
<rect x="817.6" y="108.5" width="2.2" height="2.2" fill="#b9dcb9" opacity="0.75" rx="1"/>
<rect x="716.4" y="245.2" width="2.2" height="4.0" fill="#b9dcb9" opacity="0.75" rx="1"/>
<rect x="572.8" y="245.4" width="4.5" height="3.6" fill="#b9dcb9" opacity="0.75" rx="1"/>
<rect x="1106.2" y="277.8" width="2.1" height="2.4" fill="#b9dcb9" opacity="0.75" rx="1"/>
<rect x="457.7" y="382.8" width="2.9" height="3.1" fill="#b9dcb9" opacity="0.75" rx="1"/>
<rect x="1159.2" y="261.7" width="5.7" height="2.7" fill="#b9dcb9" opacity="0.75" rx="1"/>
<rect x="1139.2" y="242.2" width="3.0" height="2.5" fill="#b9dcb9" opacity="0.75" rx="1"/>
<rect x="1012.2" y="45.7" width="4.4" height="2.9" fill="#b9dcb9" opacity="0.75" rx="1"/>
<rect x="755.7" y="37.4" width="4.4" height="1.4" fill="#b9dcb9" opacity="0.75" rx="1"/>
<rect x="538.0" y="396.9" width="1.7" height="4.3" fill="#b9dcb9" opacity="0.75" rx="1"/>
<rect x="827.3" y="137.7" width="2.2" height="4.2" fill="#b9dcb9" opacity="0.75" rx="1"/>
<rect x="553.0" y="269.1" width="3.7" height="1.7" fill="#b9dcb9" opacity="0.75" rx="1"/>
<rect x="504.6" y="73.6" width="1.8" height="4.5" fill="#b9dcb9" opacity="0.75" rx="1"/>
<rect x="598.3" y="380.9" width="2.7" height="2.9" fill="#b9dcb9" opacity="0.75" rx="1"/>
<rect x="538.8" y="259.0" width="2.8" height="1.3" fill="#b9dcb9" opacity="0.75" rx="1"/>
<rect x="512.1" y="175.1" width="1.8" height="1.5" fill="#b9dcb9" opacity="0.75" rx="1"/>
<rect x="709.0" y="245.5" width="2.6" height="3.3" fill="#b9dcb9" opacity="0.75" rx="1"/>
<rect x="985.3" y="293.5" width="5.9" height="4.4" fill="#b9dcb9" opacity="0.75" rx="1"/>
<rect x="680.6" y="221.2" width="5.7" height="3.8" fill="#b9dcb9" opacity="0.75" rx="1"/>
<rect x="1064.2" y="349.4" width="3.7" height="2.4" fill="#b9dcb9" opacity="0.75" rx="1"/>
<rect x="776.6" y="296.1" width="3.4" height="1.5" fill="#b9dcb9" opacity="0.75" rx="1"/>
<rect x="1166.9" y="51.9" width="5.7" height="3.8" fill="#b9dcb9" opacity="0.75" rx="1"/>
<rect x="806.3" y="393.8" width="2.2" height="2.2" fill="#b9dcb9" opacity="0.75" rx="1"/>
<rect x="465.0" y="68.0" width="3.5" height="1.4" fill="#b9dcb9" opacity="0.75" rx="1"/>
<rect x="1019.4" y="178.8" width="3.3" height="2.6" fill="#b9dcb9" opacity="0.75" rx="1"/>
<rect x="655.5" y="332.6" width="2.3" height="3.5" fill="#b9dcb9" opacity="0.75" rx="1"/>
<rect x="493.4" y="292.7" width="3.1" height="1.7" fill="#b9dcb9" opacity="0.75" rx="1"/>
<rect x="1089.1" y="32.1" width="5.0" height="2.4" fill="#b9dcb9" opacity="0.75" rx="1"/>
<rect x="568.1" y="32.0" width="5.4" height="1.4" fill="#b9dcb9" opacity="0.75" rx="1"/>
<rect x="1141.7" y="91.9" width="4.2" height="3.0" fill="#b9dcb9" opacity="0.75" rx="1"/>
<rect x="986.9" y="161.4" width="3.5" height="2.5" fill="#b9dcb9" opacity="0.75" rx="1"/>
<rect x="927.0" y="279.7" width="2.9" height="4.1" fill="#b9dcb9" opacity="0.75" rx="1"/>
<rect x="1262.1" y="228.5" width="4.5" height="4.0" fill="#b9dcb9" opacity="0.75" rx="1"/>
<rect x="1042.9" y="316.2" width="1.6" height="2.8" fill="#b9dcb9" opacity="0.75" rx="1"/>
<rect x="1183.3" y="248.3" width="4.8" height="1.6" fill="#b9dcb9" opacity="0.75" rx="1"/>
<rect x="470.0" y="53.0" width="2.6" height="3.4" fill="#b9dcb9" opacity="0.75" rx="1"/>
<rect x="1011.3" y="51.9" width="5.7" height="3.7" fill="#b9dcb9" opacity="0.75" rx="1"/>
<rect x="1180.5" y="218.5" width="4.1" height="1.7" fill="#b9dcb9" opacity="0.75" rx="1"/>
<rect x="737.0" y="264.3" width="5.9" height="3.7" fill="#b9dcb9" opacity="0.75" rx="1"/>
<rect x="546.4" y="325.8" width="5.6" height="1.8" fill="#b9dcb9" opacity="0.75" rx="1"/>
<rect x="1217.4" y="357.1" width="5.0" height="1.3" fill="#b9dcb9" opacity="0.75" rx="1"/>
<rect x="1163.7" y="364.8" width="2.0" height="4.2" fill="#b9dcb9" opacity="0.75" rx="1"/>
<rect x="1124.0" y="78.9" width="2.5" height="2.5" fill="#b9dcb9" opacity="0.75" rx="1"/>
<rect x="956.2" y="282.7" width="3.7" height="2.6" fill="#b9dcb9" opacity="0.75" rx="1"/>
<rect x="654.3" y="33.3" width="3.4" height="1.7" fill="#b9dcb9" opacity="0.75" rx="1"/>
<rect x="487.6" y="139.2" width="3.8" height="4.4" fill="#b9dcb9" opacity="0.75" rx="1"/>
<rect x="839.9" y="296.0" width="1.8" height="3.4" fill="#b9dcb9" opacity="0.75" rx="1"/>
<rect x="772.9" y="98.3" width="5.0" height="2.3" fill="#b9dcb9" opacity="0.75" rx="1"/>
<rect x="555.4" y="309.0" width="5.6" height="1.4" fill="#b9dcb9" opacity="0.75" rx="1"/>
<rect x="1047.3" y="225.3" width="5.3" height="2.1" fill="#b9dcb9" opacity="0.75" rx="1"/>
<rect x="1042.3" y="366.8" width="2.5" height="3.7" fill="#b9dcb9" opacity="0.75" rx="1"/>
<rect x="730.8" y="324.6" width="2.8" height="3.8" fill="#b9dcb9" opacity="0.75" rx="1"/>
<rect x="574.8" y="253.8" width="4.1" height="1.9" fill="#b9dcb9" opacity="0.75" rx="1"/>
<rect x="386.8" y="189.1" width="5.7" height="3.4" fill="#b9dcb9" opacity="0.75" rx="1"/>
<rect x="1205.5" y="293.1" width="3.2" height="4.1" fill="#b9dcb9" opacity="0.75" rx="1"/>
<rect x="985.8" y="202.2" width="4.3" height="1.8" fill="#b9dcb9" opacity="0.75" rx="1"/>
<rect x="871.9" y="183.1" width="5.6" height="2.2" fill="#b9dcb9" opacity="0.75" rx="1"/>
<rect x="731.5" y="100.4" width="5.6" height="2.6" fill="#b9dcb9" opacity="0.75" rx="1"/>
<rect x="1218.1" y="25.6" width="5.3" height="3.4" fill="#b9dcb9" opacity="0.75" rx="1"/>
<rect x="1263.9" y="129.3" width="3.0" height="3.1" fill="#b9dcb9" opacity="0.75" rx="1"/>
<rect x="643.1" y="257.2" width="5.1" height="3.2" fill="#b9dcb9" opacity="0.75" rx="1"/>
<rect x="533.2" y="283.6" width="5.6" height="3.9" fill="#b9dcb9" opacity="0.75" rx="1"/>
<rect x="994.3" y="177.7" width="1.9" height="3.4" fill="#b9dcb9" opacity="0.75" rx="1"/>
<rect x="672.7" y="22.8" width="1.8" height="2.7" fill="#b9dcb9" opacity="0.75" rx="1"/>
<rect x="499.2" y="202.8" width="3.6" height="4.4" fill="#b9dcb9" opacity="0.75" rx="1"/>
<rect x="566.1" y="290.7" width="3.6" height="1.4" fill="#b9dcb9" opacity="0.75" rx="1"/>
<rect x="439.0" y="102.3" width="2.1" height="3.4" fill="#b9dcb9" opacity="0.75" rx="1"/>
<rect x="725.5" y="246.4" width="2.0" height="2.0" fill="#b9dcb9" opacity="0.75" rx="1"/>
<rect x="953.6" y="8.0" width="3.2" height="2.2" fill="#b9dcb9" opacity="0.75" rx="1"/>
<rect x="1180.0" y="133.5" width="5.5" height="4.5" fill="#b9dcb9" opacity="0.75" rx="1"/>
<rect x="605.0" y="62.0" width="2.4" height="2.9" fill="#b9dcb9" opacity="0.75" rx="1"/>
<rect x="501.6" y="67.2" width="3.2" height="1.4" fill="#b9dcb9" opacity="0.75" rx="1"/>
<rect x="487.0" y="27.5" width="3.3" height="3.2" fill="#b9dcb9" opacity="0.75" rx="1"/>
<rect x="700.1" y="226.4" width="3.9" height="3.7" fill="#b9dcb9" opacity="0.75" rx="1"/>
<rect x="460.1" y="100.4" width="4.9" height="1.7" fill="#b9dcb9" opacity="0.75" rx="1"/>
<rect x="1088.6" y="336.7" width="4.7" height="2.8" fill="#b9dcb9" opacity="0.75" rx="1"/>
<rect x="853.7" y="174.4" width="2.0" height="2.6" fill="#b9dcb9" opacity="0.75" rx="1"/>
<rect x="623.4" y="242.4" width="3.3" height="1.8" fill="#b9dcb9" opacity="0.75" rx="1"/>
<rect x="420.2" y="215.9" width="2.6" height="1.2" fill="#b9dcb9" opacity="0.75" rx="1"/>
<rect x="889.3" y="371.6" width="4.5" height="1.4" fill="#b9dcb9" opacity="0.75" rx="1"/>
<rect x="1118.3" y="33.1" width="3.2" height="4.1" fill="#b9dcb9" opacity="0.75" rx="1"/>
<rect x="607.9" y="191.7" width="3.9" height="3.5" fill="#b9dcb9" opacity="0.75" rx="1"/>
<rect x="783.4" y="343.5" width="1.5" height="3.3" fill="#b9dcb9" opacity="0.75" rx="1"/>
<rect x="753.9" y="270.2" width="2.2" height="3.6" fill="#b9dcb9" opacity="0.75" rx="1"/>
<rect x="1032.2" y="47.6" width="5.0" height="3.9" fill="#b9dcb9" opacity="0.75" rx="1"/>
<rect x="1051.3" y="30.1" width="2.6" height="2.1" fill="#b9dcb9" opacity="0.75" rx="1"/>
<rect x="1100.8" y="340.3" width="1.6" height="3.0" fill="#b9dcb9" opacity="0.75" rx="1"/>
<rect x="1263.1" y="165.3" width="4.9" height="4.2" fill="#b9dcb9" opacity="0.75" rx="1"/>
<rect x="1039.4" y="293.4" width="1.5" height="2.5" fill="#b9dcb9" opacity="0.75" rx="1"/>
<rect x="554.0" y="1.4" width="4.8" height="3.1" fill="#b9dcb9" opacity="0.75" rx="1"/>
<rect x="1109.6" y="81.8" width="2.9" height="3.4" fill="#b9dcb9" opacity="0.75" rx="1"/>
<rect x="888.2" y="339.8" width="3.4" height="3.6" fill="#b9dcb9" opacity="0.75" rx="1"/>
<rect x="423.8" y="149.2" width="3.7" height="2.0" fill="#b9dcb9" opacity="0.75" rx="1"/>
<rect x="1217.8" y="282.3" width="6.0" height="4.2" fill="#b9dcb9" opacity="0.75" rx="1"/>
<rect x="579.7" y="343.1" width="4.7" height="1.5" fill="#b9dcb9" opacity="0.75" rx="1"/>
<rect x="471.8" y="39.2" width="4.5" height="1.6" fill="#b9dcb9" opacity="0.75" rx="1"/>
<rect x="666.9" y="77.1" width="1.9" height="2.1" fill="#b9dcb9" opacity="0.75" rx="1"/>
<rect x="524.4" y="370.8" width="5.7" height="1.6" fill="#b9dcb9" opacity="0.75" rx="1"/>
<rect x="560.9" y="373.2" width="3.0" height="2.1" fill="#b9dcb9" opacity="0.75" rx="1"/>
<rect x="1114.0" y="161.1" width="5.0" height="3.9" fill="#b9dcb9" opacity="0.75" rx="1"/>
<rect x="444.0" y="224.5" width="3.0" height="3.6" fill="#b9dcb9" opacity="0.75" rx="1"/>
<rect x="834.3" y="176.5" width="5.3" height="4.0" fill="#b9dcb9" opacity="0.75" rx="1"/>
<rect x="1124.7" y="361.0" width="2.4" height="2.3" fill="#b9dcb9" opacity="0.75" rx="1"/>
<rect x="1201.2" y="219.0" width="1.8" height="4.4" fill="#b9dcb9" opacity="0.75" rx="1"/>
<rect x="747.4" y="175.5" width="4.6" height="4.5" fill="#b9dcb9" opacity="0.75" rx="1"/>
<rect x="884.7" y="194.1" width="2.5" height="1.5" fill="#b9dcb9" opacity="0.75" rx="1"/>
<rect x="455.1" y="19.5" width="1.8" height="2.7" fill="#b9dcb9" opacity="0.75" rx="1"/>
<rect x="931.0" y="208.8" width="4.3" height="1.7" fill="#b9dcb9" opacity="0.75" rx="1"/>
<rect x="1201.1" y="339.2" width="5.5" height="3.2" fill="#b9dcb9" opacity="0.75" rx="1"/>
<rect x="762.9" y="275.0" width="5.3" height="1.4" fill="#b9dcb9" opacity="0.75" rx="1"/>
<rect x="431.3" y="44.0" width="1.9" height="3.5" fill="#b9dcb9" opacity="0.75" rx="1"/>
<rect x="382.1" y="317.1" width="4.2" height="3.1" fill="#b9dcb9" opacity="0.75" rx="1"/>
<rect x="745.8" y="100.0" width="1.7" height="3.8" fill="#b9dcb9" opacity="0.75" rx="1"/>
<rect x="391.5" y="198.3" width="1.9" height="1.6" fill="#b9dcb9" opacity="0.75" rx="1"/>
<rect x="1123.4" y="180.0" width="2.9" height="3.7" fill="#b9dcb9" opacity="0.75" rx="1"/>
<rect x="471.1" y="113.9" width="3.9" height="2.4" fill="#b9dcb9" opacity="0.75" rx="1"/>
<rect x="806.4" y="245.7" width="2.2" height="3.5" fill="#b9dcb9" opacity="0.75" rx="1"/>
<rect x="626.7" y="188.9" width="5.1" height="2.2" fill="#b9dcb9" opacity="0.75" rx="1"/>
<rect x="1250.5" y="171.4" width="4.4" height="4.1" fill="#b9dcb9" opacity="0.75" rx="1"/>
<rect x="1178.6" y="13.9" width="2.4" height="4.4" fill="#b9dcb9" opacity="0.75" rx="1"/>
<rect x="658.0" y="157.9" width="4.6" height="3.3" fill="#b9dcb9" opacity="0.75" rx="1"/>
<rect x="1018.4" y="299.7" width="4.1" height="2.2" fill="#b9dcb9" opacity="0.75" rx="1"/>
<rect x="1047.4" y="204.2" width="2.8" height="2.4" fill="#b9dcb9" opacity="0.75" rx="1"/>
<rect x="736.3" y="159.7" width="4.8" height="3.7" fill="#b9dcb9" opacity="0.75" rx="1"/>
<rect x="506.3" y="390.8" width="1.7" height="3.6" fill="#b9dcb9" opacity="0.75" rx="1"/>
<rect x="1225.6" y="199.6" width="3.8" height="2.5" fill="#b9dcb9" opacity="0.75" rx="1"/>
<rect x="743.7" y="359.3" width="6.0" height="2.5" fill="#b9dcb9" opacity="0.75" rx="1"/>
<rect x="1261.1" y="67.8" width="5.0" height="1.4" fill="#b9dcb9" opacity="0.75" rx="1"/>
<rect x="1196.5" y="115.0" width="1.7" height="3.2" fill="#b9dcb9" opacity="0.75" rx="1"/>
<rect x="1124.2" y="239.6" width="3.4" height="4.4" fill="#b9dcb9" opacity="0.75" rx="1"/>
<rect x="806.0" y="116.8" width="2.7" height="2.7" fill="#b9dcb9" opacity="0.75" rx="1"/>
<rect x="1088.5" y="135.8" width="4.1" height="2.8" fill="#b9dcb9" opacity="0.75" rx="1"/>
<rect x="993.7" y="373.4" width="3.5" height="4.3" fill="#b9dcb9" opacity="0.75" rx="1"/>
<rect x="559.2" y="66.4" width="3.9" height="1.3" fill="#b9dcb9" opacity="0.75" rx="1"/>
<rect x="828.1" y="224.6" width="2.3" height="1.9" fill="#b9dcb9" opacity="0.75" rx="1"/>
<rect x="684.8" y="329.0" width="5.4" height="1.3" fill="#b9dcb9" opacity="0.75" rx="1"/>
<rect x="782.3" y="396.5" width="4.5" height="3.0" fill="#b9dcb9" opacity="0.75" rx="1"/>
<rect x="863.1" y="52.9" width="2.9" height="2.6" fill="#b9dcb9" opacity="0.75" rx="1"/>
<rect x="458.0" y="207.5" width="1.6" height="3.2" fill="#b9dcb9" opacity="0.75" rx="1"/>
<rect x="1113.8" y="153.2" width="4.8" height="4.1" fill="#b9dcb9" opacity="0.75" rx="1"/>
<rect x="715.3" y="48.4" width="2.7" height="3.2" fill="#b9dcb9" opacity="0.75" rx="1"/>
<rect x="1136.4" y="80.6" width="5.9" height="1.3" fill="#b9dcb9" opacity="0.75" rx="1"/>
<rect x="1168.5" y="233.2" width="6.0" height="3.7" fill="#b9dcb9" opacity="0.75" rx="1"/>
<rect x="1179.1" y="369.8" width="5.1" height="1.9" fill="#b9dcb9" opacity="0.75" rx="1"/>
<rect x="795.9" y="205.6" width="2.2" height="4.3" fill="#b9dcb9" opacity="0.75" rx="1"/>
<rect x="650.7" y="57.2" width="2.7" height="1.6" fill="#b9dcb9" opacity="0.75" rx="1"/>
<rect x="532.8" y="387.8" width="2.8" height="1.5" fill="#b9dcb9" opacity="0.75" rx="1"/>
<rect x="509.8" y="291.2" width="2.0" height="4.0" fill="#b9dcb9" opacity="0.75" rx="1"/>
<rect x="761.3" y="101.1" width="1.9" height="3.3" fill="#b9dcb9" opacity="0.75" rx="1"/>
<rect x="949.6" y="108.1" width="2.3" height="1.4" fill="#b9dcb9" opacity="0.75" rx="1"/>
<rect x="546.6" y="189.4" width="1.6" height="1.5" fill="#b9dcb9" opacity="0.75" rx="1"/>
<rect x="1044.5" y="169.4" width="5.9" height="2.1" fill="#b9dcb9" opacity="0.75" rx="1"/>
<rect x="950.4" y="65.3" width="4.1" height="2.0" fill="#b9dcb9" opacity="0.75" rx="1"/>
<rect x="620.7" y="400.9" width="1.5" height="3.6" fill="#b9dcb9" opacity="0.75" rx="1"/>
<rect x="663.5" y="297.9" width="4.2" height="1.7" fill="#b9dcb9" opacity="0.75" rx="1"/>
<rect x="602.9" y="377.7" width="5.9" height="1.7" fill="#b9dcb9" opacity="0.75" rx="1"/>
<rect x="951.1" y="168.3" width="2.7" height="3.9" fill="#b9dcb9" opacity="0.75" rx="1"/>
<rect x="503.7" y="276.4" width="1.8" height="1.7" fill="#b9dcb9" opacity="0.75" rx="1"/>
<rect x="403.8" y="48.1" width="6.0" height="3.7" fill="#b9dcb9" opacity="0.75" rx="1"/>
<rect x="1224.7" y="343.7" width="1.7" height="4.0" fill="#b9dcb9" opacity="0.75" rx="1"/>
<rect x="679.3" y="63.1" width="5.0" height="1.5" fill="#b9dcb9" opacity="0.75" rx="1"/>
<rect x="700.3" y="289.8" width="4.4" height="3.8" fill="#b9dcb9" opacity="0.75" rx="1"/>
<rect x="1125.4" y="265.6" width="1.5" height="2.9" fill="#b9dcb9" opacity="0.75" rx="1"/>
<rect x="704.6" y="239.4" width="4.3" height="2.5" fill="#b9dcb9" opacity="0.75" rx="1"/>
<rect x="1148.5" y="67.8" width="2.3" height="3.3" fill="#b9dcb9" opacity="0.75" rx="1"/>
<rect x="1235.5" y="67.0" width="4.5" height="3.7" fill="#b9dcb9" opacity="0.75" rx="1"/>
<rect x="689.1" y="348.2" width="4.3" height="3.0" fill="#b9dcb9" opacity="0.75" rx="1"/>
<rect x="512.4" y="199.3" width="3.6" height="4.4" fill="#b9dcb9" opacity="0.75" rx="1"/>
<rect x="884.4" y="285.4" width="5.1" height="4.2" fill="#b9dcb9" opacity="0.75" rx="1"/>
<rect x="558.3" y="84.8" width="5.1" height="2.1" fill="#b9dcb9" opacity="0.75" rx="1"/>
<rect x="547.9" y="20.8" width="3.8" height="2.9" fill="#b9dcb9" opacity="0.75" rx="1"/>
<rect x="559.5" y="378.0" width="2.1" height="2.2" fill="#b9dcb9" opacity="0.75" rx="1"/>
<rect x="537.1" y="144.1" width="5.6" height="4.2" fill="#b9dcb9" opacity="0.75" rx="1"/>
<rect x="493.5" y="122.1" width="1.6" height="3.3" fill="#b9dcb9" opacity="0.75" rx="1"/>
<rect x="927.1" y="294.7" width="3.6" height="1.7" fill="#b9dcb9" opacity="0.75" rx="1"/>
<rect x="638.2" y="378.9" width="3.0" height="3.7" fill="#b9dcb9" opacity="0.75" rx="1"/>
<rect x="1010.2" y="327.4" width="3.9" height="2.4" fill="#b9dcb9" opacity="0.75" rx="1"/>
<rect x="1122.1" y="124.5" width="5.5" height="3.2" fill="#b9dcb9" opacity="0.75" rx="1"/>
<rect x="643.1" y="53.7" width="3.6" height="2.2" fill="#b9dcb9" opacity="0.75" rx="1"/>
<rect x="578.9" y="29.0" width="1.9" height="4.2" fill="#b9dcb9" opacity="0.75" rx="1"/>
<rect x="1257.3" y="286.6" width="2.9" height="1.3" fill="#b9dcb9" opacity="0.75" rx="1"/>
<rect x="1125.3" y="170.1" width="5.4" height="2.8" fill="#b9dcb9" opacity="0.75" rx="1"/>
<rect x="848.0" y="66.2" width="4.7" height="2.6" fill="#b9dcb9" opacity="0.75" rx="1"/>
<rect x="386.5" y="177.3" width="6.0" height="1.9" fill="#b9dcb9" opacity="0.75" rx="1"/>
<rect x="845.8" y="237.7" width="4.7" height="1.6" fill="#b9dcb9" opacity="0.75" rx="1"/>
<rect x="1244.9" y="103.9" width="5.3" height="2.9" fill="#b9dcb9" opacity="0.75" rx="1"/>
<rect x="988.1" y="51.6" width="3.3" height="2.2" fill="#b9dcb9" opacity="0.75" rx="1"/>
<rect x="540.4" y="20.6" width="3.0" height="3.6" fill="#b9dcb9" opacity="0.75" rx="1"/>
<rect x="398.4" y="245.5" width="4.7" height="1.5" fill="#b9dcb9" opacity="0.75" rx="1"/>
<rect x="1118.7" y="272.5" width="4.6" height="4.2" fill="#b9dcb9" opacity="0.75" rx="1"/>
<rect x="929.4" y="67.4" width="4.1" height="2.5" fill="#b9dcb9" opacity="0.75" rx="1"/>
<rect x="687.0" y="305.8" width="1.5" height="3.6" fill="#b9dcb9" opacity="0.75" rx="1"/>
<rect x="391.6" y="140.9" width="1.8" height="2.6" fill="#b9dcb9" opacity="0.75" rx="1"/>
<rect x="591.9" y="266.1" width="3.4" height="3.6" fill="#b9dcb9" opacity="0.75" rx="1"/>
<rect x="547.4" y="45.5" width="2.5" height="3.1" fill="#b9dcb9" opacity="0.75" rx="1"/>
<rect x="853.5" y="377.8" width="2.1" height="4.1" fill="#b9dcb9" opacity="0.75" rx="1"/>
<rect x="1141.9" y="344.7" width="1.7" height="3.4" fill="#b9dcb9" opacity="0.75" rx="1"/>
<rect x="429.5" y="375.8" width="2.2" height="2.6" fill="#b9dcb9" opacity="0.75" rx="1"/>
<rect x="693.7" y="38.3" width="3.6" height="3.1" fill="#b9dcb9" opacity="0.75" rx="1"/>
<rect x="508.1" y="40.3" width="1.7" height="2.3" fill="#b9dcb9" opacity="0.75" rx="1"/>
<rect x="1183.0" y="66.4" width="3.7" height="2.9" fill="#b9dcb9" opacity="0.75" rx="1"/>
<rect x="747.4" y="366.2" width="3.1" height="2.3" fill="#b9dcb9" opacity="0.75" rx="1"/>
<rect x="1267.5" y="34.2" width="4.9" height="3.3" fill="#b9dcb9" opacity="0.75" rx="1"/>
<rect x="938.3" y="208.3" width="3.4" height="2.0" fill="#b9dcb9" opacity="0.75" rx="1"/>
<rect x="917.4" y="153.1" width="4.4" height="3.7" fill="#b9dcb9" opacity="0.75" rx="1"/>
<rect x="932.2" y="221.0" width="1.8" height="2.7" fill="#b9dcb9" opacity="0.75" rx="1"/>
<rect x="766.3" y="120.5" width="3.2" height="2.5" fill="#b9dcb9" opacity="0.75" rx="1"/>
<rect x="917.1" y="280.2" width="4.7" height="3.4" fill="#b9dcb9" opacity="0.75" rx="1"/>
<rect x="418.4" y="347.7" width="4.9" height="1.9" fill="#b9dcb9" opacity="0.75" rx="1"/>
<rect x="1202.6" y="339.5" width="2.3" height="1.5" fill="#b9dcb9" opacity="0.75" rx="1"/>
<rect x="441.4" y="335.4" width="1.7" height="3.8" fill="#b9dcb9" opacity="0.75" rx="1"/>
<rect x="765.4" y="186.4" width="2.8" height="3.4" fill="#b9dcb9" opacity="0.75" rx="1"/>
<rect x="1267.6" y="237.3" width="3.5" height="2.8" fill="#b9dcb9" opacity="0.75" rx="1"/>
<rect x="861.3" y="213.2" width="2.9" height="3.6" fill="#b9dcb9" opacity="0.75" rx="1"/>
<rect x="812.3" y="128.6" width="3.7" height="3.6" fill="#b9dcb9" opacity="0.75" rx="1"/>
<rect x="988.3" y="183.2" width="6.0" height="1.5" fill="#b9dcb9" opacity="0.75" rx="1"/>
<rect x="813.5" y="137.1" width="5.8" height="4.2" fill="#b9dcb9" opacity="0.75" rx="1"/>
<rect x="799.8" y="392.6" width="5.3" height="2.6" fill="#b9dcb9" opacity="0.75" rx="1"/>
<rect x="946.2" y="324.8" width="2.6" height="3.3" fill="#b9dcb9" opacity="0.75" rx="1"/>
<rect x="502.6" y="304.0" width="4.7" height="2.3" fill="#b9dcb9" opacity="0.75" rx="1"/>
<rect x="924.2" y="251.2" width="3.9" height="2.8" fill="#b9dcb9" opacity="0.75" rx="1"/>
<rect x="554.0" y="385.6" width="5.3" height="3.0" fill="#b9dcb9" opacity="0.75" rx="1"/>
<rect x="554.5" y="40.6" width="5.3" height="4.3" fill="#b9dcb9" opacity="0.75" rx="1"/>
<rect x="949.9" y="11.9" width="3.1" height="3.0" fill="#b9dcb9" opacity="0.75" rx="1"/>
<rect x="591.2" y="24.5" width="4.5" height="4.2" fill="#b9dcb9" opacity="0.75" rx="1"/>
<rect x="529.2" y="165.7" width="5.7" height="1.6" fill="#b9dcb9" opacity="0.75" rx="1"/>
<rect x="610.6" y="18.3" width="5.8" height="2.3" fill="#b9dcb9" opacity="0.75" rx="1"/>
<rect x="471.0" y="164.1" width="3.3" height="4.2" fill="#b9dcb9" opacity="0.75" rx="1"/>
<rect x="547.2" y="141.9" width="2.4" height="3.4" fill="#b9dcb9" opacity="0.75" rx="1"/>
<rect x="509.7" y="211.7" width="3.6" height="4.2" fill="#b9dcb9" opacity="0.75" rx="1"/>
<rect x="1096.9" y="172.2" width="1.7" height="3.4" fill="#b9dcb9" opacity="0.75" rx="1"/>
<rect x="635.3" y="338.6" width="3.1" height="1.7" fill="#b9dcb9" opacity="0.75" rx="1"/>
<rect x="839.5" y="399.2" width="5.4" height="4.2" fill="#b9dcb9" opacity="0.75" rx="1"/>
<rect x="976.0" y="38.9" width="3.1" height="3.9" fill="#b9dcb9" opacity="0.75" rx="1"/>
<rect x="529.9" y="271.0" width="5.7" height="2.9" fill="#b9dcb9" opacity="0.75" rx="1"/>
<rect x="756.4" y="39.4" width="5.0" height="2.2" fill="#b9dcb9" opacity="0.75" rx="1"/>
<rect x="491.0" y="131.8" width="3.0" height="1.5" fill="#b9dcb9" opacity="0.75" rx="1"/>
<rect x="1204.7" y="387.0" width="3.2" height="4.0" fill="#b9dcb9" opacity="0.75" rx="1"/>
<rect x="711.7" y="151.8" width="2.1" height="4.1" fill="#b9dcb9" opacity="0.75" rx="1"/>
<rect x="397.6" y="99.3" width="4.3" height="2.9" fill="#b9dcb9" opacity="0.75" rx="1"/>
<rect x="1100.3" y="286.2" width="3.2" height="4.4" fill="#b9dcb9" opacity="0.75" rx="1"/>
<rect x="946.0" y="196.5" width="4.6" height="2.3" fill="#b9dcb9" opacity="0.75" rx="1"/>
<rect x="533.3" y="303.3" width="2.7" height="4.1" fill="#b9dcb9" opacity="0.75" rx="1"/>
<rect x="434.9" y="116.8" width="4.9" height="1.7" fill="#b9dcb9" opacity="0.75" rx="1"/>
<rect x="600.7" y="307.9" width="3.9" height="3.8" fill="#b9dcb9" opacity="0.75" rx="1"/>
<rect x="1150.0" y="201.3" width="2.1" height="3.5" fill="#b9dcb9" opacity="0.75" rx="1"/>
<rect x="657.1" y="301.7" width="1.9" height="3.0" fill="#b9dcb9" opacity="0.75" rx="1"/>
<rect x="636.1" y="3.5" width="2.2" height="2.8" fill="#b9dcb9" opacity="0.75" rx="1"/>
<rect x="437.6" y="392.1" width="5.7" height="1.7" fill="#b9dcb9" opacity="0.75" rx="1"/>
<rect x="443.5" y="15.8" width="5.4" height="1.8" fill="#b9dcb9" opacity="0.75" rx="1"/>
<rect x="898.5" y="115.6" width="3.3" height="4.4" fill="#b9dcb9" opacity="0.75" rx="1"/>
<rect x="1039.5" y="334.1" width="4.3" height="3.3" fill="#b9dcb9" opacity="0.75" rx="1"/>
<rect x="733.1" y="354.9" width="4.6" height="3.2" fill="#b9dcb9" opacity="0.75" rx="1"/>
<rect x="464.6" y="324.0" width="5.3" height="3.2" fill="#b9dcb9" opacity="0.75" rx="1"/>
<rect x="658.6" y="218.3" width="2.6" height="3.6" fill="#b9dcb9" opacity="0.75" rx="1"/>
<rect x="907.7" y="216.2" width="3.8" height="1.6" fill="#b9dcb9" opacity="0.75" rx="1"/>
<rect x="1214.7" y="40.8" width="3.2" height="2.3" fill="#b9dcb9" opacity="0.75" rx="1"/>
<rect x="900.0" y="309.4" width="2.6" height="2.3" fill="#b9dcb9" opacity="0.75" rx="1"/>
<rect x="906.7" y="314.5" width="3.9" height="4.3" fill="#b9dcb9" opacity="0.75" rx="1"/>
<rect x="823.3" y="178.7" width="3.7" height="1.9" fill="#b9dcb9" opacity="0.75" rx="1"/>
<rect x="429.4" y="234.6" width="5.0" height="2.9" fill="#b9dcb9" opacity="0.75" rx="1"/>
<rect x="722.4" y="162.8" width="2.2" height="1.6" fill="#b9dcb9" opacity="0.75" rx="1"/>
<rect x="1126.1" y="22.7" width="2.6" height="2.3" fill="#b9dcb9" opacity="0.75" rx="1"/>
<rect x="1078.7" y="333.7" width="5.4" height="3.5" fill="#b9dcb9" opacity="0.75" rx="1"/>
<rect x="1125.8" y="225.7" width="5.3" height="2.7" fill="#b9dcb9" opacity="0.75" rx="1"/>
<rect x="825.2" y="379.1" width="3.2" height="2.5" fill="#b9dcb9" opacity="0.75" rx="1"/>
<rect x="476.3" y="265.9" width="5.5" height="2.5" fill="#b9dcb9" opacity="0.75" rx="1"/>
<rect x="1069.1" y="309.0" width="5.0" height="2.3" fill="#b9dcb9" opacity="0.75" rx="1"/>
<rect x="419.0" y="287.7" width="4.3" height="3.7" fill="#b9dcb9" opacity="0.75" rx="1"/>
<rect x="418.7" y="330.3" width="1.6" height="2.6" fill="#b9dcb9" opacity="0.75" rx="1"/>
<rect x="780.3" y="169.0" width="3.9" height="3.6" fill="#b9dcb9" opacity="0.75" rx="1"/>
<rect x="1104.6" y="400.7" width="2.8" height="2.5" fill="#b9dcb9" opacity="0.75" rx="1"/>
<rect x="801.6" y="256.2" width="5.6" height="3.9" fill="#b9dcb9" opacity="0.75" rx="1"/>
<rect x="953.8" y="70.8" width="2.0" height="4.2" fill="#b9dcb9" opacity="0.75" rx="1"/>
<rect x="1108.3" y="155.3" width="4.4" height="2.1" fill="#b9dcb9" opacity="0.75" rx="1"/>
<rect x="1072.9" y="176.5" width="5.6" height="4.3" fill="#b9dcb9" opacity="0.75" rx="1"/>
<rect x="1016.0" y="189.3" width="5.2" height="4.4" fill="#b9dcb9" opacity="0.75" rx="1"/>
<rect x="704.8" y="160.6" width="2.4" height="3.8" fill="#b9dcb9" opacity="0.75" rx="1"/>
<rect x="579.7" y="310.5" width="5.8" height="3.3" fill="#b9dcb9" opacity="0.75" rx="1"/>
<rect x="512.9" y="222.5" width="2.1" height="2.5" fill="#b9dcb9" opacity="0.75" rx="1"/>
<rect x="518.4" y="171.6" width="4.7" height="2.0" fill="#b9dcb9" opacity="0.75" rx="1"/>
<rect x="723.4" y="64.6" width="2.4" height="4.5" fill="#b9dcb9" opacity="0.75" rx="1"/>
<rect x="1183.2" y="303.0" width="2.2" height="3.2" fill="#b9dcb9" opacity="0.75" rx="1"/>
<rect x="895.3" y="244.3" width="5.7" height="1.6" fill="#b9dcb9" opacity="0.75" rx="1"/>
<rect x="648.7" y="190.4" width="2.3" height="3.5" fill="#b9dcb9" opacity="0.75" rx="1"/>
<rect x="639.0" y="4.4" width="2.5" height="2.9" fill="#b9dcb9" opacity="0.75" rx="1"/>
<rect x="1188.2" y="232.1" width="3.5" height="3.9" fill="#b9dcb9" opacity="0.75" rx="1"/>
<rect x="1113.7" y="140.5" width="4.8" height="4.2" fill="#b9dcb9" opacity="0.75" rx="1"/>
<rect x="946.1" y="374.9" width="3.9" height="3.5" fill="#b9dcb9" opacity="0.75" rx="1"/>
<rect x="831.4" y="287.1" width="2.2" height="1.9" fill="#b9dcb9" opacity="0.75" rx="1"/>
<rect x="653.0" y="166.3" width="3.7" height="4.5" fill="#b9dcb9" opacity="0.75" rx="1"/>
<rect x="929.6" y="311.1" width="4.5" height="2.6" fill="#b9dcb9" opacity="0.75" rx="1"/>
<rect x="974.8" y="332.5" width="2.4" height="2.1" fill="#b9dcb9" opacity="0.75" rx="1"/>
<rect x="1081.4" y="131.1" width="2.2" height="2.9" fill="#b9dcb9" opacity="0.75" rx="1"/>
<rect x="1205.0" y="24.5" width="5.5" height="3.2" fill="#b9dcb9" opacity="0.75" rx="1"/>
<rect x="756.9" y="250.2" width="1.6" height="2.6" fill="#b9dcb9" opacity="0.75" rx="1"/>
<rect x="837.4" y="245.1" width="5.6" height="4.3" fill="#b9dcb9" opacity="0.75" rx="1"/>
<rect x="1188.2" y="130.2" width="5.4" height="2.1" fill="#b9dcb9" opacity="0.75" rx="1"/>
<rect x="458.3" y="384.1" width="3.9" height="1.6" fill="#b9dcb9" opacity="0.75" rx="1"/>
<rect x="1149.2" y="25.8" width="4.9" height="2.5" fill="#b9dcb9" opacity="0.75" rx="1"/>
<rect x="1032.8" y="68.0" width="4.7" height="4.4" fill="#b9dcb9" opacity="0.75" rx="1"/>
<rect x="620.4" y="58.9" width="3.9" height="2.8" fill="#b9dcb9" opacity="0.75" rx="1"/>
<rect x="975.0" y="109.1" width="4.4" height="4.3" fill="#b9dcb9" opacity="0.75" rx="1"/>
<rect x="386.5" y="46.7" width="5.8" height="2.3" fill="#b9dcb9" opacity="0.75" rx="1"/>
<rect x="740.2" y="137.2" width="5.5" height="3.9" fill="#b9dcb9" opacity="0.75" rx="1"/>
<rect x="634.4" y="280.3" width="2.0" height="2.7" fill="#b9dcb9" opacity="0.75" rx="1"/>
<rect x="1050.0" y="205.4" width="3.9" height="2.7" fill="#b9dcb9" opacity="0.75" rx="1"/>
<rect x="977.7" y="21.0" width="1.7" height="3.2" fill="#b9dcb9" opacity="0.75" rx="1"/>
<rect x="794.9" y="191.3" width="5.3" height="2.7" fill="#b9dcb9" opacity="0.75" rx="1"/>
<rect x="860.2" y="324.9" width="3.0" height="3.5" fill="#b9dcb9" opacity="0.75" rx="1"/>
<rect x="660.6" y="396.8" width="5.2" height="2.8" fill="#b9dcb9" opacity="0.75" rx="1"/>
<rect x="994.5" y="105.3" width="1.9" height="2.4" fill="#b9dcb9" opacity="0.75" rx="1"/>
<rect x="1075.0" y="384.6" width="3.0" height="2.2" fill="#b9dcb9" opacity="0.75" rx="1"/>
<rect x="1265.3" y="386.0" width="4.5" height="1.8" fill="#b9dcb9" opacity="0.75" rx="1"/>
<rect x="1069.7" y="230.6" width="2.1" height="1.7" fill="#b9dcb9" opacity="0.75" rx="1"/>
<rect x="1163.1" y="145.9" width="4.1" height="3.7" fill="#b9dcb9" opacity="0.75" rx="1"/>
<rect x="1017.3" y="176.8" width="2.8" height="1.9" fill="#b9dcb9" opacity="0.75" rx="1"/>
<rect x="704.9" y="281.9" width="5.8" height="2.4" fill="#b9dcb9" opacity="0.75" rx="1"/>
<rect x="757.1" y="335.0" width="5.5" height="1.4" fill="#b9dcb9" opacity="0.75" rx="1"/>
<rect x="736.6" y="100.0" width="4.2" height="4.3" fill="#b9dcb9" opacity="0.75" rx="1"/>
<rect x="902.7" y="255.2" width="4.0" height="2.2" fill="#b9dcb9" opacity="0.75" rx="1"/>
<rect x="1045.6" y="240.6" width="1.9" height="3.3" fill="#b9dcb9" opacity="0.75" rx="1"/>
<rect x="536.7" y="316.8" width="4.8" height="4.2" fill="#b9dcb9" opacity="0.75" rx="1"/>
<rect x="951.8" y="21.6" width="5.4" height="3.7" fill="#b9dcb9" opacity="0.75" rx="1"/>
<rect x="1140.5" y="168.2" width="4.3" height="2.9" fill="#b9dcb9" opacity="0.75" rx="1"/>
<rect x="1241.2" y="260.7" width="3.5" height="1.4" fill="#b9dcb9" opacity="0.75" rx="1"/>
<rect x="533.3" y="110.2" width="3.6" height="4.1" fill="#b9dcb9" opacity="0.75" rx="1"/>
<rect x="1014.3" y="42.2" width="6.0" height="1.9" fill="#b9dcb9" opacity="0.75" rx="1"/>
<rect x="549.1" y="153.3" width="3.1" height="3.9" fill="#b9dcb9" opacity="0.75" rx="1"/>
<rect x="1052.7" y="139.6" width="2.3" height="2.8" fill="#b9dcb9" opacity="0.75" rx="1"/>
<rect x="600.2" y="22.4" width="5.4" height="2.6" fill="#b9dcb9" opacity="0.75" rx="1"/>
<rect x="1177.6" y="291.8" width="3.4" height="3.3" fill="#b9dcb9" opacity="0.75" rx="1"/>
<rect x="1118.1" y="323.3" width="5.2" height="2.7" fill="#b9dcb9" opacity="0.75" rx="1"/>
<rect x="948.1" y="312.4" width="4.4" height="3.1" fill="#b9dcb9" opacity="0.75" rx="1"/>
<rect x="502.6" y="310.5" width="2.4" height="2.8" fill="#b9dcb9" opacity="0.75" rx="1"/>
<rect x="541.0" y="283.9" width="3.8" height="3.7" fill="#b9dcb9" opacity="0.75" rx="1"/>
<rect x="970.2" y="88.3" width="2.8" height="2.6" fill="#b9dcb9" opacity="0.75" rx="1"/>
<rect x="400.5" y="20.5" width="2.1" height="2.6" fill="#b9dcb9" opacity="0.75" rx="1"/>
<rect x="1177.5" y="41.9" width="1.8" height="2.5" fill="#b9dcb9" opacity="0.75" rx="1"/>
<rect x="858.5" y="18.0" width="4.0" height="2.8" fill="#b9dcb9" opacity="0.75" rx="1"/>
<rect x="557.2" y="86.3" width="3.6" height="3.8" fill="#b9dcb9" opacity="0.75" rx="1"/>
<rect x="984.0" y="299.5" width="4.6" height="1.4" fill="#b9dcb9" opacity="0.75" rx="1"/>
<rect x="1105.5" y="16.6" width="2.2" height="2.9" fill="#b9dcb9" opacity="0.75" rx="1"/>
<rect x="428.4" y="305.7" width="4.2" height="4.4" fill="#b9dcb9" opacity="0.75" rx="1"/>
<rect x="1117.2" y="277.5" width="3.0" height="2.2" fill="#b9dcb9" opacity="0.75" rx="1"/>
<rect x="1248.5" y="213.4" width="6.0" height="1.9" fill="#b9dcb9" opacity="0.75" rx="1"/>
<rect x="1083.3" y="358.9" width="1.8" height="3.2" fill="#b9dcb9" opacity="0.75" rx="1"/>
<rect x="893.6" y="239.2" width="4.6" height="2.0" fill="#b9dcb9" opacity="0.75" rx="1"/>
<rect x="1191.8" y="338.2" width="1.9" height="3.1" fill="#b9dcb9" opacity="0.75" rx="1"/>
<rect x="1130.4" y="361.7" width="2.6" height="1.7" fill="#b9dcb9" opacity="0.75" rx="1"/>
<rect x="1000.6" y="262.5" width="3.5" height="4.2" fill="#b9dcb9" opacity="0.75" rx="1"/>
<rect x="477.9" y="345.7" width="5.9" height="1.4" fill="#b9dcb9" opacity="0.75" rx="1"/>
<rect x="1249.9" y="372.7" width="4.9" height="3.7" fill="#b9dcb9" opacity="0.75" rx="1"/>
<rect x="1202.0" y="311.4" width="1.7" height="3.8" fill="#b9dcb9" opacity="0.75" rx="1"/>
<rect x="803.2" y="146.3" width="2.3" height="3.4" fill="#b9dcb9" opacity="0.75" rx="1"/>
<rect x="1046.8" y="388.0" width="5.4" height="1.4" fill="#b9dcb9" opacity="0.75" rx="1"/>
<rect x="438.5" y="338.2" width="3.4" height="1.8" fill="#b9dcb9" opacity="0.75" rx="1"/>
<rect x="846.1" y="26.2" width="3.2" height="3.4" fill="#b9dcb9" opacity="0.75" rx="1"/>
<rect x="721.7" y="138.7" width="5.2" height="4.4" fill="#b9dcb9" opacity="0.75" rx="1"/>
<rect x="1124.6" y="138.2" width="3.5" height="4.2" fill="#b9dcb9" opacity="0.75" rx="1"/>
<rect x="904.1" y="8.8" width="2.9" height="2.7" fill="#b9dcb9" opacity="0.75" rx="1"/>
<rect x="768.6" y="323.0" width="4.7" height="3.6" fill="#b9dcb9" opacity="0.75" rx="1"/>
<rect x="877.4" y="261.8" width="1.7" height="2.3" fill="#b9dcb9" opacity="0.75" rx="1"/>
<rect x="407.0" y="324.9" width="1.8" height="2.0" fill="#b9dcb9" opacity="0.75" rx="1"/>
<rect x="506.1" y="116.5" width="5.7" height="3.6" fill="#b9dcb9" opacity="0.75" rx="1"/>
<rect x="982.8" y="324.2" width="2.2" height="1.9" fill="#b9dcb9" opacity="0.75" rx="1"/>
<rect x="1057.3" y="308.0" width="4.4" height="2.4" fill="#b9dcb9" opacity="0.75" rx="1"/>
<rect x="500.4" y="235.1" width="4.3" height="1.3" fill="#b9dcb9" opacity="0.75" rx="1"/>
<rect x="1236.4" y="247.7" width="2.0" height="2.7" fill="#b9dcb9" opacity="0.75" rx="1"/>
<rect x="1149.6" y="99.3" width="4.6" height="1.4" fill="#b9dcb9" opacity="0.75" rx="1"/>
<rect x="450.6" y="148.5" width="2.3" height="3.8" fill="#b9dcb9" opacity="0.75" rx="1"/>
<rect x="806.1" y="73.8" width="5.6" height="3.6" fill="#b9dcb9" opacity="0.75" rx="1"/>
<rect x="529.3" y="98.0" width="5.8" height="1.8" fill="#b9dcb9" opacity="0.75" rx="1"/>
<rect x="425.5" y="156.4" width="5.4" height="3.7" fill="#b9dcb9" opacity="0.75" rx="1"/>
<rect x="383.5" y="71.4" width="3.7" height="3.0" fill="#b9dcb9" opacity="0.75" rx="1"/>
<rect x="970.1" y="93.7" width="4.4" height="1.9" fill="#b9dcb9" opacity="0.75" rx="1"/>
<rect x="552.5" y="68.9" width="5.8" height="3.5" fill="#b9dcb9" opacity="0.75" rx="1"/>
<rect x="687.6" y="305.9" width="4.1" height="2.8" fill="#b9dcb9" opacity="0.75" rx="1"/>
<rect x="414.4" y="255.3" width="2.8" height="2.7" fill="#b9dcb9" opacity="0.75" rx="1"/>
<rect x="722.3" y="86.4" width="4.5" height="3.4" fill="#b9dcb9" opacity="0.75" rx="1"/>
<rect x="1051.1" y="228.4" width="4.9" height="1.7" fill="#b9dcb9" opacity="0.75" rx="1"/>
<rect x="512.0" y="11.4" width="5.4" height="4.4" fill="#b9dcb9" opacity="0.75" rx="1"/>
<rect x="735.6" y="55.8" width="3.1" height="3.2" fill="#b9dcb9" opacity="0.75" rx="1"/>
<rect x="816.1" y="239.4" width="1.6" height="3.4" fill="#b9dcb9" opacity="0.75" rx="1"/>
<rect x="397.7" y="386.4" width="5.0" height="2.1" fill="#b9dcb9" opacity="0.75" rx="1"/>
<rect x="506.0" y="372.9" width="2.2" height="2.3" fill="#b9dcb9" opacity="0.75" rx="1"/>
<rect x="562.9" y="357.5" width="5.7" height="3.3" fill="#b9dcb9" opacity="0.75" rx="1"/>
<rect x="989.6" y="174.8" width="4.0" height="1.9" fill="#b9dcb9" opacity="0.75" rx="1"/>
<rect x="1174.2" y="349.3" width="3.6" height="3.2" fill="#b9dcb9" opacity="0.75" rx="1"/>
<rect x="796.2" y="352.8" width="2.7" height="1.4" fill="#b9dcb9" opacity="0.75" rx="1"/>
<rect x="534.7" y="376.4" width="4.4" height="1.3" fill="#b9dcb9" opacity="0.75" rx="1"/>
<rect x="466.7" y="73.7" width="4.5" height="3.9" fill="#b9dcb9" opacity="0.75" rx="1"/>
<rect x="1010.1" y="348.6" width="4.2" height="3.0" fill="#b9dcb9" opacity="0.75" rx="1"/>
<rect x="919.9" y="354.8" width="3.6" height="2.3" fill="#b9dcb9" opacity="0.75" rx="1"/>
<rect x="744.6" y="154.6" width="5.1" height="4.3" fill="#b9dcb9" opacity="0.75" rx="1"/>
<rect x="1212.0" y="113.7" width="3.2" height="4.0" fill="#b9dcb9" opacity="0.75" rx="1"/>
<rect x="673.2" y="209.3" width="3.0" height="1.4" fill="#b9dcb9" opacity="0.75" rx="1"/>
<rect x="561.9" y="364.2" width="5.4" height="1.2" fill="#b9dcb9" opacity="0.75" rx="1"/>
<rect x="849.0" y="389.0" width="3.4" height="2.0" fill="#b9dcb9" opacity="0.75" rx="1"/>
<rect x="745.1" y="116.7" width="5.9" height="1.5" fill="#b9dcb9" opacity="0.75" rx="1"/>
<rect x="761.2" y="282.7" width="4.4" height="3.5" fill="#b9dcb9" opacity="0.75" rx="1"/>
<rect x="783.1" y="73.6" width="2.1" height="1.6" fill="#b9dcb9" opacity="0.75" rx="1"/>
<rect x="409.5" y="72.8" width="4.7" height="2.2" fill="#b9dcb9" opacity="0.75" rx="1"/>
<rect x="887.6" y="91.6" width="1.5" height="2.5" fill="#b9dcb9" opacity="0.75" rx="1"/>
<rect x="653.4" y="273.3" width="4.5" height="3.0" fill="#b9dcb9" opacity="0.75" rx="1"/>
<rect x="398.4" y="315.4" width="4.5" height="2.2" fill="#b9dcb9" opacity="0.75" rx="1"/>
<rect x="393.3" y="308.1" width="2.8" height="4.4" fill="#b9dcb9" opacity="0.75" rx="1"/>
<rect x="770.7" y="48.5" width="3.9" height="1.4" fill="#b9dcb9" opacity="0.75" rx="1"/>
<rect x="1146.3" y="226.6" width="4.2" height="4.0" fill="#b9dcb9" opacity="0.75" rx="1"/>
<rect x="395.5" y="360.6" width="3.1" height="2.6" fill="#b9dcb9" opacity="0.75" rx="1"/>
<rect x="657.8" y="124.1" width="5.6" height="3.0" fill="#b9dcb9" opacity="0.75" rx="1"/>
<rect x="476.4" y="115.9" width="2.3" height="3.7" fill="#b9dcb9" opacity="0.75" rx="1"/>
<rect x="534.8" y="335.4" width="4.1" height="2.3" fill="#b9dcb9" opacity="0.75" rx="1"/>
<rect x="1135.5" y="328.7" width="2.5" height="2.9" fill="#b9dcb9" opacity="0.75" rx="1"/>
<rect x="1234.7" y="3.8" width="1.6" height="3.0" fill="#b9dcb9" opacity="0.75" rx="1"/>
<rect x="1087.6" y="214.1" width="4.9" height="2.7" fill="#b9dcb9" opacity="0.75" rx="1"/>
<rect x="425.9" y="111.1" width="3.0" height="1.8" fill="#b9dcb9" opacity="0.75" rx="1"/>
<rect x="415.6" y="272.8" width="2.3" height="2.4" fill="#b9dcb9" opacity="0.75" rx="1"/>
<rect x="1106.6" y="40.7" width="5.5" height="4.2" fill="#b9dcb9" opacity="0.75" rx="1"/>
<rect x="490.3" y="188.7" width="4.0" height="4.0" fill="#b9dcb9" opacity="0.75" rx="1"/>
<rect x="647.6" y="16.9" width="3.8" height="1.8" fill="#b9dcb9" opacity="0.75" rx="1"/>
<rect x="796.1" y="297.9" width="5.3" height="2.3" fill="#b9dcb9" opacity="0.75" rx="1"/>
<rect x="652.3" y="337.2" width="4.9" height="3.6" fill="#b9dcb9" opacity="0.75" rx="1"/>
<rect x="720.9" y="185.8" width="4.5" height="1.5" fill="#b9dcb9" opacity="0.75" rx="1"/>
<rect x="735.9" y="244.5" width="5.5" height="2.3" fill="#b9dcb9" opacity="0.75" rx="1"/>
<rect x="1280.0" y="218.6" width="3.1" height="1.6" fill="#b9dcb9" opacity="0.75" rx="1"/>
<rect x="833.4" y="258.0" width="4.3" height="2.2" fill="#b9dcb9" opacity="0.75" rx="1"/>
<rect x="514.1" y="381.1" width="6.0" height="2.3" fill="#b9dcb9" opacity="0.75" rx="1"/>
<rect x="937.8" y="256.0" width="2.7" height="2.1" fill="#b9dcb9" opacity="0.75" rx="1"/>
<rect x="447.1" y="230.6" width="2.1" height="3.0" fill="#b9dcb9" opacity="0.75" rx="1"/>
<rect x="762.9" y="71.8" width="4.5" height="4.2" fill="#b9dcb9" opacity="0.75" rx="1"/>
<rect x="930.9" y="275.4" width="5.6" height="2.1" fill="#b9dcb9" opacity="0.75" rx="1"/>
<rect x="1173.7" y="116.7" width="3.8" height="3.4" fill="#b9dcb9" opacity="0.75" rx="1"/>
<rect x="1016.3" y="359.4" width="2.1" height="2.9" fill="#b9dcb9" opacity="0.75" rx="1"/>
<rect x="963.7" y="144.5" width="4.4" height="4.1" fill="#b9dcb9" opacity="0.75" rx="1"/>
<rect x="1200.0" y="148.8" width="5.5" height="3.5" fill="#b9dcb9" opacity="0.75" rx="1"/>
<rect x="693.0" y="32.4" width="4.1" height="2.2" fill="#b9dcb9" opacity="0.75" rx="1"/>
<rect x="1214.4" y="396.3" width="3.4" height="3.2" fill="#b9dcb9" opacity="0.75" rx="1"/>
<rect x="676.7" y="86.2" width="3.8" height="4.4" fill="#b9dcb9" opacity="0.75" rx="1"/>
<rect x="1171.3" y="290.2" width="4.4" height="2.1" fill="#b9dcb9" opacity="0.75" rx="1"/>
<rect x="573.0" y="315.7" width="3.9" height="3.3" fill="#b9dcb9" opacity="0.75" rx="1"/>
<rect x="1099.7" y="102.8" width="2.8" height="3.1" fill="#b9dcb9" opacity="0.75" rx="1"/>
<rect x="674.7" y="211.3" width="3.4" height="3.8" fill="#b9dcb9" opacity="0.75" rx="1"/>
<rect x="1111.1" y="126.2" width="4.0" height="3.8" fill="#b9dcb9" opacity="0.75" rx="1"/>
<rect x="999.3" y="367.5" width="5.8" height="3.6" fill="#b9dcb9" opacity="0.75" rx="1"/>
<rect x="1086.1" y="87.4" width="3.3" height="2.8" fill="#b9dcb9" opacity="0.75" rx="1"/>
<rect x="497.6" y="214.1" width="3.2" height="1.5" fill="#b9dcb9" opacity="0.75" rx="1"/>
<rect x="1174.4" y="221.8" width="4.2" height="1.9" fill="#b9dcb9" opacity="0.75" rx="1"/>
<rect x="784.9" y="118.4" width="5.0" height="1.4" fill="#b9dcb9" opacity="0.75" rx="1"/>
<rect x="845.5" y="336.0" width="4.6" height="1.7" fill="#b9dcb9" opacity="0.75" rx="1"/>
<rect x="738.3" y="116.2" width="4.0" height="2.5" fill="#b9dcb9" opacity="0.75" rx="1"/>
<rect x="407.1" y="175.5" width="4.0" height="3.3" fill="#b9dcb9" opacity="0.75" rx="1"/>
<rect x="561.4" y="55.4" width="2.7" height="1.5" fill="#b9dcb9" opacity="0.75" rx="1"/>
<rect x="730.0" y="266.3" width="2.9" height="3.3" fill="#b9dcb9" opacity="0.75" rx="1"/>
<rect x="862.0" y="111.4" width="4.5" height="3.8" fill="#b9dcb9" opacity="0.75" rx="1"/>
<rect x="1261.1" y="201.6" width="2.9" height="2.8" fill="#b9dcb9" opacity="0.75" rx="1"/>
<rect x="1120.0" y="262.3" width="3.6" height="1.5" fill="#b9dcb9" opacity="0.75" rx="1"/>
<rect x="1101.7" y="226.9" width="2.8" height="2.9" fill="#b9dcb9" opacity="0.75" rx="1"/>
<rect x="885.4" y="66.5" width="6.0" height="3.8" fill="#b9dcb9" opacity="0.75" rx="1"/>
<rect x="646.7" y="104.9" width="5.8" height="2.6" fill="#b9dcb9" opacity="0.75" rx="1"/>
<rect x="671.2" y="329.4" width="2.2" height="1.7" fill="#b9dcb9" opacity="0.75" rx="1"/>
<rect x="831.5" y="17.7" width="5.2" height="4.0" fill="#b9dcb9" opacity="0.75" rx="1"/>
<rect x="947.7" y="397.2" width="4.1" height="2.2" fill="#b9dcb9" opacity="0.75" rx="1"/>
<rect x="470.8" y="162.8" width="3.2" height="2.7" fill="#b9dcb9" opacity="0.75" rx="1"/>
<rect x="663.9" y="249.0" width="3.7" height="2.0" fill="#b9dcb9" opacity="0.75" rx="1"/>
<rect x="771.3" y="161.9" width="2.7" height="3.0" fill="#b9dcb9" opacity="0.75" rx="1"/>
<rect x="425.4" y="91.1" width="3.4" height="3.4" fill="#b9dcb9" opacity="0.75" rx="1"/>
<rect x="480.8" y="302.2" width="4.5" height="4.4" fill="#b9dcb9" opacity="0.75" rx="1"/>
<rect x="817.3" y="93.1" width="5.3" height="2.0" fill="#b9dcb9" opacity="0.75" rx="1"/>
<rect x="612.5" y="119.1" width="4.9" height="1.2" fill="#b9dcb9" opacity="0.75" rx="1"/>
<rect x="644.4" y="284.2" width="5.3" height="2.2" fill="#b9dcb9" opacity="0.75" rx="1"/>
<rect x="974.3" y="177.9" width="3.5" height="2.4" fill="#b9dcb9" opacity="0.75" rx="1"/>
<rect x="1137.2" y="106.5" width="4.2" height="3.6" fill="#b9dcb9" opacity="0.75" rx="1"/>
<rect x="1176.1" y="207.2" width="2.8" height="3.7" fill="#b9dcb9" opacity="0.75" rx="1"/>
<rect x="392.1" y="20.4" width="1.8" height="2.2" fill="#b9dcb9" opacity="0.75" rx="1"/>
<rect x="1147.5" y="98.0" width="5.7" height="3.6" fill="#b9dcb9" opacity="0.75" rx="1"/>
<rect x="1005.8" y="391.0" width="3.7" height="4.3" fill="#b9dcb9" opacity="0.75" rx="1"/>
<rect x="464.4" y="108.7" width="5.1" height="3.3" fill="#b9dcb9" opacity="0.75" rx="1"/>
<rect x="1041.2" y="73.4" width="3.9" height="2.2" fill="#b9dcb9" opacity="0.75" rx="1"/>
<rect x="436.7" y="308.0" width="2.9" height="1.6" fill="#b9dcb9" opacity="0.75" rx="1"/>
<rect x="878.5" y="190.0" width="2.1" height="3.4" fill="#b9dcb9" opacity="0.75" rx="1"/>
<rect x="1077.3" y="373.6" width="4.3" height="3.3" fill="#b9dcb9" opacity="0.75" rx="1"/>
<rect x="845.4" y="91.4" width="4.8" height="3.9" fill="#b9dcb9" opacity="0.75" rx="1"/>
<rect x="581.2" y="223.6" width="2.7" height="4.4" fill="#b9dcb9" opacity="0.75" rx="1"/>
<rect x="737.2" y="382.7" width="5.5" height="3.4" fill="#b9dcb9" opacity="0.75" rx="1"/>
<rect x="404.6" y="3.9" width="3.5" height="2.9" fill="#b9dcb9" opacity="0.75" rx="1"/>
<rect x="1085.2" y="261.4" width="3.4" height="1.5" fill="#b9dcb9" opacity="0.75" rx="1"/>
<rect x="1162.8" y="51.8" width="2.0" height="2.2" fill="#b9dcb9" opacity="0.75" rx="1"/>
<rect x="581.3" y="397.2" width="2.1" height="3.7" fill="#b9dcb9" opacity="0.75" rx="1"/>
<rect x="902.8" y="300.2" width="2.4" height="4.4" fill="#b9dcb9" opacity="0.75" rx="1"/>
<rect x="590.8" y="384.9" width="5.8" height="1.2" fill="#b9dcb9" opacity="0.75" rx="1"/>
<rect x="930.6" y="220.2" width="3.9" height="2.4" fill="#b9dcb9" opacity="0.75" rx="1"/>
<rect x="720.0" y="62.0" width="2.2" height="3.8" fill="#b9dcb9" opacity="0.75" rx="1"/>
<rect x="465.6" y="283.7" width="3.2" height="3.8" fill="#b9dcb9" opacity="0.75" rx="1"/>
<rect x="687.8" y="399.2" width="4.4" height="2.6" fill="#b9dcb9" opacity="0.75" rx="1"/>
<rect x="443.2" y="132.8" width="1.9" height="3.9" fill="#b9dcb9" opacity="0.75" rx="1"/>
<rect x="1169.8" y="386.4" width="5.8" height="1.4" fill="#b9dcb9" opacity="0.75" rx="1"/>
<rect x="815.5" y="29.6" width="4.7" height="1.2" fill="#b9dcb9" opacity="0.75" rx="1"/>
<rect x="510.8" y="191.8" width="2.0" height="1.3" fill="#b9dcb9" opacity="0.75" rx="1"/>
<rect x="1114.6" y="304.8" width="1.6" height="2.8" fill="#b9dcb9" opacity="0.75" rx="1"/>
<rect x="1023.4" y="276.7" width="5.0" height="4.0" fill="#b9dcb9" opacity="0.75" rx="1"/>
<rect x="950.8" y="206.8" width="2.6" height="1.3" fill="#b9dcb9" opacity="0.75" rx="1"/>
<rect x="591.2" y="141.1" width="1.6" height="4.3" fill="#b9dcb9" opacity="0.75" rx="1"/>
<rect x="785.6" y="59.2" width="2.3" height="2.2" fill="#b9dcb9" opacity="0.75" rx="1"/>
<rect x="621.9" y="42.8" width="4.3" height="2.1" fill="#b9dcb9" opacity="0.75" rx="1"/>
<rect x="1004.2" y="57.8" width="5.7" height="3.6" fill="#b9dcb9" opacity="0.75" rx="1"/>
<rect x="743.6" y="188.2" width="4.3" height="4.4" fill="#b9dcb9" opacity="0.75" rx="1"/>
<rect x="1096.3" y="211.0" width="2.8" height="3.5" fill="#b9dcb9" opacity="0.75" rx="1"/>
<rect x="675.3" y="173.7" width="2.1" height="3.0" fill="#b9dcb9" opacity="0.75" rx="1"/>
<rect x="585.5" y="148.6" width="1.9" height="1.7" fill="#b9dcb9" opacity="0.75" rx="1"/>
<rect x="544.8" y="13.9" width="4.7" height="1.5" fill="#b9dcb9" opacity="0.75" rx="1"/>
<rect x="454.6" y="399.0" width="4.0" height="3.7" fill="#b9dcb9" opacity="0.75" rx="1"/>
<rect x="894.3" y="385.1" width="3.7" height="3.2" fill="#b9dcb9" opacity="0.75" rx="1"/>
<rect x="533.5" y="321.1" width="2.1" height="2.3" fill="#b9dcb9" opacity="0.75" rx="1"/>
<rect x="1210.0" y="130.3" width="2.6" height="2.6" fill="#b9dcb9" opacity="0.75" rx="1"/>
<rect x="581.6" y="194.1" width="1.7" height="1.4" fill="#b9dcb9" opacity="0.75" rx="1"/>
<rect x="876.1" y="107.1" width="1.6" height="2.6" fill="#b9dcb9" opacity="0.75" rx="1"/>
<rect x="1277.7" y="90.8" width="5.8" height="2.5" fill="#b9dcb9" opacity="0.75" rx="1"/>
<rect x="1027.8" y="295.1" width="3.7" height="3.9" fill="#b9dcb9" opacity="0.75" rx="1"/>
<rect x="1149.9" y="73.8" width="4.1" height="4.4" fill="#b9dcb9" opacity="0.75" rx="1"/>
<rect x="891.1" y="189.1" width="3.2" height="2.6" fill="#b9dcb9" opacity="0.75" rx="1"/>
<rect x="786.0" y="83.8" width="2.4" height="1.8" fill="#b9dcb9" opacity="0.75" rx="1"/>
<rect x="684.0" y="92.5" width="4.9" height="2.2" fill="#b9dcb9" opacity="0.75" rx="1"/>
<rect x="985.5" y="376.9" width="5.6" height="3.5" fill="#b9dcb9" opacity="0.75" rx="1"/>
<rect x="1210.2" y="239.6" width="5.9" height="1.8" fill="#b9dcb9" opacity="0.75" rx="1"/>
<rect x="1173.5" y="277.7" width="4.1" height="2.5" fill="#b9dcb9" opacity="0.75" rx="1"/>
<rect x="905.2" y="400.1" width="4.8" height="2.8" fill="#b9dcb9" opacity="0.75" rx="1"/>
<rect x="1232.8" y="328.3" width="2.4" height="3.8" fill="#b9dcb9" opacity="0.75" rx="1"/>
<rect x="475.0" y="364.2" width="2.3" height="4.3" fill="#b9dcb9" opacity="0.75" rx="1"/>
<rect x="747.7" y="101.3" width="2.3" height="3.7" fill="#b9dcb9" opacity="0.75" rx="1"/>
<rect x="467.1" y="43.7" width="5.6" height="3.3" fill="#b9dcb9" opacity="0.75" rx="1"/>
<rect x="922.5" y="315.5" width="4.1" height="2.4" fill="#b9dcb9" opacity="0.75" rx="1"/>
<rect x="803.0" y="355.4" width="1.6" height="2.4" fill="#b9dcb9" opacity="0.75" rx="1"/>
<rect x="1052.8" y="49.8" width="3.8" height="1.7" fill="#b9dcb9" opacity="0.75" rx="1"/>
<rect x="619.2" y="299.5" width="4.6" height="2.1" fill="#b9dcb9" opacity="0.75" rx="1"/>
<rect x="733.1" y="80.8" width="1.8" height="4.3" fill="#b9dcb9" opacity="0.75" rx="1"/>
<rect x="1207.8" y="390.3" width="2.5" height="1.6" fill="#b9dcb9" opacity="0.75" rx="1"/>
<rect x="1101.0" y="239.1" width="5.0" height="2.6" fill="#b9dcb9" opacity="0.75" rx="1"/>
<rect x="1244.3" y="232.1" width="4.9" height="2.2" fill="#b9dcb9" opacity="0.75" rx="1"/>
<rect x="581.1" y="282.9" width="4.8" height="4.2" fill="#b9dcb9" opacity="0.75" rx="1"/>
<rect x="705.3" y="99.7" width="2.9" height="1.8" fill="#b9dcb9" opacity="0.75" rx="1"/>
<rect x="556.4" y="75.7" width="5.5" height="4.2" fill="#b9dcb9" opacity="0.75" rx="1"/>
<rect x="1013.6" y="5.4" width="5.8" height="4.2" fill="#b9dcb9" opacity="0.75" rx="1"/>
<rect x="571.3" y="153.8" width="2.9" height="3.0" fill="#b9dcb9" opacity="0.75" rx="1"/>
<rect x="811.8" y="271.1" width="4.4" height="4.5" fill="#b9dcb9" opacity="0.75" rx="1"/>
<rect x="1026.3" y="130.9" width="4.3" height="2.4" fill="#b9dcb9" opacity="0.75" rx="1"/>
<rect x="977.0" y="194.1" width="4.9" height="3.3" fill="#b9dcb9" opacity="0.75" rx="1"/>
<rect x="913.6" y="104.0" width="2.8" height="4.4" fill="#b9dcb9" opacity="0.75" rx="1"/>
<rect x="458.1" y="400.9" width="2.5" height="1.3" fill="#b9dcb9" opacity="0.75" rx="1"/>
<rect x="476.9" y="320.6" width="2.7" height="3.4" fill="#b9dcb9" opacity="0.75" rx="1"/>
<rect x="466.0" y="386.9" width="5.5" height="2.8" fill="#b9dcb9" opacity="0.75" rx="1"/>
<rect x="1081.1" y="394.2" width="2.4" height="2.6" fill="#b9dcb9" opacity="0.75" rx="1"/>
<rect x="475.3" y="57.6" width="3.1" height="2.8" fill="#b9dcb9" opacity="0.75" rx="1"/>
<rect x="1066.7" y="321.5" width="4.5" height="1.9" fill="#b9dcb9" opacity="0.75" rx="1"/>
<rect x="574.5" y="86.6" width="2.7" height="3.1" fill="#b9dcb9" opacity="0.75" rx="1"/>
<rect x="904.5" y="145.9" width="5.6" height="2.4" fill="#b9dcb9" opacity="0.75" rx="1"/>
<rect x="631.0" y="131.4" width="4.1" height="3.6" fill="#b9dcb9" opacity="0.75" rx="1"/>
<rect x="1127.5" y="233.8" width="1.7" height="4.3" fill="#b9dcb9" opacity="0.75" rx="1"/>
<rect x="1130.1" y="29.5" width="2.0" height="3.4" fill="#b9dcb9" opacity="0.75" rx="1"/>
<rect x="686.0" y="333.2" width="5.0" height="1.8" fill="#b9dcb9" opacity="0.75" rx="1"/>
<rect x="934.0" y="379.3" width="2.2" height="2.0" fill="#b9dcb9" opacity="0.75" rx="1"/>
<rect x="1025.3" y="246.1" width="3.2" height="3.8" fill="#b9dcb9" opacity="0.75" rx="1"/>
<rect x="466.7" y="332.2" width="5.9" height="2.9" fill="#b9dcb9" opacity="0.75" rx="1"/>
<rect x="1194.1" y="117.6" width="3.8" height="2.6" fill="#b9dcb9" opacity="0.75" rx="1"/>
<rect x="894.9" y="140.1" width="6.0" height="4.1" fill="#b9dcb9" opacity="0.75" rx="1"/>
<rect x="418.4" y="387.6" width="3.6" height="3.6" fill="#b9dcb9" opacity="0.75" rx="1"/>
<rect x="717.2" y="35.2" width="4.9" height="2.9" fill="#b9dcb9" opacity="0.75" rx="1"/>
<rect x="622.8" y="52.4" width="5.1" height="1.9" fill="#b9dcb9" opacity="0.75" rx="1"/>
<rect x="607.0" y="372.9" width="4.2" height="4.0" fill="#b9dcb9" opacity="0.75" rx="1"/>
<rect x="1271.4" y="2.3" width="2.2" height="3.4" fill="#b9dcb9" opacity="0.75" rx="1"/>
<rect x="935.3" y="3.3" width="5.9" height="4.5" fill="#b9dcb9" opacity="0.75" rx="1"/>
<rect x="481.4" y="240.5" width="4.5" height="4.5" fill="#b9dcb9" opacity="0.75" rx="1"/>
<rect x="392.3" y="159.1" width="2.4" height="3.0" fill="#b9dcb9" opacity="0.75" rx="1"/>
<rect x="911.6" y="253.8" width="4.4" height="2.5" fill="#b9dcb9" opacity="0.75" rx="1"/>
<rect x="500.9" y="48.1" width="2.1" height="4.5" fill="#b9dcb9" opacity="0.75" rx="1"/>
<rect x="990.6" y="137.6" width="5.7" height="1.4" fill="#b9dcb9" opacity="0.75" rx="1"/>
<rect x="879.2" y="298.1" width="3.1" height="4.1" fill="#b9dcb9" opacity="0.75" rx="1"/>
<rect x="965.8" y="302.7" width="2.1" height="3.0" fill="#b9dcb9" opacity="0.75" rx="1"/>
<rect x="700.9" y="389.9" width="5.5" height="4.0" fill="#b9dcb9" opacity="0.75" rx="1"/>
<rect x="700.4" y="223.0" width="3.9" height="3.7" fill="#b9dcb9" opacity="0.75" rx="1"/>
<rect x="1095.6" y="292.5" width="1.7" height="2.0" fill="#b9dcb9" opacity="0.75" rx="1"/>
<rect x="1181.9" y="300.2" width="3.0" height="1.5" fill="#b9dcb9" opacity="0.75" rx="1"/>
<rect x="1236.8" y="254.3" width="4.6" height="2.6" fill="#b9dcb9" opacity="0.75" rx="1"/>
<rect x="900.9" y="129.9" width="3.6" height="4.4" fill="#b9dcb9" opacity="0.75" rx="1"/>
<rect x="441.6" y="6.5" width="5.2" height="4.2" fill="#b9dcb9" opacity="0.75" rx="1"/>
<rect x="416.6" y="279.5" width="1.6" height="1.8" fill="#b9dcb9" opacity="0.75" rx="1"/>
<rect x="459.7" y="337.0" width="2.2" height="1.3" fill="#b9dcb9" opacity="0.75" rx="1"/>
<rect x="1139.5" y="320.9" width="1.8" height="2.0" fill="#b9dcb9" opacity="0.75" rx="1"/>
<rect x="749.6" y="184.6" width="2.0" height="2.2" fill="#b9dcb9" opacity="0.75" rx="1"/>
<rect x="1044.8" y="357.1" width="4.3" height="2.1" fill="#b9dcb9" opacity="0.75" rx="1"/>
<rect x="1197.4" y="160.7" width="2.1" height="3.7" fill="#b9dcb9" opacity="0.75" rx="1"/>
<rect x="918.6" y="16.3" width="3.1" height="2.1" fill="#b9dcb9" opacity="0.75" rx="1"/>
<rect x="1104.4" y="92.8" width="2.7" height="2.5" fill="#b9dcb9" opacity="0.75" rx="1"/>
<rect x="493.3" y="361.3" width="2.8" height="1.6" fill="#b9dcb9" opacity="0.75" rx="1"/>
<rect x="505.3" y="217.8" width="4.8" height="2.4" fill="#b9dcb9" opacity="0.75" rx="1"/>
<rect x="600.5" y="181.1" width="4.9" height="2.6" fill="#b9dcb9" opacity="0.75" rx="1"/>
<rect x="716.9" y="309.4" width="4.8" height="3.4" fill="#b9dcb9" opacity="0.75" rx="1"/>
<rect x="671.6" y="168.8" width="5.7" height="4.2" fill="#b9dcb9" opacity="0.75" rx="1"/>
<rect x="1212.2" y="150.0" width="4.9" height="3.4" fill="#b9dcb9" opacity="0.75" rx="1"/>
<rect x="1124.7" y="334.0" width="4.7" height="4.3" fill="#b9dcb9" opacity="0.75" rx="1"/>
<rect x="488.6" y="4.3" width="1.8" height="2.3" fill="#b9dcb9" opacity="0.75" rx="1"/>
<rect x="624.0" y="110.8" width="3.3" height="3.5" fill="#b9dcb9" opacity="0.75" rx="1"/>
<rect x="945.0" y="144.3" width="3.3" height="2.8" fill="#b9dcb9" opacity="0.75" rx="1"/>
<rect x="1181.4" y="6.1" width="4.5" height="2.0" fill="#b9dcb9" opacity="0.75" rx="1"/>
<rect x="757.3" y="93.3" width="4.2" height="3.6" fill="#b9dcb9" opacity="0.75" rx="1"/>
<rect x="658.7" y="160.3" width="1.6" height="3.3" fill="#b9dcb9" opacity="0.75" rx="1"/>
<rect x="478.1" y="101.9" width="2.8" height="3.9" fill="#b9dcb9" opacity="0.75" rx="1"/>
<rect x="922.1" y="283.4" width="1.8" height="2.6" fill="#b9dcb9" opacity="0.75" rx="1"/>
<rect x="987.9" y="14.8" width="2.4" height="2.0" fill="#b9dcb9" opacity="0.75" rx="1"/>
<rect x="1194.5" y="231.9" width="3.1" height="2.3" fill="#b9dcb9" opacity="0.75" rx="1"/>
<rect x="391.8" y="372.6" width="1.8" height="1.4" fill="#b9dcb9" opacity="0.75" rx="1"/>
<rect x="826.1" y="219.0" width="2.2" height="2.2" fill="#b9dcb9" opacity="0.75" rx="1"/>
<rect x="475.7" y="151.7" width="3.5" height="1.6" fill="#b9dcb9" opacity="0.75" rx="1"/>
<rect x="868.8" y="334.2" width="5.0" height="2.6" fill="#b9dcb9" opacity="0.75" rx="1"/>
<rect x="747.5" y="43.7" width="3.3" height="3.2" fill="#b9dcb9" opacity="0.75" rx="1"/>
<rect x="1006.2" y="298.7" width="3.7" height="2.3" fill="#b9dcb9" opacity="0.75" rx="1"/>
<rect x="1097.2" y="376.7" width="3.5" height="2.1" fill="#b9dcb9" opacity="0.75" rx="1"/>
<rect x="582.5" y="57.6" width="5.0" height="1.3" fill="#b9dcb9" opacity="0.75" rx="1"/>
<rect x="546.8" y="164.9" width="2.5" height="2.8" fill="#b9dcb9" opacity="0.75" rx="1"/>
<rect x="1177.0" y="266.4" width="3.6" height="4.4" fill="#b9dcb9" opacity="0.75" rx="1"/>
<rect x="392.7" y="180.0" width="4.2" height="3.3" fill="#b9dcb9" opacity="0.75" rx="1"/>
<rect x="386.4" y="28.1" width="1.8" height="4.4" fill="#b9dcb9" opacity="0.75" rx="1"/>
<rect x="650.1" y="130.6" width="2.0" height="1.5" fill="#b9dcb9" opacity="0.75" rx="1"/>
<rect x="435.9" y="226.3" width="2.8" height="3.3" fill="#b9dcb9" opacity="0.75" rx="1"/>
<rect x="1195.9" y="31.4" width="3.3" height="2.2" fill="#b9dcb9" opacity="0.75" rx="1"/>
<rect x="419.8" y="124.0" width="5.8" height="1.2" fill="#b9dcb9" opacity="0.75" rx="1"/>
<rect x="1051.9" y="355.8" width="3.5" height="3.2" fill="#b9dcb9" opacity="0.75" rx="1"/>
<rect x="541.9" y="159.0" width="4.7" height="3.1" fill="#b9dcb9" opacity="0.75" rx="1"/>
<rect x="432.1" y="312.8" width="5.3" height="1.4" fill="#b9dcb9" opacity="0.75" rx="1"/>
<rect x="1022.0" y="267.1" width="3.7" height="3.7" fill="#b9dcb9" opacity="0.75" rx="1"/>
<rect x="476.3" y="393.4" width="2.2" height="2.3" fill="#b9dcb9" opacity="0.75" rx="1"/>
<rect x="581.8" y="189.2" width="5.3" height="2.8" fill="#b9dcb9" opacity="0.75" rx="1"/>
<rect x="836.7" y="228.6" width="4.3" height="4.1" fill="#b9dcb9" opacity="0.75" rx="1"/>
<rect x="733.1" y="123.0" width="1.9" height="3.8" fill="#b9dcb9" opacity="0.75" rx="1"/>
<rect x="1133.7" y="32.0" width="5.4" height="2.2" fill="#b9dcb9" opacity="0.75" rx="1"/>
<rect x="501.7" y="120.0" width="3.6" height="2.7" fill="#b9dcb9" opacity="0.75" rx="1"/>
<rect x="1201.6" y="284.4" width="3.4" height="2.8" fill="#b9dcb9" opacity="0.75" rx="1"/>
<rect x="481.7" y="2.0" width="5.6" height="2.2" fill="#b9dcb9" opacity="0.75" rx="1"/>
<rect x="542.1" y="141.7" width="4.4" height="2.1" fill="#b9dcb9" opacity="0.75" rx="1"/>
<rect x="1131.6" y="162.3" width="4.9" height="1.3" fill="#b9dcb9" opacity="0.75" rx="1"/>
<rect x="1139.9" y="240.0" width="4.7" height="3.0" fill="#b9dcb9" opacity="0.75" rx="1"/>
<rect x="783.4" y="199.3" width="2.4" height="2.0" fill="#b9dcb9" opacity="0.75" rx="1"/>
<rect x="1117.6" y="389.1" width="4.3" height="3.5" fill="#b9dcb9" opacity="0.75" rx="1"/>
<rect x="1209.9" y="385.1" width="4.4" height="4.4" fill="#b9dcb9" opacity="0.75" rx="1"/>
<rect x="631.0" y="255.3" width="4.6" height="3.0" fill="#b9dcb9" opacity="0.75" rx="1"/>
<rect x="998.6" y="206.7" width="5.9" height="4.4" fill="#b9dcb9" opacity="0.75" rx="1"/>
<rect x="868.8" y="356.1" width="3.1" height="3.9" fill="#b9dcb9" opacity="0.75" rx="1"/>
<rect x="525.0" y="192.8" width="3.3" height="3.2" fill="#b9dcb9" opacity="0.75" rx="1"/>
<rect x="567.1" y="279.6" width="4.7" height="2.8" fill="#b9dcb9" opacity="0.75" rx="1"/>
<rect x="583.5" y="304.8" width="5.2" height="3.2" fill="#b9dcb9" opacity="0.75" rx="1"/>
<rect x="1212.8" y="35.0" width="1.9" height="2.5" fill="#b9dcb9" opacity="0.75" rx="1"/>
<rect x="1101.8" y="126.3" width="4.3" height="3.2" fill="#b9dcb9" opacity="0.75" rx="1"/>
<rect x="660.1" y="208.6" width="3.8" height="3.3" fill="#b9dcb9" opacity="0.75" rx="1"/>
<rect x="1198.8" y="194.6" width="2.6" height="2.7" fill="#b9dcb9" opacity="0.75" rx="1"/>
<rect x="566.7" y="201.3" width="2.5" height="1.4" fill="#b9dcb9" opacity="0.75" rx="1"/>
<rect x="907.2" y="17.3" width="4.0" height="2.9" fill="#b9dcb9" opacity="0.75" rx="1"/>
<rect x="759.1" y="45.6" width="5.1" height="2.0" fill="#b9dcb9" opacity="0.75" rx="1"/>
<rect x="740.1" y="167.6" width="3.4" height="2.6" fill="#b9dcb9" opacity="0.75" rx="1"/>
<rect x="1092.4" y="50.2" width="3.1" height="2.2" fill="#b9dcb9" opacity="0.75" rx="1"/>
<rect x="1002.4" y="360.5" width="3.4" height="2.6" fill="#b9dcb9" opacity="0.75" rx="1"/>
<rect x="614.1" y="191.3" width="2.3" height="3.5" fill="#b9dcb9" opacity="0.75" rx="1"/>
<rect x="809.1" y="349.2" width="4.0" height="1.3" fill="#b9dcb9" opacity="0.75" rx="1"/>
<rect x="1076.2" y="193.5" width="4.8" height="1.8" fill="#b9dcb9" opacity="0.75" rx="1"/>
<rect x="1215.7" y="196.3" width="4.3" height="3.1" fill="#b9dcb9" opacity="0.75" rx="1"/>
<rect x="1017.1" y="239.7" width="1.6" height="3.2" fill="#b9dcb9" opacity="0.75" rx="1"/>
<rect x="1176.1" y="380.6" width="4.5" height="2.7" fill="#b9dcb9" opacity="0.75" rx="1"/>
<rect x="1067.0" y="314.4" width="1.5" height="2.9" fill="#b9dcb9" opacity="0.75" rx="1"/>
<rect x="860.3" y="184.8" width="3.1" height="1.8" fill="#b9dcb9" opacity="0.75" rx="1"/>
<rect x="1079.8" y="123.0" width="1.8" height="1.3" fill="#b9dcb9" opacity="0.75" rx="1"/>
<rect x="1017.0" y="6.7" width="4.8" height="3.3" fill="#b9dcb9" opacity="0.75" rx="1"/>
<rect x="1036.3" y="341.2" width="4.1" height="2.8" fill="#b9dcb9" opacity="0.75" rx="1"/>
<rect x="728.8" y="126.6" width="2.8" height="4.2" fill="#b9dcb9" opacity="0.75" rx="1"/>
<rect x="573.9" y="366.6" width="3.5" height="1.2" fill="#b9dcb9" opacity="0.75" rx="1"/>
<rect x="1025.3" y="284.8" width="6.0" height="1.5" fill="#b9dcb9" opacity="0.75" rx="1"/>
<rect x="953.9" y="385.7" width="4.9" height="4.4" fill="#b9dcb9" opacity="0.75" rx="1"/>
<rect x="491.9" y="87.5" width="4.6" height="1.6" fill="#b9dcb9" opacity="0.75" rx="1"/>
<rect x="397.3" y="378.6" width="4.9" height="3.6" fill="#b9dcb9" opacity="0.75" rx="1"/>
<rect x="737.0" y="196.4" width="2.7" height="2.7" fill="#b9dcb9" opacity="0.75" rx="1"/>
<rect x="523.0" y="396.6" width="4.8" height="2.5" fill="#b9dcb9" opacity="0.75" rx="1"/>
<rect x="965.7" y="71.0" width="1.6" height="3.2" fill="#b9dcb9" opacity="0.75" rx="1"/>
<rect x="633.9" y="115.5" width="3.3" height="4.5" fill="#b9dcb9" opacity="0.75" rx="1"/>
<rect x="1251.6" y="314.0" width="4.0" height="4.0" fill="#b9dcb9" opacity="0.75" rx="1"/>
<rect x="655.9" y="369.2" width="4.9" height="2.2" fill="#b9dcb9" opacity="0.75" rx="1"/>
<rect x="1070.9" y="175.8" width="2.6" height="2.4" fill="#b9dcb9" opacity="0.75" rx="1"/>
<rect x="732.8" y="50.6" width="5.6" height="3.2" fill="#b9dcb9" opacity="0.75" rx="1"/>
<rect x="977.1" y="11.9" width="2.0" height="3.2" fill="#b9dcb9" opacity="0.75" rx="1"/>
<rect x="940.8" y="344.6" width="2.9" height="1.9" fill="#b9dcb9" opacity="0.75" rx="1"/>
<rect x="702.0" y="392.5" width="5.7" height="1.4" fill="#b9dcb9" opacity="0.75" rx="1"/>
<rect x="1004.5" y="225.2" width="6.0" height="3.1" fill="#b9dcb9" opacity="0.75" rx="1"/>
<rect x="857.2" y="280.9" width="3.5" height="2.9" fill="#b9dcb9" opacity="0.75" rx="1"/>
<rect x="1171.5" y="141.2" width="3.1" height="2.0" fill="#b9dcb9" opacity="0.75" rx="1"/>
<rect x="740.4" y="352.6" width="2.0" height="2.7" fill="#b9dcb9" opacity="0.75" rx="1"/>
<rect x="890.2" y="55.8" width="3.1" height="3.4" fill="#b9dcb9" opacity="0.75" rx="1"/>
<rect x="744.0" y="393.0" width="5.6" height="3.9" fill="#b9dcb9" opacity="0.75" rx="1"/>
<rect x="583.6" y="52.7" width="2.3" height="4.0" fill="#b9dcb9" opacity="0.75" rx="1"/>
<rect x="404.1" y="260.4" width="5.6" height="3.2" fill="#b9dcb9" opacity="0.75" rx="1"/>
<rect x="509.8" y="315.6" width="5.3" height="2.6" fill="#b9dcb9" opacity="0.75" rx="1"/>
<rect x="904.7" y="294.3" width="1.9" height="1.9" fill="#b9dcb9" opacity="0.75" rx="1"/>
<rect x="738.7" y="201.9" width="3.7" height="4.4" fill="#b9dcb9" opacity="0.75" rx="1"/>
<rect x="699.7" y="235.8" width="4.0" height="2.0" fill="#b9dcb9" opacity="0.75" rx="1"/>
<rect x="640.2" y="54.3" width="4.6" height="3.4" fill="#b9dcb9" opacity="0.75" rx="1"/>
<rect x="474.4" y="353.9" width="3.9" height="3.4" fill="#b9dcb9" opacity="0.75" rx="1"/>
<rect x="702.4" y="287.2" width="4.9" height="1.7" fill="#b9dcb9" opacity="0.75" rx="1"/>
<rect x="1173.1" y="363.0" width="5.2" height="3.3" fill="#b9dcb9" opacity="0.75" rx="1"/>
<rect x="678.2" y="22.1" width="1.9" height="4.0" fill="#b9dcb9" opacity="0.75" rx="1"/>
<rect x="898.5" y="363.3" width="5.9" height="1.3" fill="#b9dcb9" opacity="0.75" rx="1"/>
<rect x="448.5" y="2.5" width="1.6" height="2.5" fill="#b9dcb9" opacity="0.75" rx="1"/>
<rect x="1117.4" y="305.6" width="4.2" height="3.5" fill="#b9dcb9" opacity="0.75" rx="1"/>
<rect x="1173.1" y="346.1" width="1.9" height="3.3" fill="#b9dcb9" opacity="0.75" rx="1"/>
<rect x="661.5" y="110.9" width="3.2" height="1.6" fill="#b9dcb9" opacity="0.75" rx="1"/>
<rect x="1061.4" y="41.5" width="1.7" height="1.9" fill="#b9dcb9" opacity="0.75" rx="1"/>
<rect x="878.9" y="217.7" width="3.5" height="3.3" fill="#b9dcb9" opacity="0.75" rx="1"/>
<rect x="659.0" y="353.3" width="4.1" height="4.1" fill="#b9dcb9" opacity="0.75" rx="1"/></g>
<polyline points="691,280 693,300 689,322 700,325 717,322 742,319" fill="none" stroke="#8fc6e6" stroke-width="1.0" stroke-linejoin="round" stroke-linecap="round"/>
<polyline points="742,300 765,302 785,308" fill="none" stroke="#8fc6e6" stroke-width="1.0" stroke-linejoin="round" stroke-linecap="round"/>
<polyline points="722,372 740,366 757,361" fill="none" stroke="#8fc6e6" stroke-width="1.0" stroke-linejoin="round" stroke-linecap="round"/>
<polyline points="559,264 570,266 580,270 592,268 604,270" fill="none" stroke="#8fc6e6" stroke-width="3" stroke-linejoin="round" stroke-linecap="round"/>
<polyline points="558,276 563,285 566,295 570,305" fill="none" stroke="#8fc6e6" stroke-width="2" stroke-linejoin="round" stroke-linecap="round"/>
<polyline points="600,270 610,265 625,262 640,258 655,250 665,245" fill="none" stroke="#8fc6e6" stroke-width="1.0" stroke-linejoin="round" stroke-linecap="round"/>
<polyline points="579,330 585,345 580,360 590,375 600,385 596,401" fill="none" stroke="#8fc6e6" stroke-width="1.0" stroke-linejoin="round" stroke-linecap="round"/>
<polyline points="497,350 510,360 530,362 545,372 560,380 575,395 580,401" fill="none" stroke="#8fc6e6" stroke-width="1.0" stroke-linejoin="round" stroke-linecap="round"/>
<polyline points="640,306 655,305 665,318 690,322 715,318 740,315" fill="none" stroke="#8fc6e6" stroke-width="1.0" stroke-linejoin="round" stroke-linecap="round"/>
<polyline points="730,340 745,352 760,355 790,365 810,372" fill="none" stroke="#8fc6e6" stroke-width="1.0" stroke-linejoin="round" stroke-linecap="round"/>
<polyline points="920,340 930,355 925,372 935,390" fill="none" stroke="#8fc6e6" stroke-width="1.0" stroke-linejoin="round" stroke-linecap="round"/>
<polyline points="1040,250 1055,255 1070,262 1090,262 1100,270" fill="none" stroke="#8fc6e6" stroke-width="1.0" stroke-linejoin="round" stroke-linecap="round"/>
<polyline points="1130,100 1150,110 1170,105" fill="none" stroke="#8fc6e6" stroke-width="1.0" stroke-linejoin="round" stroke-linecap="round"/>
<polyline points="567,208 575,200 602,195 623,191 636,194 648,188 669,183 686,184 698,181 723,175 740,179 765,183 788,184 810,181 832,188 852,202" fill="none" stroke="#a6cfa4" stroke-width="4" stroke-linejoin="round"/>
<polygon points="382,1 736,1 742,21 744,27 760,38 781,46 790,54 798,60 804,71 806,77 825,83 846,88 867,92 887,94 898,88 912,90 925,84 940,82 952,79 954,56 962,46 979,27 998,12 1017,4 1024,1 1124,1 1124,3 1122,18 1117,25 1110,29 1089,37 1078,44 1067,57 1058,70 1050,81 1038,86 1027,92 1021,102 1020,122 1012,128 1001,126 1003,130 1010,131 1009,142 1008,160 1007,178 1004,180 993,188 979,194 960,197 938,201 916,206 891,211 866,211 852,202 832,188 810,181 788,184 765,183 740,179 723,175 698,181 686,184 669,183 648,188 636,194 623,191 602,195 575,200 567,208 557,233 561,250 565,267 558,292 551,303 541,315 527,321 513,322 503,319 496,313 482,310 465,309 456,310 454,322 453,337 449,353 446,363 444,377 446,401 382,401" fill="#aad3df" stroke="#9cc7b0" stroke-width="0.8"/>
<polygon points="983,164 990,140 995,125 1001,120 1008,130 1007,178 1000,182 990,180" fill="#a3c8d8" opacity="0.35"/>
<polygon points="960,190 980,185 1004,175 1007,180 993,190 975,194" fill="#a3c8d8" opacity="0.35"/>
<polygon points="1030,10 1060,5 1090,8 1100,20 1080,30 1050,35 1020,30" fill="#a3c8d8" opacity="0.35"/>
<polygon points="1000,40 1040,35 1060,45 1040,55 1010,55" fill="#a3c8d8" opacity="0.35"/>
<polygon points="403,200 405,199 406,205 408,212 410,222 407,225 403,224 402,214 403,206" fill="#cfe3b8"/>
<polygon points="570,1 594,1 590,3 578,4" fill="#cfe3c8"/>
<polyline points="630,280 636.6,302 652,315 656,324 663,339 676,346 682.5,350 687,365 691,374 698,385 713,394 722,401" fill="none" stroke="#d08888" stroke-width="2.0" stroke-linejoin="round" stroke-linecap="round"/>
<polyline points="630,280 636.6,302 652,315 656,324 663,339 676,346 682.5,350 687,365 691,374 698,385 713,394 722,401" fill="none" stroke="#7e8090" stroke-width="0.8" stroke-linejoin="round" stroke-linecap="round"/>
<polyline points="562,300 596,289 618,279 640,276 652,280 691,289 713,297 742,313 757,319 779,328 788,337 796,348 818,359 831,365 845,365 860,366" fill="none" stroke="#eea08c" stroke-width="1.4" stroke-linejoin="round" stroke-linecap="round"/>
<polyline points="573,311 580,324 586,335 595,352 599,365 615,376 623,394 626,401" fill="none" stroke="#eea08c" stroke-width="1.3" stroke-linejoin="round" stroke-linecap="round"/>
<polyline points="599,352 623,357 643,368 656,376 665,389 669,398" fill="none" stroke="#f2cf9c" stroke-width="1.1" stroke-linejoin="round" stroke-linecap="round"/>
<polyline points="612,280 608,308 610,335 605,360 600,380" fill="none" stroke="#b8bccb" stroke-width="0.8" stroke-linejoin="round" stroke-linecap="round"/>
<polyline points="652,319 691,313 742,306 780,312 820,318" fill="none" stroke="#b8bccb" stroke-width="0.8" stroke-linejoin="round" stroke-linecap="round"/>
<polyline points="713,324 750,357 759,367 800,368 840,367 870,372" fill="none" stroke="#b8bccb" stroke-width="0.8" stroke-linejoin="round" stroke-linecap="round"/>
<polyline points="1180,100 1181,136 1183,189 1184,211 1180,233 1169,267 1155,300 1140,340 1125,401" fill="none" stroke="#eea08c" stroke-width="1.3" stroke-linejoin="round" stroke-linecap="round"/>
<polyline points="1108,239 1147,222 1183,217 1211,203 1224,206 1258,194 1272,183 1280,180" fill="none" stroke="#eea08c" stroke-width="1.2" stroke-linejoin="round" stroke-linecap="round"/>
<polyline points="1263,100 1266,133 1272,161 1280,183" fill="none" stroke="#eea08c" stroke-width="1.2" stroke-linejoin="round" stroke-linecap="round"/>
<polyline points="1105,122 1141,136 1174,147 1197,136 1227,122 1244,106 1255,95" fill="none" stroke="#f2cf9c" stroke-width="1.1" stroke-linejoin="round" stroke-linecap="round"/>
<polyline points="1105,183 1127,192 1160,203 1183,206" fill="none" stroke="#f2cf9c" stroke-width="1.1" stroke-linejoin="round" stroke-linecap="round"/>
<polyline points="1105,283 1138,278 1169,267 1197,256 1222,244 1244,222 1261,200 1272,175 1280,167" fill="none" stroke="#7c8690" stroke-width="1.1" stroke-linejoin="round" stroke-linecap="round"/>
<polyline points="1125,30 1140,60 1150,80 1155,100 1150,130" fill="none" stroke="#eea08c" stroke-width="1.2" stroke-linejoin="round" stroke-linecap="round"/>
<polyline points="1200,40 1225,60 1250,70 1280,80" fill="none" stroke="#f2cf9c" stroke-width="1.0" stroke-linejoin="round" stroke-linecap="round"/>
<polyline points="1190,80 1210,110 1230,140 1240,170" fill="none" stroke="#f2cf9c" stroke-width="1.0" stroke-linejoin="round" stroke-linecap="round"/>
<polyline points="850,30 870,45 890,60 905,85" fill="none" stroke="#f2cf9c" stroke-width="1.0" stroke-linejoin="round" stroke-linecap="round"/>
<polyline points="790,45 820,50 850,55 880,65 900,70" fill="none" stroke="#f2cf9c" stroke-width="1.0" stroke-linejoin="round" stroke-linecap="round"/>
<polyline points="960,0 955,20 950,45 952,60" fill="none" stroke="#eea08c" stroke-width="1.2" stroke-linejoin="round" stroke-linecap="round"/>
<polyline points="1060,140 1080,150 1105,152 1130,150" fill="none" stroke="#f2cf9c" stroke-width="1.0" stroke-linejoin="round" stroke-linecap="round"/>
<polyline points="1040,200 1060,210 1090,225 1105,228" fill="none" stroke="#eea08c" stroke-width="1.1" stroke-linejoin="round" stroke-linecap="round"/>
<polyline points="742,4 748,8 764,15 787,10 812,6 831,17 853,19 876,18 898,21 914,12 931,7 959,3 981,0" fill="none" stroke="#e68aa8" stroke-width="1.8" stroke-linejoin="round" stroke-linecap="round"/>
<polyline points="1160,0 1152,8 1141,17 1130,25 1119,33 1104,44 1091,50 1077,56 1066,69 1055,94 1052,117 1054,133 1047,156 1036,178 1025.6,200 1020,233 1014,256 1006,278 998,294 987,311 970,325 953,331 931,336 903,347 887,358 876,378 873,401" fill="none" stroke="#e68aa8" stroke-width="1.8" stroke-linejoin="round" stroke-linecap="round"/>
<polyline points="1136,17 1155,14 1174,15 1191,22 1213,26 1244,25 1269,22 1280,19" fill="none" stroke="#e68aa8" stroke-width="1.8" stroke-linejoin="round" stroke-linecap="round"/>
<polyline points="1191,22 1180,30 1172,44" fill="none" stroke="#e68aa8" stroke-width="1.5" stroke-linejoin="round" stroke-linecap="round"/>
<polyline points="995,308 1014,328 1031,350 1070,350 1103,339 1130,320 1160,300 1200,290 1250,285 1280,280" fill="none" stroke="#eea08c" stroke-width="1.4" stroke-linejoin="round" stroke-linecap="round"/>
<polyline points="1147,75 1130,89 1113,111 1100,130 1090,150" fill="none" stroke="#eea08c" stroke-width="1.3" stroke-linejoin="round" stroke-linecap="round"/>
<polyline points="1105,360 1130,345 1150,335 1170,330 1200,330 1240,320 1280,300" fill="none" stroke="#eea08c" stroke-width="1.2" stroke-linejoin="round" stroke-linecap="round"/>
<polyline points="1000,302 1000,330 1010,360 1014,385 1020,400" fill="none" stroke="#eea08c" stroke-width="1.2" stroke-linejoin="round" stroke-linecap="round"/>
<polyline points="820,380 850,382 880,383 920,384 960,385 1000,392 1060,395 1100,380 1140,365" fill="none" stroke="#eea08c" stroke-width="1.2" stroke-linejoin="round" stroke-linecap="round"/>
<polyline points="900,21 912,33 914,44 925,60 935,75" fill="none" stroke="#eea08c" stroke-width="1.2" stroke-linejoin="round" stroke-linecap="round"/>
<polyline points="835,20 850,40 870,55 900,60 930,45" fill="none" stroke="#f2cf9c" stroke-width="1.1" stroke-linejoin="round" stroke-linecap="round"/>
<polyline points="600,190 620,200 650,210 670,205 700,190 730,190 760,200 790,205 820,205 850,215 880,225 910,215 940,212 970,215 1000,225 1020,230" fill="none" stroke="#f2cf9c" stroke-width="1.2" stroke-linejoin="round" stroke-linecap="round"/>
<polyline points="600,200 595,230 590,260 598,268" fill="none" stroke="#f2cf9c" stroke-width="1.1" stroke-linejoin="round" stroke-linecap="round"/>
<polyline points="700,190 690,215 680,240 685,270" fill="none" stroke="#f2cf9c" stroke-width="1.0" stroke-linejoin="round" stroke-linecap="round"/>
<polyline points="860,210 850,240 830,270 815,300 810,340 800,380 790,400" fill="none" stroke="#f2cf9c" stroke-width="1.1" stroke-linejoin="round" stroke-linecap="round"/>
<polyline points="1040,230 1060,250 1080,270 1110,290 1140,300" fill="none" stroke="#f2cf9c" stroke-width="1.0" stroke-linejoin="round" stroke-linecap="round"/>
<polyline points="1115,220 1150,240 1180,265 1210,300 1240,340 1260,380" fill="none" stroke="#f2cf9c" stroke-width="1.0" stroke-linejoin="round" stroke-linecap="round"/>
<polyline points="470,340 480,360 476,380 470,400" fill="none" stroke="#eea08c" stroke-width="1.2" stroke-linejoin="round" stroke-linecap="round"/>
<polyline points="520,318 540,310 558,292" fill="none" stroke="#b89060" stroke-width="1.2" stroke-linejoin="round" stroke-linecap="round"/>
<polyline points="600,400 620,380 650,360 680,350" fill="none" stroke="#f2cf9c" stroke-width="1.0" stroke-linejoin="round" stroke-linecap="round"/>
<polyline points="750,290 770,310 790,320 820,330 850,340" fill="none" stroke="#f2cf9c" stroke-width="1.0" stroke-linejoin="round" stroke-linecap="round"/>
<polyline points="778,10 800,17 800,39 812,53 826,61 831,75 850,82 870,86 887,92 903,86 914,89 931,72 942,56 951,36 951,17 952,0" fill="none" stroke="#7c8690" stroke-width="1.1" stroke-linejoin="round" stroke-linecap="round"/>
<polyline points="814,12 839,4 850,0" fill="none" stroke="#7c8690" stroke-width="1.1" stroke-linejoin="round" stroke-linecap="round"/>
<polyline points="876,8 887,22 898,36 920,36 931,36 962,28 987,14 1003,1" fill="none" stroke="#7c8690" stroke-width="1.1" stroke-linejoin="round" stroke-linecap="round"/>
<polyline points="1024,128 1024,200 1023,200 1019,228 1025,256 1020,281 1012,292 995,303 964,303 953,306 942,317 928,325 914,336 898,344 884,358 873,389 870,401" fill="none" stroke="#7c8690" stroke-width="1.1" stroke-linejoin="round" stroke-linecap="round"/>
<polyline points="1012,292 1037,286 1064,289 1098,292 1120,280 1136,279 1165,271 1201,253 1237,228 1266,189 1280,178" fill="none" stroke="#7c8690" stroke-width="1.1" stroke-linejoin="round" stroke-linecap="round"/>
<polyline points="1052,106 1074,89 1097,74 1111,69 1136,68 1152,64 1163,58 1180,61 1202,78 1224,89 1244,94 1258,92 1269,83 1280,75" fill="none" stroke="#7c8690" stroke-width="1.1" stroke-linejoin="round" stroke-linecap="round"/>
<polyline points="1130,11 1152,17 1174,11 1216,6 1244,7 1280,6" fill="none" stroke="#7c8690" stroke-width="1.1" stroke-linejoin="round" stroke-linecap="round"/>
<polyline points="1172,11 1169,44" fill="none" stroke="#7c8690" stroke-width="1.1" stroke-linejoin="round" stroke-linecap="round"/>
<polyline points="1263,89 1266,117 1274,122 1280,130" fill="none" stroke="#7c8690" stroke-width="1.1" stroke-linejoin="round" stroke-linecap="round"/>
<polyline points="1280,296 1216,325 1180,354 1151,361 1129,376 1110,390 1100,401" fill="none" stroke="#7c8690" stroke-width="1.1" stroke-linejoin="round" stroke-linecap="round"/>
<polyline points="382,74 487,107 663,85 777,130 902,150 927,144 946,114 974,108 1016,51 1117,1" fill="none" stroke="#a99ab8" stroke-width="1.3"/>
<path d="M411 219 Q 470 192 560 189 L 612 191" fill="none" stroke="#6a9af0" stroke-width="1" stroke-dasharray="4 3"/>
<path d="M410 218 L 560 268" fill="none" stroke="#6a9af0" stroke-width="1" stroke-dasharray="4 3"/>
<path d="M956 56 L970 97 L975 118 L1020 117" fill="none" stroke="#6a9af0" stroke-width="0.8" stroke-dasharray="3 3"/>
</g>
<rect x="300" y="172" width="441" height="300" fill="rgb(150,200,255)" fill-opacity="0.09" stroke="#3b82f6" stroke-opacity="0.35" stroke-width="2"/>
<rect x="813" y="-50" width="520" height="338" fill="rgb(150,200,255)" fill-opacity="0.09" stroke="#3b82f6" stroke-opacity="0.35" stroke-width="2"/>
<rect x="559" y="-50" width="546" height="500" fill="rgb(150,200,255)" fill-opacity="0.28" stroke="#3b82f6" stroke-width="2"/>
<g opacity="0.99"><text class="ln" x="752" y="13" font-size="11" textLength="19" lengthAdjust="spacingAndGlyphs">Pyle</text>
<text class="ln" x="782" y="28" font-size="11" textLength="43" lengthAdjust="spacingAndGlyphs">Bridgend</text>
<text class="ln" x="734" y="41" font-size="11" textLength="46" lengthAdjust="spacingAndGlyphs">Porthcawl</text>
<text class="ln" x="825" y="52" font-size="11" textLength="51" lengthAdjust="spacingAndGlyphs">Cowbridge</text>
<text class="ln" x="803" y="84" font-size="11" textLength="67" lengthAdjust="spacingAndGlyphs">Llantwit Major</text>
<text class="ln" x="853" y="4" font-size="11" textLength="49" lengthAdjust="spacingAndGlyphs">Llantrisant</text>
<text class="ln" x="904" y="84" font-size="11" textLength="25" lengthAdjust="spacingAndGlyphs">Barry</text>
<text class="ln" x="928" y="41" font-size="14" textLength="41" lengthAdjust="spacingAndGlyphs">Cardiff</text>
<text class="ln" x="931" y="67" font-size="11" textLength="37" lengthAdjust="spacingAndGlyphs">Penarth</text>
<text class="ln" x="1073" y="39" font-size="11" textLength="51" lengthAdjust="spacingAndGlyphs">Portishead</text>
<text class="ln" x="1046" y="67" font-size="11" textLength="43" lengthAdjust="spacingAndGlyphs">Clevedon</text>
<text class="ln" x="987" y="112" font-size="11" textLength="69" lengthAdjust="spacingAndGlyphs">Weston-super-</text>
<text class="ln" x="1010" y="125" font-size="11" textLength="24" lengthAdjust="spacingAndGlyphs">Mare</text>
<text class="ln" x="991" y="175" font-size="11" textLength="47" lengthAdjust="spacingAndGlyphs">Burnham-</text>
<text class="ln" x="998" y="188" font-size="11" textLength="32" lengthAdjust="spacingAndGlyphs">on-Sea</text>
<text class="ln" x="1059" y="154" font-size="11" textLength="43" lengthAdjust="spacingAndGlyphs">Axbridge</text>
<text class="ln" x="1146" y="9" font-size="11" textLength="64" lengthAdjust="spacingAndGlyphs">Bradley Stoke</text>
<text class="ln" x="1218" y="5" font-size="11" textLength="19" lengthAdjust="spacingAndGlyphs">Yate</text>
<text class="lp" x="1189" y="36" font-size="11" textLength="36" lengthAdjust="spacingAndGlyphs">West of</text>
<text class="lp" x="1187" y="48" font-size="11" textLength="39" lengthAdjust="spacingAndGlyphs">England</text>
<text class="ln" x="1142" y="57" font-size="14" textLength="38" lengthAdjust="spacingAndGlyphs">Bristol</text>
<text class="ln" x="1172" y="79" font-size="11" textLength="49" lengthAdjust="spacingAndGlyphs">Keynsham</text>
<text class="ln" x="1235" y="100" font-size="13" textLength="25" lengthAdjust="spacingAndGlyphs">Bath</text>
<text class="ln" x="1179" y="148" font-size="11" textLength="47" lengthAdjust="spacingAndGlyphs">Midsomer</text>
<text class="ln" x="1186" y="161" font-size="11" textLength="33" lengthAdjust="spacingAndGlyphs">Norton</text>
<text class="ln" x="1246" y="186" font-size="11" textLength="30" lengthAdjust="spacingAndGlyphs">Frome</text>
<text class="ln" x="1127" y="200" font-size="13" textLength="31" lengthAdjust="spacingAndGlyphs">Wells</text>
<text class="ln" x="1088" y="236" font-size="11" textLength="57" lengthAdjust="spacingAndGlyphs">Glastonbury</text>
<text class="ln" x="1163" y="270" font-size="11" textLength="53" lengthAdjust="spacingAndGlyphs">Castle Cary</text>
<text class="ln" x="1268" y="270" font-size="11" textLength="14" lengthAdjust="spacingAndGlyphs">Me</text>
<text class="ln" x="1252" y="301" font-size="11" textLength="33" lengthAdjust="spacingAndGlyphs">Gilling</text>
<text class="ln" x="1056" y="301" font-size="11" textLength="43" lengthAdjust="spacingAndGlyphs">Langport</text>
<text class="ln" x="986" y="247" font-size="11" textLength="52" lengthAdjust="spacingAndGlyphs">Bridgwater</text>
<text class="ln" x="969" y="269" font-size="11" textLength="77" lengthAdjust="spacingAndGlyphs">North Petherton</text>
<text class="ln" x="817" y="201" font-size="11" textLength="46" lengthAdjust="spacingAndGlyphs">Minehead</text>
<text class="ln" x="874" y="216" font-size="11" textLength="39" lengthAdjust="spacingAndGlyphs">Watchet</text>
<text class="lg" x="774" y="229" font-size="12" textLength="39" lengthAdjust="spacingAndGlyphs">Exmoor</text>
<text class="lg" x="771" y="244" font-size="12" textLength="46" lengthAdjust="spacingAndGlyphs">National</text>
<text class="lg" x="782" y="258" font-size="12" textLength="24" lengthAdjust="spacingAndGlyphs">Park</text>
<text class="ln" x="791" y="297" font-size="11" textLength="45" lengthAdjust="spacingAndGlyphs">Dulverton</text>
<text class="ln" x="869" y="297" font-size="11" textLength="64" lengthAdjust="spacingAndGlyphs">Wiveliscombe</text>
<text class="ln" x="957" y="312" font-size="11" textLength="38" lengthAdjust="spacingAndGlyphs">Taunton</text>
<text class="ln" x="816" y="326" font-size="11" textLength="41" lengthAdjust="spacingAndGlyphs">Bampton</text>
<text class="ln" x="906" y="335" font-size="11" textLength="49" lengthAdjust="spacingAndGlyphs">Wellington</text>
<text class="ln" x="820" y="378" font-size="11" textLength="36" lengthAdjust="spacingAndGlyphs">Tiverton</text>
<text class="ln" x="843" y="404" font-size="11" textLength="54" lengthAdjust="spacingAndGlyphs">Cullompton</text>
<text class="lg" x="935" y="379" font-size="11" textLength="49" lengthAdjust="spacingAndGlyphs">Blackdown</text>
<text class="lg" x="930" y="391" font-size="11" textLength="59" lengthAdjust="spacingAndGlyphs">Hills National</text>
<text class="lg" x="935" y="403" font-size="11" textLength="49" lengthAdjust="spacingAndGlyphs">Landscape</text>
<text class="ln" x="1025" y="364" font-size="11" textLength="42" lengthAdjust="spacingAndGlyphs">Ilminster</text>
<text class="ln" x="1014" y="395" font-size="11" textLength="29" lengthAdjust="spacingAndGlyphs">Chard</text>
<text class="ln" x="1063" y="389" font-size="11" textLength="50" lengthAdjust="spacingAndGlyphs">Crewkerne</text>
<text class="ln" x="1135" y="355" font-size="11" textLength="27" lengthAdjust="spacingAndGlyphs">Yeovil</text>
<text class="ln" x="1239" y="359" font-size="11" textLength="51" lengthAdjust="spacingAndGlyphs">Sturmins</text>
<text class="ln" x="1248" y="371" font-size="11" textLength="42" lengthAdjust="spacingAndGlyphs">Newton</text>
<text class="ln" x="579" y="200" font-size="11" textLength="51" lengthAdjust="spacingAndGlyphs">Ilfracombe</text>
<text class="ln" x="693" y="188" font-size="11" textLength="32" lengthAdjust="spacingAndGlyphs">Lynton</text>
<text class="ln" x="602" y="274" font-size="11" textLength="52" lengthAdjust="spacingAndGlyphs">Barnstaple</text>
<text class="lg" x="452" y="307" font-size="11" textLength="55" lengthAdjust="spacingAndGlyphs">North Devon</text>
<text class="lg" x="447" y="318" font-size="11" textLength="65" lengthAdjust="spacingAndGlyphs">Coast National</text>
<text class="lg" x="456" y="330" font-size="11" textLength="47" lengthAdjust="spacingAndGlyphs">Landscape</text>
<text class="ln" x="555" y="310" font-size="11" textLength="39" lengthAdjust="spacingAndGlyphs">Bideford</text>
<text class="ln" x="559" y="349" font-size="11" textLength="78" lengthAdjust="spacingAndGlyphs">Great Torrington</text>
<text class="ln" x="679" y="312" font-size="11" textLength="63" lengthAdjust="spacingAndGlyphs">South Molton</text>
<text class="ln" x="670" y="372" font-size="11" textLength="55" lengthAdjust="spacingAndGlyphs">Chulmleigh</text></g>
</g>
</svg>
<div class="ctl">
  <div style="top:0;"><svg width="30" height="30"><rect x="10" y="14" width="10" height="2" fill="#000"/><rect x="14" y="10" width="2" height="10" fill="#000"/></svg></div>
  <div class="sep" style="top:30px;"></div>
  <div style="top:31px;"><svg width="30" height="30"><rect x="10" y="14" width="10" height="2" fill="#000"/></svg></div>
  <div class="sep" style="top:61px;"></div>
  <div style="top:62px;"><svg width="30" height="30"><path d="M9 15 V20 H14 M9 20 L14.2 14.8 M15.8 13.2 L21 8 M16 8 H21 V13" stroke="#000" stroke-width="1.5" fill="none"/></svg></div>
  <div class="sep" style="top:92px;"></div>
  <div style="top:93px;"><svg width="30" height="30"><rect x="10" y="14" width="10" height="2" fill="#000"/><rect x="14" y="10" width="2" height="10" fill="#000"/></svg></div>
</div>
<div class="attr"><svg width="199" height="18" style="position:absolute;left:0;top:0"><rect x="6" y="6" width="10" height="3.5" fill="#4a78d8"/><rect x="6" y="9.5" width="10" height="3.5" fill="#ffd500"/><g opacity="0.99" font-family="Liberation Sans" font-size="10"><text x="19" y="13" fill="#1a6fd0" textLength="29" lengthAdjust="spacingAndGlyphs">Leaflet</text><rect x="51" y="5" width="1" height="9" fill="#c4c8d0"/><text x="56" y="13" fill="#a0a4ac" textLength="8" lengthAdjust="spacingAndGlyphs">©</text><text x="67" y="13" fill="#1a6fd0" textLength="70" lengthAdjust="spacingAndGlyphs">OpenStreetMap</text><text x="141" y="13" fill="#a4a8b0" textLength="53" lengthAdjust="spacingAndGlyphs">contributors</text></g></svg></div>
</div>
</body></html>
